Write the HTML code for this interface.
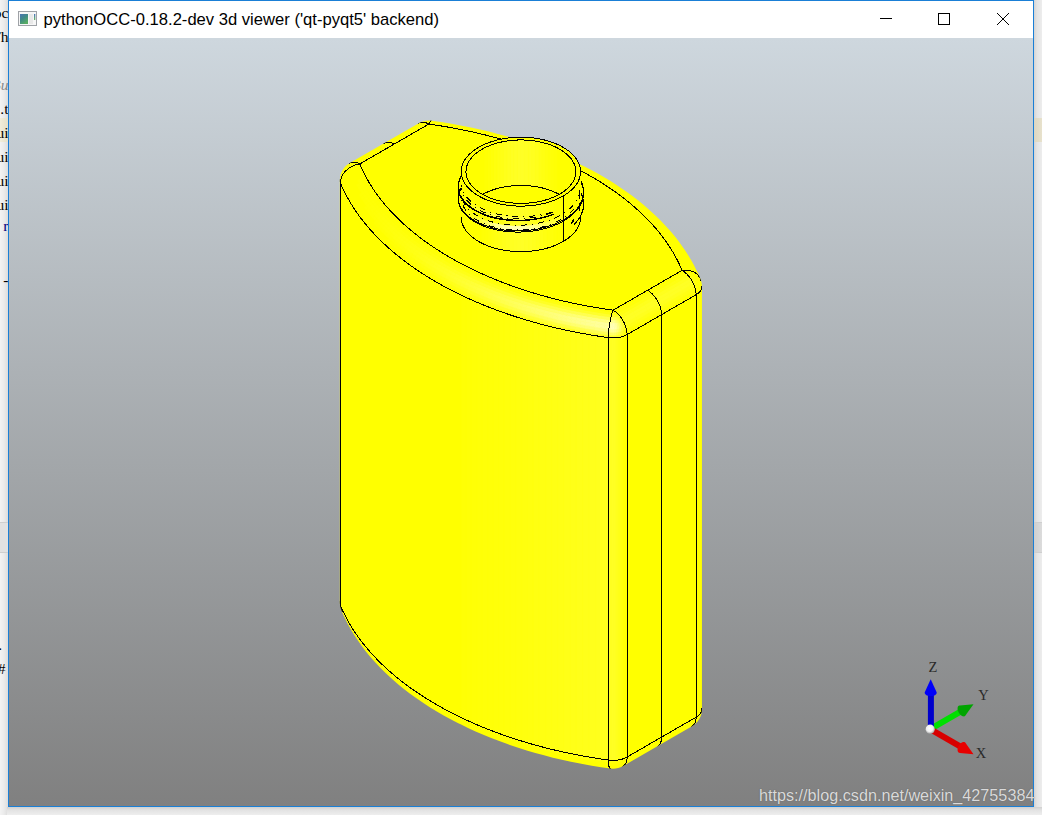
<!DOCTYPE html>
<html><head><meta charset="utf-8">
<style>
html,body{margin:0;padding:0;}
body{width:1042px;height:815px;position:relative;overflow:hidden;background:#ececec;font-family:"Liberation Sans",sans-serif;}
#lstrip{position:absolute;left:0;top:0;width:8px;height:815px;background:linear-gradient(to right,#f3f3f3 0px,#ebebeb 4px,#dcdcdc 8px);}
#rstrip{position:absolute;left:1034px;top:0;width:8px;height:815px;background:linear-gradient(to right,#d4d4d4 0px,#e4e4e4 3px,#ededed 8px);}
#bstrip{position:absolute;left:7px;top:807px;width:1035px;height:8px;background:linear-gradient(to bottom,#d0d0d0 0px,#e2e2e2 3px,#eeeeee 8px);}
.code{position:absolute;right:1033.5px;font-family:"Liberation Serif",serif;font-size:15.5px;color:#000;line-height:16px;white-space:pre;}
#win{position:absolute;left:8px;top:0;width:1024px;height:805px;border:1px solid #1a7fd6;background:#fff;}
#title{position:absolute;left:0;top:0;width:1024px;height:37px;background:#fff;}
#ttext{position:absolute;left:34.5px;top:9.2px;font-size:16.6px;color:#000;white-space:nowrap;}
#view{position:absolute;left:0;top:37px;width:1024px;height:768px;background:linear-gradient(to bottom,rgb(206,215,222),rgb(128,128,128));}
#svg{position:absolute;left:0;top:0;}
#wm{position:absolute;left:759px;top:786.3px;font-size:16.2px;color:#dadada;white-space:nowrap;text-shadow:0 0 1px rgba(60,60,60,.6);}
</style></head><body>
<div id="lstrip"></div>
<div style="position:absolute;left:0;top:118px;width:8px;height:24px;background:linear-gradient(to right,#f2eedb,#e6e0c8)"></div>
<div style="position:absolute;left:0;top:522px;width:8px;height:1px;background:#cfcfcf"></div>
<div style="position:absolute;left:0;top:523px;width:8px;height:29px;background:#e2e2e2"></div>
<div style="position:absolute;left:0;top:552px;width:8px;height:1px;background:#cfcfcf"></div>
<div class="code" style="top:5px">oc</div>
<div class="code" style="top:29px">Th</div>
<div class="code" style="top:77px;color:#888;font-style:italic">Bu</div>
<div class="code" style="top:101px">.t</div>
<div class="code" style="top:125px">ui</div>
<div class="code" style="top:149px">ui</div>
<div class="code" style="top:173px">ui</div>
<div class="code" style="top:197px">ui</div>
<div class="code" style="top:218px;color:#000080"> r</div>
<div class="code" style="top:272px"> -</div>
<div class="code" style="top:637px;right:1040px"> .</div>
<div class="code" style="top:661px;right:1036.5px"> #</div>
<div id="rstrip"></div>
<div style="position:absolute;left:1034px;top:118px;width:8px;height:24px;background:linear-gradient(to right,#dcd6c2,#e8e2cc)"></div>
<div style="position:absolute;left:1034px;top:522px;width:8px;height:1px;background:#cfcfcf"></div>
<div style="position:absolute;left:1034px;top:523px;width:8px;height:29px;background:linear-gradient(to right,#cfcfcf,#dcdcdc)"></div>
<div style="position:absolute;left:1034px;top:552px;width:8px;height:1px;background:#cfcfcf"></div>
<div id="bstrip"></div>
<div id="win">
 <div id="title"><div id="ttext">pythonOCC-0.18.2-dev 3d viewer ('qt-pyqt5' backend)</div></div>
 <div id="view"></div>
</div>
<svg id="svg" width="1042" height="815" viewBox="0 0 1042 815">
<!-- title icons -->
<defs><linearGradient id="icg" x1="0" y1="0" x2="0.6" y2="1"><stop offset="0" stop-color="#4a74b4"/><stop offset="0.5" stop-color="#3f8a86"/><stop offset="1" stop-color="#58ac62"/></linearGradient>
<linearGradient id="icb" x1="0" y1="0" x2="0" y2="1"><stop offset="0" stop-color="#4a74c0"/><stop offset="1" stop-color="#6ab860"/></linearGradient></defs>
<g>
 <rect x="18.5" y="11.5" width="18" height="14" fill="#f6f6f6" stroke="#9fa2a7" stroke-width="1"/>
 <rect x="20" y="14" width="8" height="10" fill="url(#icg)"/>
 <rect x="29" y="14" width="4" height="10" fill="#e8e8e8"/>
 <rect x="34" y="14" width="1.3" height="6" fill="url(#icb)"/>
</g>
<g stroke="#000" stroke-width="1" fill="none">
 <line x1="880" y1="18.5" x2="892" y2="18.5"/>
 <rect x="938.5" y="13.5" width="11" height="11"/>
 <line x1="997" y1="13" x2="1009" y2="25"/>
 <line x1="1009" y1="13" x2="997" y2="25"/>
</g>
<path d="M339.86 180.20 L340.03 177.60 L340.54 175.05 L341.37 172.58 L342.52 170.25 L343.97 168.08 L345.69 166.12 L347.64 164.41 L349.81 162.96 L418.81 123.13 L421.14 121.98 L423.61 121.14 L426.16 120.63 L428.75 120.46 L431.35 120.63 L440.73 122.00 L450.03 123.52 L459.25 125.19 L461.80 125.70 L470.94 127.52 L479.99 129.50 L488.93 131.61 L497.77 133.88 L506.49 136.28 L515.09 138.83 L523.56 141.52 L531.90 144.34 L534.37 145.18 L542.56 148.14 L550.61 151.23 L558.50 154.46 L566.24 157.81 L573.80 161.28 L581.19 164.88 L583.53 166.03 L590.74 169.75 L597.76 173.58 L604.60 177.53 L611.24 181.59 L617.68 185.75 L619.84 187.20 L626.08 191.46 L632.10 195.83 L637.90 200.29 L643.48 204.85 L648.84 209.50 L650.79 211.22 L655.92 215.95 L660.82 220.76 L665.47 225.65 L669.88 230.62 L671.60 232.57 L675.77 237.61 L679.69 242.71 L683.36 247.88 L684.80 250.04 L688.22 255.26 L691.37 260.54 L694.27 265.87 L695.42 268.20 L698.06 273.57 L700.43 278.98 L701.26 281.45 L701.77 284.00 L701.94 286.60 L701.94 709.05 L701.77 711.65 L701.26 714.20 L700.43 716.67 L699.27 719.00 L697.83 721.17 L696.11 723.12 L694.15 724.84 L691.99 726.29 L623.00 766.12 L620.66 767.27 L618.20 768.11 L615.64 768.62 L613.04 768.79 L610.45 768.62 L601.08 767.25 L591.77 765.73 L582.55 764.05 L580.00 763.55 L570.86 761.72 L561.82 759.75 L552.87 757.63 L544.03 755.37 L535.31 752.97 L526.71 750.42 L518.24 747.73 L509.90 744.90 L507.43 744.07 L499.24 741.11 L491.19 738.01 L483.30 734.79 L475.56 731.44 L468.00 727.97 L460.61 724.37 L458.27 723.22 L451.06 719.50 L444.04 715.67 L437.20 711.72 L430.56 707.66 L424.12 703.50 L421.96 702.05 L415.73 697.78 L409.70 693.42 L403.90 688.95 L398.32 684.40 L392.96 679.75 L391.00 678.03 L385.88 673.30 L380.99 668.49 L376.33 663.60 L371.92 658.63 L370.20 656.67 L366.03 651.64 L362.11 646.53 L358.44 641.37 L357.00 639.21 L353.58 633.98 L350.43 628.71 L347.53 623.38 L346.38 621.05 L343.74 615.68 L341.37 610.27 L340.54 607.80 L340.03 605.25 L339.86 602.65 Z" fill="#ffff00"/>
<g><path d="M461.03 717.53 L466.18 719.96 L466.18 297.50 L461.03 295.07 Z" fill="rgb(255,255,5)" stroke="rgb(255,255,5)" stroke-width="0.6"/><path d="M466.18 719.96 L471.41 722.33 L471.41 299.87 L466.18 297.50 Z" fill="rgb(255,255,6)" stroke="rgb(255,255,6)" stroke-width="0.6"/><path d="M471.41 722.33 L476.72 724.64 L476.72 302.19 L471.41 299.87 Z" fill="rgb(255,255,6)" stroke="rgb(255,255,6)" stroke-width="0.6"/><path d="M476.72 724.64 L482.10 726.90 L482.10 304.45 L476.72 302.19 Z" fill="rgb(255,255,7)" stroke="rgb(255,255,7)" stroke-width="0.6"/><path d="M482.10 726.90 L487.54 729.10 L487.54 306.65 L482.10 304.45 Z" fill="rgb(255,255,8)" stroke="rgb(255,255,8)" stroke-width="0.6"/><path d="M487.54 729.10 L493.06 731.25 L493.06 308.79 L487.54 306.65 Z" fill="rgb(255,255,8)" stroke="rgb(255,255,8)" stroke-width="0.6"/><path d="M493.06 731.25 L498.65 733.33 L498.65 310.88 L493.06 308.79 Z" fill="rgb(255,255,9)" stroke="rgb(255,255,9)" stroke-width="0.6"/><path d="M498.65 733.33 L504.30 735.36 L504.30 312.90 L498.65 310.88 Z" fill="rgb(255,255,10)" stroke="rgb(255,255,10)" stroke-width="0.6"/><path d="M504.30 735.36 L510.01 737.32 L510.01 314.86 L504.30 312.90 Z" fill="rgb(255,255,11)" stroke="rgb(255,255,11)" stroke-width="0.6"/><path d="M510.01 737.32 L515.79 739.22 L515.79 316.77 L510.01 314.86 Z" fill="rgb(255,255,12)" stroke="rgb(255,255,12)" stroke-width="0.6"/><path d="M515.79 739.22 L521.62 741.06 L521.62 318.61 L515.79 316.77 Z" fill="rgb(255,255,13)" stroke="rgb(255,255,13)" stroke-width="0.6"/><path d="M521.62 741.06 L527.51 742.84 L527.51 320.39 L521.62 318.61 Z" fill="rgb(255,255,14)" stroke="rgb(255,255,14)" stroke-width="0.6"/><path d="M527.51 742.84 L533.46 744.56 L533.46 322.11 L527.51 320.39 Z" fill="rgb(255,255,15)" stroke="rgb(255,255,15)" stroke-width="0.6"/><path d="M533.46 744.56 L539.46 746.21 L539.46 323.76 L533.46 322.11 Z" fill="rgb(255,255,17)" stroke="rgb(255,255,17)" stroke-width="0.6"/><path d="M539.46 746.21 L545.52 747.80 L545.52 325.35 L539.46 323.76 Z" fill="rgb(255,255,18)" stroke="rgb(255,255,18)" stroke-width="0.6"/><path d="M545.52 747.80 L551.62 749.33 L551.62 326.87 L545.52 325.35 Z" fill="rgb(255,255,19)" stroke="rgb(255,255,19)" stroke-width="0.6"/><path d="M551.62 749.33 L557.77 750.79 L557.77 328.33 L551.62 326.87 Z" fill="rgb(255,255,20)" stroke="rgb(255,255,20)" stroke-width="0.6"/><path d="M557.77 750.79 L563.97 752.18 L563.97 329.72 L557.77 328.33 Z" fill="rgb(255,255,21)" stroke="rgb(255,255,21)" stroke-width="0.6"/><path d="M563.97 752.18 L570.21 753.51 L570.21 331.05 L563.97 329.72 Z" fill="rgb(255,255,23)" stroke="rgb(255,255,23)" stroke-width="0.6"/><path d="M570.21 753.51 L576.49 754.77 L576.49 332.31 L570.21 331.05 Z" fill="rgb(255,255,24)" stroke="rgb(255,255,24)" stroke-width="0.6"/><path d="M576.49 754.77 L582.81 755.96 L582.81 333.51 L576.49 332.31 Z" fill="rgb(255,255,25)" stroke="rgb(255,255,25)" stroke-width="0.6"/><path d="M582.81 755.96 L589.17 757.09 L589.17 334.63 L582.81 333.51 Z" fill="rgb(255,255,26)" stroke="rgb(255,255,26)" stroke-width="0.6"/><path d="M589.17 757.09 L595.56 758.15 L595.56 335.69 L589.17 334.63 Z" fill="rgb(255,255,28)" stroke="rgb(255,255,28)" stroke-width="0.6"/><path d="M595.56 758.15 L601.98 759.14 L601.98 336.69 L595.56 335.69 Z" fill="rgb(255,255,29)" stroke="rgb(255,255,29)" stroke-width="0.6"/><path d="M601.98 759.14 L608.44 760.06 L608.44 337.61 L601.98 336.69 Z" fill="rgb(255,255,30)" stroke="rgb(255,255,30)" stroke-width="0.6"/><path d="M357.37 180.39 L358.85 183.05 L361.59 181.56 L360.13 178.92 Z" fill="rgb(255,255,5)" stroke="rgb(255,255,5)" stroke-width="0.6"/><path d="M356.32 184.86 L357.87 187.53 L360.38 185.70 L358.85 183.05 Z" fill="rgb(255,255,5)" stroke="rgb(255,255,5)" stroke-width="0.6"/><path d="M358.85 183.05 L360.38 185.70 L363.11 184.18 L361.59 181.56 Z" fill="rgb(255,255,5)" stroke="rgb(255,255,5)" stroke-width="0.6"/><path d="M357.87 187.53 L359.48 190.19 L361.98 188.34 L360.38 185.70 Z" fill="rgb(255,255,5)" stroke="rgb(255,255,5)" stroke-width="0.6"/><path d="M360.38 185.70 L361.98 188.34 L364.70 186.80 L363.11 184.18 Z" fill="rgb(255,255,5)" stroke="rgb(255,255,5)" stroke-width="0.6"/><path d="M359.48 190.19 L361.15 192.83 L363.65 190.96 L361.98 188.34 Z" fill="rgb(255,255,5)" stroke="rgb(255,255,5)" stroke-width="0.6"/><path d="M361.98 188.34 L363.65 190.96 L366.35 189.40 L364.70 186.80 Z" fill="rgb(255,255,5)" stroke="rgb(255,255,5)" stroke-width="0.6"/><path d="M364.70 186.80 L366.35 189.40 L369.19 188.19 L367.56 185.61 Z" fill="rgb(255,255,5)" stroke="rgb(255,255,5)" stroke-width="0.6"/><path d="M358.93 194.96 L360.68 197.61 L362.89 195.46 L361.15 192.83 Z" fill="rgb(255,255,5)" stroke="rgb(255,255,5)" stroke-width="0.6"/><path d="M361.15 192.83 L362.89 195.46 L365.37 193.57 L363.65 190.96 Z" fill="rgb(255,255,6)" stroke="rgb(255,255,6)" stroke-width="0.6"/><path d="M363.65 190.96 L365.37 193.57 L368.06 191.99 L366.35 189.40 Z" fill="rgb(255,255,6)" stroke="rgb(255,255,6)" stroke-width="0.6"/><path d="M366.35 189.40 L368.06 191.99 L370.89 190.76 L369.19 188.19 Z" fill="rgb(255,255,5)" stroke="rgb(255,255,5)" stroke-width="0.6"/><path d="M360.68 197.61 L362.49 200.24 L364.69 198.07 L362.89 195.46 Z" fill="rgb(255,255,5)" stroke="rgb(255,255,5)" stroke-width="0.6"/><path d="M362.89 195.46 L364.69 198.07 L367.16 196.16 L365.37 193.57 Z" fill="rgb(255,255,6)" stroke="rgb(255,255,6)" stroke-width="0.6"/><path d="M365.37 193.57 L367.16 196.16 L369.83 194.56 L368.06 191.99 Z" fill="rgb(255,255,6)" stroke="rgb(255,255,6)" stroke-width="0.6"/><path d="M368.06 191.99 L369.83 194.56 L372.65 193.31 L370.89 190.76 Z" fill="rgb(255,255,5)" stroke="rgb(255,255,5)" stroke-width="0.6"/><path d="M362.49 200.24 L364.37 202.86 L366.55 200.67 L364.69 198.07 Z" fill="rgb(255,255,5)" stroke="rgb(255,255,5)" stroke-width="0.6"/><path d="M364.69 198.07 L366.55 200.67 L369.01 198.74 L367.16 196.16 Z" fill="rgb(255,255,7)" stroke="rgb(255,255,7)" stroke-width="0.6"/><path d="M367.16 196.16 L369.01 198.74 L371.67 197.12 L369.83 194.56 Z" fill="rgb(255,255,6)" stroke="rgb(255,255,6)" stroke-width="0.6"/><path d="M369.83 194.56 L371.67 197.12 L374.46 195.84 L372.65 193.31 Z" fill="rgb(255,255,5)" stroke="rgb(255,255,5)" stroke-width="0.6"/><path d="M364.37 202.86 L366.30 205.46 L368.48 203.26 L366.55 200.67 Z" fill="rgb(255,255,6)" stroke="rgb(255,255,6)" stroke-width="0.6"/><path d="M366.55 200.67 L368.48 203.26 L370.92 201.31 L369.01 198.74 Z" fill="rgb(255,255,7)" stroke="rgb(255,255,7)" stroke-width="0.6"/><path d="M369.01 198.74 L370.92 201.31 L373.56 199.67 L371.67 197.12 Z" fill="rgb(255,255,7)" stroke="rgb(255,255,7)" stroke-width="0.6"/><path d="M371.67 197.12 L373.56 199.67 L376.34 198.37 L374.46 195.84 Z" fill="rgb(255,255,5)" stroke="rgb(255,255,5)" stroke-width="0.6"/><path d="M364.45 207.87 L366.46 210.48 L368.30 208.05 L366.30 205.46 Z" fill="rgb(255,255,5)" stroke="rgb(255,255,5)" stroke-width="0.6"/><path d="M366.30 205.46 L368.30 208.05 L370.47 205.83 L368.48 203.26 Z" fill="rgb(255,255,6)" stroke="rgb(255,255,6)" stroke-width="0.6"/><path d="M368.48 203.26 L370.47 205.83 L372.89 203.86 L370.92 201.31 Z" fill="rgb(255,255,7)" stroke="rgb(255,255,7)" stroke-width="0.6"/><path d="M370.92 201.31 L372.89 203.86 L375.52 202.20 L373.56 199.67 Z" fill="rgb(255,255,7)" stroke="rgb(255,255,7)" stroke-width="0.6"/><path d="M373.56 199.67 L375.52 202.20 L378.28 200.87 L376.34 198.37 Z" fill="rgb(255,255,5)" stroke="rgb(255,255,5)" stroke-width="0.6"/><path d="M366.46 210.48 L368.53 213.06 L370.37 210.62 L368.30 208.05 Z" fill="rgb(255,255,5)" stroke="rgb(255,255,5)" stroke-width="0.6"/><path d="M368.30 208.05 L370.37 210.62 L372.51 208.38 L370.47 205.83 Z" fill="rgb(255,255,7)" stroke="rgb(255,255,7)" stroke-width="0.6"/><path d="M370.47 205.83 L372.51 208.38 L374.92 206.40 L372.89 203.86 Z" fill="rgb(255,255,8)" stroke="rgb(255,255,8)" stroke-width="0.6"/><path d="M372.89 203.86 L374.92 206.40 L377.53 204.71 L375.52 202.20 Z" fill="rgb(255,255,7)" stroke="rgb(255,255,7)" stroke-width="0.6"/><path d="M375.52 202.20 L377.53 204.71 L380.28 203.37 L378.28 200.87 Z" fill="rgb(255,255,5)" stroke="rgb(255,255,5)" stroke-width="0.6"/><path d="M368.53 213.06 L370.67 215.63 L372.49 213.18 L370.37 210.62 Z" fill="rgb(255,255,6)" stroke="rgb(255,255,6)" stroke-width="0.6"/><path d="M370.37 210.62 L372.49 213.18 L374.62 210.92 L372.51 208.38 Z" fill="rgb(255,255,8)" stroke="rgb(255,255,8)" stroke-width="0.6"/><path d="M372.51 208.38 L374.62 210.92 L377.02 208.91 L374.92 206.40 Z" fill="rgb(255,255,8)" stroke="rgb(255,255,8)" stroke-width="0.6"/><path d="M374.92 206.40 L377.02 208.91 L379.61 207.21 L377.53 204.71 Z" fill="rgb(255,255,8)" stroke="rgb(255,255,8)" stroke-width="0.6"/><path d="M377.53 204.71 L379.61 207.21 L382.34 205.84 L380.28 203.37 Z" fill="rgb(255,255,6)" stroke="rgb(255,255,6)" stroke-width="0.6"/><path d="M370.67 215.63 L372.86 218.18 L374.67 215.71 L372.49 213.18 Z" fill="rgb(255,255,6)" stroke="rgb(255,255,6)" stroke-width="0.6"/><path d="M372.49 213.18 L374.67 215.71 L376.79 213.44 L374.62 210.92 Z" fill="rgb(255,255,8)" stroke="rgb(255,255,8)" stroke-width="0.6"/><path d="M374.62 210.92 L376.79 213.44 L379.17 211.41 L377.02 208.91 Z" fill="rgb(255,255,9)" stroke="rgb(255,255,9)" stroke-width="0.6"/><path d="M377.02 208.91 L379.17 211.41 L381.74 209.69 L379.61 207.21 Z" fill="rgb(255,255,8)" stroke="rgb(255,255,8)" stroke-width="0.6"/><path d="M379.61 207.21 L381.74 209.69 L384.45 208.30 L382.34 205.84 Z" fill="rgb(255,255,6)" stroke="rgb(255,255,6)" stroke-width="0.6"/><path d="M372.86 218.18 L375.12 220.72 L376.92 218.23 L374.67 215.71 Z" fill="rgb(255,255,7)" stroke="rgb(255,255,7)" stroke-width="0.6"/><path d="M374.67 215.71 L376.92 218.23 L379.02 215.94 L376.79 213.44 Z" fill="rgb(255,255,9)" stroke="rgb(255,255,9)" stroke-width="0.6"/><path d="M376.79 213.44 L379.02 215.94 L381.38 213.90 L379.17 211.41 Z" fill="rgb(255,255,10)" stroke="rgb(255,255,10)" stroke-width="0.6"/><path d="M379.17 211.41 L381.38 213.90 L383.94 212.15 L381.74 209.69 Z" fill="rgb(255,255,8)" stroke="rgb(255,255,8)" stroke-width="0.6"/><path d="M381.74 209.69 L383.94 212.15 L386.63 210.74 L384.45 208.30 Z" fill="rgb(255,255,6)" stroke="rgb(255,255,6)" stroke-width="0.6"/><path d="M373.67 223.33 L376.00 225.85 L377.44 223.23 L375.12 220.72 Z" fill="rgb(255,255,5)" stroke="rgb(255,255,5)" stroke-width="0.6"/><path d="M375.12 220.72 L377.44 223.23 L379.22 220.74 L376.92 218.23 Z" fill="rgb(255,255,7)" stroke="rgb(255,255,7)" stroke-width="0.6"/><path d="M376.92 218.23 L379.22 220.74 L381.31 218.43 L379.02 215.94 Z" fill="rgb(255,255,10)" stroke="rgb(255,255,10)" stroke-width="0.6"/><path d="M379.02 215.94 L381.31 218.43 L383.65 216.36 L381.38 213.90 Z" fill="rgb(255,255,10)" stroke="rgb(255,255,10)" stroke-width="0.6"/><path d="M381.38 213.90 L383.65 216.36 L386.19 214.60 L383.94 212.15 Z" fill="rgb(255,255,9)" stroke="rgb(255,255,9)" stroke-width="0.6"/><path d="M383.94 212.15 L386.19 214.60 L388.86 213.17 L386.63 210.74 Z" fill="rgb(255,255,6)" stroke="rgb(255,255,6)" stroke-width="0.6"/><path d="M376.00 225.85 L378.39 228.36 L379.81 225.73 L377.44 223.23 Z" fill="rgb(255,255,5)" stroke="rgb(255,255,5)" stroke-width="0.6"/><path d="M377.44 223.23 L379.81 225.73 L381.59 223.22 L379.22 220.74 Z" fill="rgb(255,255,8)" stroke="rgb(255,255,8)" stroke-width="0.6"/><path d="M379.22 220.74 L381.59 223.22 L383.66 220.89 L381.31 218.43 Z" fill="rgb(255,255,10)" stroke="rgb(255,255,10)" stroke-width="0.6"/><path d="M381.31 218.43 L383.66 220.89 L385.98 218.81 L383.65 216.36 Z" fill="rgb(255,255,11)" stroke="rgb(255,255,11)" stroke-width="0.6"/><path d="M383.65 216.36 L385.98 218.81 L388.50 217.02 L386.19 214.60 Z" fill="rgb(255,255,9)" stroke="rgb(255,255,9)" stroke-width="0.6"/><path d="M386.19 214.60 L388.50 217.02 L391.15 215.57 L388.86 213.17 Z" fill="rgb(255,255,6)" stroke="rgb(255,255,6)" stroke-width="0.6"/><path d="M378.39 228.36 L380.84 230.85 L382.25 228.21 L379.81 225.73 Z" fill="rgb(255,255,6)" stroke="rgb(255,255,6)" stroke-width="0.6"/><path d="M379.81 225.73 L382.25 228.21 L384.01 225.68 L381.59 223.22 Z" fill="rgb(255,255,9)" stroke="rgb(255,255,9)" stroke-width="0.6"/><path d="M381.59 223.22 L384.01 225.68 L386.06 223.34 L383.66 220.89 Z" fill="rgb(255,255,11)" stroke="rgb(255,255,11)" stroke-width="0.6"/><path d="M383.66 220.89 L386.06 223.34 L388.37 221.24 L385.98 218.81 Z" fill="rgb(255,255,11)" stroke="rgb(255,255,11)" stroke-width="0.6"/><path d="M385.98 218.81 L388.37 221.24 L390.87 219.43 L388.50 217.02 Z" fill="rgb(255,255,10)" stroke="rgb(255,255,10)" stroke-width="0.6"/><path d="M388.50 217.02 L390.87 219.43 L393.50 217.96 L391.15 215.57 Z" fill="rgb(255,255,7)" stroke="rgb(255,255,7)" stroke-width="0.6"/><path d="M380.84 230.85 L383.35 233.32 L384.75 230.66 L382.25 228.21 Z" fill="rgb(255,255,6)" stroke="rgb(255,255,6)" stroke-width="0.6"/><path d="M382.25 228.21 L384.75 230.66 L386.49 228.13 L384.01 225.68 Z" fill="rgb(255,255,10)" stroke="rgb(255,255,10)" stroke-width="0.6"/><path d="M384.01 225.68 L386.49 228.13 L388.53 225.77 L386.06 223.34 Z" fill="rgb(255,255,12)" stroke="rgb(255,255,12)" stroke-width="0.6"/><path d="M386.06 223.34 L388.53 225.77 L390.82 223.65 L388.37 221.24 Z" fill="rgb(255,255,12)" stroke="rgb(255,255,12)" stroke-width="0.6"/><path d="M388.37 221.24 L390.82 223.65 L393.30 221.82 L390.87 219.43 Z" fill="rgb(255,255,10)" stroke="rgb(255,255,10)" stroke-width="0.6"/><path d="M390.87 219.43 L393.30 221.82 L395.91 220.33 L393.50 217.96 Z" fill="rgb(255,255,7)" stroke="rgb(255,255,7)" stroke-width="0.6"/><path d="M383.35 233.32 L385.91 235.77 L387.30 233.10 L384.75 230.66 Z" fill="rgb(255,255,7)" stroke="rgb(255,255,7)" stroke-width="0.6"/><path d="M384.75 230.66 L387.30 233.10 L389.03 230.55 L386.49 228.13 Z" fill="rgb(255,255,11)" stroke="rgb(255,255,11)" stroke-width="0.6"/><path d="M386.49 228.13 L389.03 230.55 L391.05 228.18 L388.53 225.77 Z" fill="rgb(255,255,13)" stroke="rgb(255,255,13)" stroke-width="0.6"/><path d="M388.53 225.77 L391.05 228.18 L393.32 226.04 L390.82 223.65 Z" fill="rgb(255,255,13)" stroke="rgb(255,255,13)" stroke-width="0.6"/><path d="M390.82 223.65 L393.32 226.04 L395.78 224.19 L393.30 221.82 Z" fill="rgb(255,255,10)" stroke="rgb(255,255,10)" stroke-width="0.6"/><path d="M393.30 221.82 L395.78 224.19 L398.37 222.68 L395.91 220.33 Z" fill="rgb(255,255,7)" stroke="rgb(255,255,7)" stroke-width="0.6"/><path d="M385.91 235.77 L388.53 238.20 L389.91 235.52 L387.30 233.10 Z" fill="rgb(255,255,8)" stroke="rgb(255,255,8)" stroke-width="0.6"/><path d="M387.30 233.10 L389.91 235.52 L391.63 232.95 L389.03 230.55 Z" fill="rgb(255,255,11)" stroke="rgb(255,255,11)" stroke-width="0.6"/><path d="M389.03 230.55 L391.63 232.95 L393.63 230.57 L391.05 228.18 Z" fill="rgb(255,255,14)" stroke="rgb(255,255,14)" stroke-width="0.6"/><path d="M391.05 228.18 L393.63 230.57 L395.88 228.41 L393.32 226.04 Z" fill="rgb(255,255,14)" stroke="rgb(255,255,14)" stroke-width="0.6"/><path d="M393.32 226.04 L395.88 228.41 L398.32 226.54 L395.78 224.19 Z" fill="rgb(255,255,11)" stroke="rgb(255,255,11)" stroke-width="0.6"/><path d="M395.78 224.19 L398.32 226.54 L400.88 225.01 L398.37 222.68 Z" fill="rgb(255,255,7)" stroke="rgb(255,255,7)" stroke-width="0.6"/><path d="M387.53 240.92 L390.22 243.34 L391.22 240.61 L388.53 238.20 Z" fill="rgb(255,255,5)" stroke="rgb(255,255,5)" stroke-width="0.6"/><path d="M388.53 238.20 L391.22 240.61 L392.58 237.92 L389.91 235.52 Z" fill="rgb(255,255,9)" stroke="rgb(255,255,9)" stroke-width="0.6"/><path d="M389.91 235.52 L392.58 237.92 L394.28 235.34 L391.63 232.95 Z" fill="rgb(255,255,12)" stroke="rgb(255,255,12)" stroke-width="0.6"/><path d="M391.63 232.95 L394.28 235.34 L396.27 232.93 L393.63 230.57 Z" fill="rgb(255,255,15)" stroke="rgb(255,255,15)" stroke-width="0.6"/><path d="M393.63 230.57 L396.27 232.93 L398.50 230.76 L395.88 228.41 Z" fill="rgb(255,255,14)" stroke="rgb(255,255,14)" stroke-width="0.6"/><path d="M395.88 228.41 L398.50 230.76 L400.91 228.87 L398.32 226.54 Z" fill="rgb(255,255,11)" stroke="rgb(255,255,11)" stroke-width="0.6"/><path d="M398.32 226.54 L400.91 228.87 L403.46 227.32 L400.88 225.01 Z" fill="rgb(255,255,7)" stroke="rgb(255,255,7)" stroke-width="0.6"/><path d="M390.22 243.34 L392.96 245.73 L393.96 242.99 L391.22 240.61 Z" fill="rgb(255,255,5)" stroke="rgb(255,255,5)" stroke-width="0.6"/><path d="M391.22 240.61 L393.96 242.99 L395.31 240.29 L392.58 237.92 Z" fill="rgb(255,255,9)" stroke="rgb(255,255,9)" stroke-width="0.6"/><path d="M392.58 237.92 L395.31 240.29 L396.99 237.70 L394.28 235.34 Z" fill="rgb(255,255,14)" stroke="rgb(255,255,14)" stroke-width="0.6"/><path d="M394.28 235.34 L396.99 237.70 L398.96 235.28 L396.27 232.93 Z" fill="rgb(255,255,16)" stroke="rgb(255,255,16)" stroke-width="0.6"/><path d="M396.27 232.93 L398.96 235.28 L401.17 233.09 L398.50 230.76 Z" fill="rgb(255,255,15)" stroke="rgb(255,255,15)" stroke-width="0.6"/><path d="M398.50 230.76 L401.17 233.09 L403.56 231.18 L400.91 228.87 Z" fill="rgb(255,255,12)" stroke="rgb(255,255,12)" stroke-width="0.6"/><path d="M400.91 228.87 L403.56 231.18 L406.08 229.61 L403.46 227.32 Z" fill="rgb(255,255,7)" stroke="rgb(255,255,7)" stroke-width="0.6"/><path d="M392.96 245.73 L395.77 248.10 L396.75 245.35 L393.96 242.99 Z" fill="rgb(255,255,6)" stroke="rgb(255,255,6)" stroke-width="0.6"/><path d="M393.96 242.99 L396.75 245.35 L398.09 242.64 L395.31 240.29 Z" fill="rgb(255,255,10)" stroke="rgb(255,255,10)" stroke-width="0.6"/><path d="M395.31 240.29 L398.09 242.64 L399.76 240.04 L396.99 237.70 Z" fill="rgb(255,255,15)" stroke="rgb(255,255,15)" stroke-width="0.6"/><path d="M396.99 237.70 L399.76 240.04 L401.71 237.60 L398.96 235.28 Z" fill="rgb(255,255,17)" stroke="rgb(255,255,17)" stroke-width="0.6"/><path d="M398.96 235.28 L401.71 237.60 L403.90 235.39 L401.17 233.09 Z" fill="rgb(255,255,16)" stroke="rgb(255,255,16)" stroke-width="0.6"/><path d="M401.17 233.09 L403.90 235.39 L406.27 233.47 L403.56 231.18 Z" fill="rgb(255,255,12)" stroke="rgb(255,255,12)" stroke-width="0.6"/><path d="M403.56 231.18 L406.27 233.47 L408.77 231.88 L406.08 229.61 Z" fill="rgb(255,255,8)" stroke="rgb(255,255,8)" stroke-width="0.6"/><path d="M395.77 248.10 L398.63 250.45 L399.60 247.70 L396.75 245.35 Z" fill="rgb(255,255,6)" stroke="rgb(255,255,6)" stroke-width="0.6"/><path d="M396.75 245.35 L399.60 247.70 L400.93 244.98 L398.09 242.64 Z" fill="rgb(255,255,11)" stroke="rgb(255,255,11)" stroke-width="0.6"/><path d="M398.09 242.64 L400.93 244.98 L402.58 242.36 L399.76 240.04 Z" fill="rgb(255,255,16)" stroke="rgb(255,255,16)" stroke-width="0.6"/><path d="M399.76 240.04 L402.58 242.36 L404.52 239.90 L401.71 237.60 Z" fill="rgb(255,255,18)" stroke="rgb(255,255,18)" stroke-width="0.6"/><path d="M401.71 237.60 L404.52 239.90 L406.68 237.68 L403.90 235.39 Z" fill="rgb(255,255,17)" stroke="rgb(255,255,17)" stroke-width="0.6"/><path d="M403.90 235.39 L406.68 237.68 L409.03 235.74 L406.27 233.47 Z" fill="rgb(255,255,13)" stroke="rgb(255,255,13)" stroke-width="0.6"/><path d="M406.27 233.47 L409.03 235.74 L411.50 234.12 L408.77 231.88 Z" fill="rgb(255,255,8)" stroke="rgb(255,255,8)" stroke-width="0.6"/><path d="M398.63 250.45 L401.55 252.78 L402.51 250.01 L399.60 247.70 Z" fill="rgb(255,255,7)" stroke="rgb(255,255,7)" stroke-width="0.6"/><path d="M399.60 247.70 L402.51 250.01 L403.83 247.28 L400.93 244.98 Z" fill="rgb(255,255,12)" stroke="rgb(255,255,12)" stroke-width="0.6"/><path d="M400.93 244.98 L403.83 247.28 L405.46 244.65 L402.58 242.36 Z" fill="rgb(255,255,17)" stroke="rgb(255,255,17)" stroke-width="0.6"/><path d="M402.58 242.36 L405.46 244.65 L407.37 242.18 L404.52 239.90 Z" fill="rgb(255,255,19)" stroke="rgb(255,255,19)" stroke-width="0.6"/><path d="M404.52 239.90 L407.37 242.18 L409.52 239.94 L406.68 237.68 Z" fill="rgb(255,255,18)" stroke="rgb(255,255,18)" stroke-width="0.6"/><path d="M406.68 237.68 L409.52 239.94 L411.84 237.98 L409.03 235.74 Z" fill="rgb(255,255,13)" stroke="rgb(255,255,13)" stroke-width="0.6"/><path d="M409.03 235.74 L411.84 237.98 L414.29 236.35 L411.50 234.12 Z" fill="rgb(255,255,8)" stroke="rgb(255,255,8)" stroke-width="0.6"/><path d="M401.55 252.78 L404.52 255.08 L405.47 252.31 L402.51 250.01 Z" fill="rgb(255,255,8)" stroke="rgb(255,255,8)" stroke-width="0.6"/><path d="M402.51 250.01 L405.47 252.31 L406.78 249.57 L403.83 247.28 Z" fill="rgb(255,255,13)" stroke="rgb(255,255,13)" stroke-width="0.6"/><path d="M403.83 247.28 L406.78 249.57 L408.39 246.92 L405.46 244.65 Z" fill="rgb(255,255,18)" stroke="rgb(255,255,18)" stroke-width="0.6"/><path d="M405.46 244.65 L408.39 246.92 L410.29 244.44 L407.37 242.18 Z" fill="rgb(255,255,20)" stroke="rgb(255,255,20)" stroke-width="0.6"/><path d="M407.37 242.18 L410.29 244.44 L412.41 242.18 L409.52 239.94 Z" fill="rgb(255,255,19)" stroke="rgb(255,255,19)" stroke-width="0.6"/><path d="M409.52 239.94 L412.41 242.18 L414.71 240.20 L411.84 237.98 Z" fill="rgb(255,255,14)" stroke="rgb(255,255,14)" stroke-width="0.6"/><path d="M411.84 237.98 L414.71 240.20 L417.13 238.55 L414.29 236.35 Z" fill="rgb(255,255,8)" stroke="rgb(255,255,8)" stroke-width="0.6"/><path d="M404.52 255.08 L407.55 257.36 L408.49 254.58 L405.47 252.31 Z" fill="rgb(255,255,9)" stroke="rgb(255,255,9)" stroke-width="0.6"/><path d="M405.47 252.31 L408.49 254.58 L409.78 251.83 L406.78 249.57 Z" fill="rgb(255,255,15)" stroke="rgb(255,255,15)" stroke-width="0.6"/><path d="M406.78 249.57 L409.78 251.83 L411.38 249.17 L408.39 246.92 Z" fill="rgb(255,255,20)" stroke="rgb(255,255,20)" stroke-width="0.6"/><path d="M408.39 246.92 L411.38 249.17 L413.25 246.67 L410.29 244.44 Z" fill="rgb(255,255,22)" stroke="rgb(255,255,22)" stroke-width="0.6"/><path d="M410.29 244.44 L413.25 246.67 L415.36 244.40 L412.41 242.18 Z" fill="rgb(255,255,20)" stroke="rgb(255,255,20)" stroke-width="0.6"/><path d="M412.41 242.18 L415.36 244.40 L417.63 242.40 L414.71 240.20 Z" fill="rgb(255,255,14)" stroke="rgb(255,255,14)" stroke-width="0.6"/><path d="M414.71 240.20 L417.63 242.40 L420.03 240.73 L417.13 238.55 Z" fill="rgb(255,255,8)" stroke="rgb(255,255,8)" stroke-width="0.6"/><path d="M406.97 260.10 L410.06 262.36 L410.63 259.61 L407.55 257.36 Z" fill="rgb(255,255,5)" stroke="rgb(255,255,5)" stroke-width="0.6"/><path d="M407.55 257.36 L410.63 259.61 L411.56 256.83 L408.49 254.58 Z" fill="rgb(255,255,10)" stroke="rgb(255,255,10)" stroke-width="0.6"/><path d="M408.49 254.58 L411.56 256.83 L412.84 254.06 L409.78 251.83 Z" fill="rgb(255,255,16)" stroke="rgb(255,255,16)" stroke-width="0.6"/><path d="M409.78 251.83 L412.84 254.06 L414.42 251.39 L411.38 249.17 Z" fill="rgb(255,255,21)" stroke="rgb(255,255,21)" stroke-width="0.6"/><path d="M411.38 249.17 L414.42 251.39 L416.27 248.88 L413.25 246.67 Z" fill="rgb(255,255,23)" stroke="rgb(255,255,23)" stroke-width="0.6"/><path d="M413.25 246.67 L416.27 248.88 L418.35 246.59 L415.36 244.40 Z" fill="rgb(255,255,21)" stroke="rgb(255,255,21)" stroke-width="0.6"/><path d="M415.36 244.40 L418.35 246.59 L420.60 244.57 L417.63 242.40 Z" fill="rgb(255,255,15)" stroke="rgb(255,255,15)" stroke-width="0.6"/><path d="M417.63 242.40 L420.60 244.57 L422.98 242.88 L420.03 240.73 Z" fill="rgb(255,255,9)" stroke="rgb(255,255,9)" stroke-width="0.6"/><path d="M410.06 262.36 L413.20 264.59 L413.77 261.84 L410.63 259.61 Z" fill="rgb(255,255,5)" stroke="rgb(255,255,5)" stroke-width="0.6"/><path d="M410.63 259.61 L413.77 261.84 L414.69 259.05 L411.56 256.83 Z" fill="rgb(255,255,11)" stroke="rgb(255,255,11)" stroke-width="0.6"/><path d="M411.56 256.83 L414.69 259.05 L415.95 256.28 L412.84 254.06 Z" fill="rgb(255,255,17)" stroke="rgb(255,255,17)" stroke-width="0.6"/><path d="M412.84 254.06 L415.95 256.28 L417.51 253.59 L414.42 251.39 Z" fill="rgb(255,255,23)" stroke="rgb(255,255,23)" stroke-width="0.6"/><path d="M414.42 251.39 L417.51 253.59 L419.35 251.07 L416.27 248.88 Z" fill="rgb(255,255,24)" stroke="rgb(255,255,24)" stroke-width="0.6"/><path d="M416.27 248.88 L419.35 251.07 L421.40 248.76 L418.35 246.59 Z" fill="rgb(255,255,22)" stroke="rgb(255,255,22)" stroke-width="0.6"/><path d="M418.35 246.59 L421.40 248.76 L423.63 246.72 L420.60 244.57 Z" fill="rgb(255,255,15)" stroke="rgb(255,255,15)" stroke-width="0.6"/><path d="M420.60 244.57 L423.63 246.72 L425.97 245.01 L422.98 242.88 Z" fill="rgb(255,255,9)" stroke="rgb(255,255,9)" stroke-width="0.6"/><path d="M413.20 264.59 L416.40 266.80 L416.95 264.05 L413.77 261.84 Z" fill="rgb(255,255,6)" stroke="rgb(255,255,6)" stroke-width="0.6"/><path d="M413.77 261.84 L416.95 264.05 L417.87 261.25 L414.69 259.05 Z" fill="rgb(255,255,12)" stroke="rgb(255,255,12)" stroke-width="0.6"/><path d="M414.69 259.05 L417.87 261.25 L419.11 258.46 L415.95 256.28 Z" fill="rgb(255,255,19)" stroke="rgb(255,255,19)" stroke-width="0.6"/><path d="M415.95 256.28 L419.11 258.46 L420.66 255.77 L417.51 253.59 Z" fill="rgb(255,255,24)" stroke="rgb(255,255,24)" stroke-width="0.6"/><path d="M417.51 253.59 L420.66 255.77 L422.47 253.23 L419.35 251.07 Z" fill="rgb(255,255,26)" stroke="rgb(255,255,26)" stroke-width="0.6"/><path d="M419.35 251.07 L422.47 253.23 L424.50 250.90 L421.40 248.76 Z" fill="rgb(255,255,23)" stroke="rgb(255,255,23)" stroke-width="0.6"/><path d="M421.40 248.76 L424.50 250.90 L426.70 248.85 L423.63 246.72 Z" fill="rgb(255,255,16)" stroke="rgb(255,255,16)" stroke-width="0.6"/><path d="M423.63 246.72 L426.70 248.85 L429.02 247.12 L425.97 245.01 Z" fill="rgb(255,255,9)" stroke="rgb(255,255,9)" stroke-width="0.6"/><path d="M416.40 266.80 L419.64 268.98 L420.19 266.23 L416.95 264.05 Z" fill="rgb(255,255,6)" stroke="rgb(255,255,6)" stroke-width="0.6"/><path d="M416.95 264.05 L420.19 266.23 L421.10 263.42 L417.87 261.25 Z" fill="rgb(255,255,13)" stroke="rgb(255,255,13)" stroke-width="0.6"/><path d="M417.87 261.25 L421.10 263.42 L422.33 260.63 L419.11 258.46 Z" fill="rgb(255,255,20)" stroke="rgb(255,255,20)" stroke-width="0.6"/><path d="M419.11 258.46 L422.33 260.63 L423.86 257.92 L420.66 255.77 Z" fill="rgb(255,255,26)" stroke="rgb(255,255,26)" stroke-width="0.6"/><path d="M420.66 255.77 L423.86 257.92 L425.65 255.36 L422.47 253.23 Z" fill="rgb(255,255,27)" stroke="rgb(255,255,27)" stroke-width="0.6"/><path d="M422.47 253.23 L425.65 255.36 L427.65 253.02 L424.50 250.90 Z" fill="rgb(255,255,24)" stroke="rgb(255,255,24)" stroke-width="0.6"/><path d="M424.50 250.90 L427.65 253.02 L429.83 250.95 L426.70 248.85 Z" fill="rgb(255,255,17)" stroke="rgb(255,255,17)" stroke-width="0.6"/><path d="M426.70 248.85 L429.83 250.95 L432.12 249.20 L429.02 247.12 Z" fill="rgb(255,255,9)" stroke="rgb(255,255,9)" stroke-width="0.6"/><path d="M419.64 268.98 L422.94 271.14 L423.49 268.38 L420.19 266.23 Z" fill="rgb(255,255,7)" stroke="rgb(255,255,7)" stroke-width="0.6"/><path d="M420.19 266.23 L423.49 268.38 L424.38 265.56 L421.10 263.42 Z" fill="rgb(255,255,14)" stroke="rgb(255,255,14)" stroke-width="0.6"/><path d="M421.10 263.42 L424.38 265.56 L425.59 262.76 L422.33 260.63 Z" fill="rgb(255,255,22)" stroke="rgb(255,255,22)" stroke-width="0.6"/><path d="M422.33 260.63 L425.59 262.76 L427.10 260.04 L423.86 257.92 Z" fill="rgb(255,255,28)" stroke="rgb(255,255,28)" stroke-width="0.6"/><path d="M423.86 257.92 L427.10 260.04 L428.87 257.47 L425.65 255.36 Z" fill="rgb(255,255,29)" stroke="rgb(255,255,29)" stroke-width="0.6"/><path d="M425.65 255.36 L428.87 257.47 L430.86 255.11 L427.65 253.02 Z" fill="rgb(255,255,25)" stroke="rgb(255,255,25)" stroke-width="0.6"/><path d="M427.65 253.02 L430.86 255.11 L433.01 253.03 L429.83 250.95 Z" fill="rgb(255,255,17)" stroke="rgb(255,255,17)" stroke-width="0.6"/><path d="M429.83 250.95 L433.01 253.03 L435.27 251.26 L432.12 249.20 Z" fill="rgb(255,255,10)" stroke="rgb(255,255,10)" stroke-width="0.6"/><path d="M422.94 271.14 L426.29 273.27 L426.83 270.51 L423.49 268.38 Z" fill="rgb(255,255,8)" stroke="rgb(255,255,8)" stroke-width="0.6"/><path d="M423.49 268.38 L426.83 270.51 L427.71 267.68 L424.38 265.56 Z" fill="rgb(255,255,15)" stroke="rgb(255,255,15)" stroke-width="0.6"/><path d="M424.38 265.56 L427.71 267.68 L428.91 264.87 L425.59 262.76 Z" fill="rgb(255,255,24)" stroke="rgb(255,255,24)" stroke-width="0.6"/><path d="M425.59 262.76 L428.91 264.87 L430.40 262.14 L427.10 260.04 Z" fill="rgb(255,255,30)" stroke="rgb(255,255,30)" stroke-width="0.6"/><path d="M427.10 260.04 L430.40 262.14 L432.15 259.56 L428.87 257.47 Z" fill="rgb(255,255,31)" stroke="rgb(255,255,31)" stroke-width="0.6"/><path d="M428.87 257.47 L432.15 259.56 L434.11 257.18 L430.86 255.11 Z" fill="rgb(255,255,26)" stroke="rgb(255,255,26)" stroke-width="0.6"/><path d="M430.86 255.11 L434.11 257.18 L436.23 255.08 L433.01 253.03 Z" fill="rgb(255,255,18)" stroke="rgb(255,255,18)" stroke-width="0.6"/><path d="M433.01 253.03 L436.23 255.08 L438.46 253.30 L435.27 251.26 Z" fill="rgb(255,255,10)" stroke="rgb(255,255,10)" stroke-width="0.6"/><path d="M426.29 273.27 L429.69 275.37 L430.22 272.61 L426.83 270.51 Z" fill="rgb(255,255,8)" stroke="rgb(255,255,8)" stroke-width="0.6"/><path d="M426.83 270.51 L430.22 272.61 L431.09 269.78 L427.71 267.68 Z" fill="rgb(255,255,16)" stroke="rgb(255,255,16)" stroke-width="0.6"/><path d="M427.71 267.68 L431.09 269.78 L432.28 266.95 L428.91 264.87 Z" fill="rgb(255,255,25)" stroke="rgb(255,255,25)" stroke-width="0.6"/><path d="M428.91 264.87 L432.28 266.95 L433.75 264.21 L430.40 262.14 Z" fill="rgb(255,255,32)" stroke="rgb(255,255,32)" stroke-width="0.6"/><path d="M430.40 262.14 L433.75 264.21 L435.47 261.61 L432.15 259.56 Z" fill="rgb(255,255,32)" stroke="rgb(255,255,32)" stroke-width="0.6"/><path d="M432.15 259.56 L435.47 261.61 L437.41 259.22 L434.11 257.18 Z" fill="rgb(255,255,27)" stroke="rgb(255,255,27)" stroke-width="0.6"/><path d="M434.11 257.18 L437.41 259.22 L439.50 257.10 L436.23 255.08 Z" fill="rgb(255,255,18)" stroke="rgb(255,255,18)" stroke-width="0.6"/><path d="M436.23 255.08 L439.50 257.10 L441.71 255.30 L438.46 253.30 Z" fill="rgb(255,255,10)" stroke="rgb(255,255,10)" stroke-width="0.6"/><path d="M429.69 275.37 L433.14 277.45 L433.67 274.68 L430.22 272.61 Z" fill="rgb(255,255,9)" stroke="rgb(255,255,9)" stroke-width="0.6"/><path d="M430.22 272.61 L433.67 274.68 L434.52 271.84 L431.09 269.78 Z" fill="rgb(255,255,18)" stroke="rgb(255,255,18)" stroke-width="0.6"/><path d="M431.09 269.78 L434.52 271.84 L435.69 269.01 L432.28 266.95 Z" fill="rgb(255,255,27)" stroke="rgb(255,255,27)" stroke-width="0.6"/><path d="M432.28 266.95 L435.69 269.01 L437.15 266.26 L433.75 264.21 Z" fill="rgb(255,255,34)" stroke="rgb(255,255,34)" stroke-width="0.6"/><path d="M433.75 264.21 L437.15 266.26 L438.85 263.64 L435.47 261.61 Z" fill="rgb(255,255,34)" stroke="rgb(255,255,34)" stroke-width="0.6"/><path d="M435.47 261.61 L438.85 263.64 L440.76 261.24 L437.41 259.22 Z" fill="rgb(255,255,28)" stroke="rgb(255,255,28)" stroke-width="0.6"/><path d="M437.41 259.22 L440.76 261.24 L442.83 259.10 L439.50 257.10 Z" fill="rgb(255,255,19)" stroke="rgb(255,255,19)" stroke-width="0.6"/><path d="M439.50 257.10 L442.83 259.10 L445.00 257.28 L441.71 255.30 Z" fill="rgb(255,255,10)" stroke="rgb(255,255,10)" stroke-width="0.6"/><path d="M433.14 277.45 L436.64 279.50 L437.16 276.72 L433.67 274.68 Z" fill="rgb(255,255,10)" stroke="rgb(255,255,10)" stroke-width="0.6"/><path d="M433.67 274.68 L437.16 276.72 L438.01 273.88 L434.52 271.84 Z" fill="rgb(255,255,19)" stroke="rgb(255,255,19)" stroke-width="0.6"/><path d="M434.52 271.84 L438.01 273.88 L439.16 271.04 L435.69 269.01 Z" fill="rgb(255,255,29)" stroke="rgb(255,255,29)" stroke-width="0.6"/><path d="M435.69 269.01 L439.16 271.04 L440.59 268.27 L437.15 266.26 Z" fill="rgb(255,255,36)" stroke="rgb(255,255,36)" stroke-width="0.6"/><path d="M437.15 266.26 L440.59 268.27 L442.27 265.65 L438.85 263.64 Z" fill="rgb(255,255,36)" stroke="rgb(255,255,36)" stroke-width="0.6"/><path d="M438.85 263.64 L442.27 265.65 L444.15 263.23 L440.76 261.24 Z" fill="rgb(255,255,30)" stroke="rgb(255,255,30)" stroke-width="0.6"/><path d="M440.76 261.24 L444.15 263.23 L446.19 261.07 L442.83 259.10 Z" fill="rgb(255,255,20)" stroke="rgb(255,255,20)" stroke-width="0.6"/><path d="M442.83 259.10 L446.19 261.07 L448.34 259.24 L445.00 257.28 Z" fill="rgb(255,255,10)" stroke="rgb(255,255,10)" stroke-width="0.6"/><path d="M436.64 279.50 L440.19 281.52 L440.70 278.74 L437.16 276.72 Z" fill="rgb(255,255,11)" stroke="rgb(255,255,11)" stroke-width="0.6"/><path d="M437.16 276.72 L440.70 278.74 L441.53 275.89 L438.01 273.88 Z" fill="rgb(255,255,21)" stroke="rgb(255,255,21)" stroke-width="0.6"/><path d="M438.01 273.88 L441.53 275.89 L442.67 273.04 L439.16 271.04 Z" fill="rgb(255,255,31)" stroke="rgb(255,255,31)" stroke-width="0.6"/><path d="M439.16 271.04 L442.67 273.04 L444.09 270.26 L440.59 268.27 Z" fill="rgb(255,255,38)" stroke="rgb(255,255,38)" stroke-width="0.6"/><path d="M440.59 268.27 L444.09 270.26 L445.74 267.62 L442.27 265.65 Z" fill="rgb(255,255,38)" stroke="rgb(255,255,38)" stroke-width="0.6"/><path d="M442.27 265.65 L445.74 267.62 L447.60 265.19 L444.15 263.23 Z" fill="rgb(255,255,31)" stroke="rgb(255,255,31)" stroke-width="0.6"/><path d="M444.15 263.23 L447.60 265.19 L449.61 263.02 L446.19 261.07 Z" fill="rgb(255,255,20)" stroke="rgb(255,255,20)" stroke-width="0.6"/><path d="M446.19 261.07 L449.61 263.02 L451.73 261.17 L448.34 259.24 Z" fill="rgb(255,255,11)" stroke="rgb(255,255,11)" stroke-width="0.6"/><path d="M440.02 284.16 L443.62 286.16 L443.79 283.51 L440.19 281.52 Z" fill="rgb(255,255,5)" stroke="rgb(255,255,5)" stroke-width="0.6"/><path d="M440.19 281.52 L443.79 283.51 L444.29 280.73 L440.70 278.74 Z" fill="rgb(255,255,12)" stroke="rgb(255,255,12)" stroke-width="0.6"/><path d="M440.70 278.74 L444.29 280.73 L445.11 277.87 L441.53 275.89 Z" fill="rgb(255,255,22)" stroke="rgb(255,255,22)" stroke-width="0.6"/><path d="M441.53 275.89 L445.11 277.87 L446.23 275.01 L442.67 273.04 Z" fill="rgb(255,255,33)" stroke="rgb(255,255,33)" stroke-width="0.6"/><path d="M442.67 273.04 L446.23 275.01 L447.63 272.22 L444.09 270.26 Z" fill="rgb(255,255,40)" stroke="rgb(255,255,40)" stroke-width="0.6"/><path d="M444.09 270.26 L447.63 272.22 L449.26 269.57 L445.74 267.62 Z" fill="rgb(255,255,40)" stroke="rgb(255,255,40)" stroke-width="0.6"/><path d="M445.74 267.62 L449.26 269.57 L451.09 267.12 L447.60 265.19 Z" fill="rgb(255,255,32)" stroke="rgb(255,255,32)" stroke-width="0.6"/><path d="M447.60 265.19 L451.09 267.12 L453.07 264.94 L449.61 263.02 Z" fill="rgb(255,255,21)" stroke="rgb(255,255,21)" stroke-width="0.6"/><path d="M449.61 263.02 L453.07 264.94 L455.16 263.07 L451.73 261.17 Z" fill="rgb(255,255,11)" stroke="rgb(255,255,11)" stroke-width="0.6"/><path d="M443.62 286.16 L447.27 288.12 L447.43 285.48 L443.79 283.51 Z" fill="rgb(255,255,5)" stroke="rgb(255,255,5)" stroke-width="0.6"/><path d="M443.79 283.51 L447.43 285.48 L447.93 282.69 L444.29 280.73 Z" fill="rgb(255,255,13)" stroke="rgb(255,255,13)" stroke-width="0.6"/><path d="M444.29 280.73 L447.93 282.69 L448.74 279.82 L445.11 277.87 Z" fill="rgb(255,255,24)" stroke="rgb(255,255,24)" stroke-width="0.6"/><path d="M445.11 277.87 L448.74 279.82 L449.84 276.96 L446.23 275.01 Z" fill="rgb(255,255,36)" stroke="rgb(255,255,36)" stroke-width="0.6"/><path d="M446.23 275.01 L449.84 276.96 L451.22 274.16 L447.63 272.22 Z" fill="rgb(255,255,43)" stroke="rgb(255,255,43)" stroke-width="0.6"/><path d="M447.63 272.22 L451.22 274.16 L452.82 271.49 L449.26 269.57 Z" fill="rgb(255,255,42)" stroke="rgb(255,255,42)" stroke-width="0.6"/><path d="M449.26 269.57 L452.82 271.49 L454.63 269.03 L451.09 267.12 Z" fill="rgb(255,255,33)" stroke="rgb(255,255,33)" stroke-width="0.6"/><path d="M451.09 267.12 L454.63 269.03 L456.58 266.83 L453.07 264.94 Z" fill="rgb(255,255,22)" stroke="rgb(255,255,22)" stroke-width="0.6"/><path d="M453.07 264.94 L456.58 266.83 L458.64 264.94 L455.16 263.07 Z" fill="rgb(255,255,11)" stroke="rgb(255,255,11)" stroke-width="0.6"/><path d="M447.27 288.12 L450.96 290.06 L451.12 287.41 L447.43 285.48 Z" fill="rgb(255,255,6)" stroke="rgb(255,255,6)" stroke-width="0.6"/><path d="M447.43 285.48 L451.12 287.41 L451.61 284.62 L447.93 282.69 Z" fill="rgb(255,255,14)" stroke="rgb(255,255,14)" stroke-width="0.6"/><path d="M447.93 282.69 L451.61 284.62 L452.41 281.75 L448.74 279.82 Z" fill="rgb(255,255,26)" stroke="rgb(255,255,26)" stroke-width="0.6"/><path d="M448.74 279.82 L452.41 281.75 L453.50 278.87 L449.84 276.96 Z" fill="rgb(255,255,38)" stroke="rgb(255,255,38)" stroke-width="0.6"/><path d="M449.84 276.96 L453.50 278.87 L454.85 276.06 L451.22 274.16 Z" fill="rgb(255,255,45)" stroke="rgb(255,255,45)" stroke-width="0.6"/><path d="M451.22 274.16 L454.85 276.06 L456.43 273.38 L452.82 271.49 Z" fill="rgb(255,255,44)" stroke="rgb(255,255,44)" stroke-width="0.6"/><path d="M452.82 271.49 L456.43 273.38 L458.21 270.91 L454.63 269.03 Z" fill="rgb(255,255,35)" stroke="rgb(255,255,35)" stroke-width="0.6"/><path d="M454.63 269.03 L458.21 270.91 L460.13 268.69 L456.58 266.83 Z" fill="rgb(255,255,22)" stroke="rgb(255,255,22)" stroke-width="0.6"/><path d="M456.58 266.83 L460.13 268.69 L462.16 266.79 L458.64 264.94 Z" fill="rgb(255,255,11)" stroke="rgb(255,255,11)" stroke-width="0.6"/><path d="M450.96 290.06 L454.70 291.96 L454.86 289.31 L451.12 287.41 Z" fill="rgb(255,255,7)" stroke="rgb(255,255,7)" stroke-width="0.6"/><path d="M451.12 287.41 L454.86 289.31 L455.34 286.52 L451.61 284.62 Z" fill="rgb(255,255,15)" stroke="rgb(255,255,15)" stroke-width="0.6"/><path d="M451.61 284.62 L455.34 286.52 L456.12 283.64 L452.41 281.75 Z" fill="rgb(255,255,28)" stroke="rgb(255,255,28)" stroke-width="0.6"/><path d="M452.41 281.75 L456.12 283.64 L457.20 280.76 L453.50 278.87 Z" fill="rgb(255,255,40)" stroke="rgb(255,255,40)" stroke-width="0.6"/><path d="M453.50 278.87 L457.20 280.76 L458.53 277.94 L454.85 276.06 Z" fill="rgb(255,255,48)" stroke="rgb(255,255,48)" stroke-width="0.6"/><path d="M454.85 276.06 L458.53 277.94 L460.09 275.25 L456.43 273.38 Z" fill="rgb(255,255,46)" stroke="rgb(255,255,46)" stroke-width="0.6"/><path d="M456.43 273.38 L460.09 275.25 L461.83 272.75 L458.21 270.91 Z" fill="rgb(255,255,36)" stroke="rgb(255,255,36)" stroke-width="0.6"/><path d="M458.21 270.91 L461.83 272.75 L463.73 270.52 L460.13 268.69 Z" fill="rgb(255,255,23)" stroke="rgb(255,255,23)" stroke-width="0.6"/><path d="M460.13 268.69 L463.73 270.52 L465.72 268.61 L462.16 266.79 Z" fill="rgb(255,255,12)" stroke="rgb(255,255,12)" stroke-width="0.6"/><path d="M454.70 291.96 L458.48 293.84 L458.64 291.19 L454.86 289.31 Z" fill="rgb(255,255,7)" stroke="rgb(255,255,7)" stroke-width="0.6"/><path d="M454.86 289.31 L458.64 291.19 L459.11 288.39 L455.34 286.52 Z" fill="rgb(255,255,17)" stroke="rgb(255,255,17)" stroke-width="0.6"/><path d="M455.34 286.52 L459.11 288.39 L459.89 285.51 L456.12 283.64 Z" fill="rgb(255,255,30)" stroke="rgb(255,255,30)" stroke-width="0.6"/><path d="M456.12 283.64 L459.89 285.51 L460.94 282.61 L457.20 280.76 Z" fill="rgb(255,255,43)" stroke="rgb(255,255,43)" stroke-width="0.6"/><path d="M457.20 280.76 L460.94 282.61 L462.25 279.78 L458.53 277.94 Z" fill="rgb(255,255,50)" stroke="rgb(255,255,50)" stroke-width="0.6"/><path d="M458.53 277.94 L462.25 279.78 L463.78 277.08 L460.09 275.25 Z" fill="rgb(255,255,48)" stroke="rgb(255,255,48)" stroke-width="0.6"/><path d="M460.09 275.25 L463.78 277.08 L465.51 274.57 L461.83 272.75 Z" fill="rgb(255,255,38)" stroke="rgb(255,255,38)" stroke-width="0.6"/><path d="M461.83 272.75 L465.51 274.57 L467.37 272.33 L463.73 270.52 Z" fill="rgb(255,255,24)" stroke="rgb(255,255,24)" stroke-width="0.6"/><path d="M463.73 270.52 L467.37 272.33 L469.33 270.39 L465.72 268.61 Z" fill="rgb(255,255,12)" stroke="rgb(255,255,12)" stroke-width="0.6"/><path d="M458.48 293.84 L462.31 295.68 L462.47 293.03 L458.64 291.19 Z" fill="rgb(255,255,8)" stroke="rgb(255,255,8)" stroke-width="0.6"/><path d="M458.64 291.19 L462.47 293.03 L462.93 290.23 L459.11 288.39 Z" fill="rgb(255,255,18)" stroke="rgb(255,255,18)" stroke-width="0.6"/><path d="M459.11 288.39 L462.93 290.23 L463.69 287.34 L459.89 285.51 Z" fill="rgb(255,255,32)" stroke="rgb(255,255,32)" stroke-width="0.6"/><path d="M459.89 285.51 L463.69 287.34 L464.73 284.44 L460.94 282.61 Z" fill="rgb(255,255,46)" stroke="rgb(255,255,46)" stroke-width="0.6"/><path d="M460.94 282.61 L464.73 284.44 L466.02 281.60 L462.25 279.78 Z" fill="rgb(255,255,53)" stroke="rgb(255,255,53)" stroke-width="0.6"/><path d="M462.25 279.78 L466.02 281.60 L467.53 278.88 L463.78 277.08 Z" fill="rgb(255,255,50)" stroke="rgb(255,255,50)" stroke-width="0.6"/><path d="M463.78 277.08 L467.53 278.88 L469.22 276.36 L465.51 274.57 Z" fill="rgb(255,255,39)" stroke="rgb(255,255,39)" stroke-width="0.6"/><path d="M465.51 274.57 L469.22 276.36 L471.05 274.10 L467.37 272.33 Z" fill="rgb(255,255,24)" stroke="rgb(255,255,24)" stroke-width="0.6"/><path d="M467.37 272.33 L471.05 274.10 L472.98 272.15 L469.33 270.39 Z" fill="rgb(255,255,12)" stroke="rgb(255,255,12)" stroke-width="0.6"/><path d="M462.31 295.68 L466.18 297.50 L466.34 294.85 L462.47 293.03 Z" fill="rgb(255,255,8)" stroke="rgb(255,255,8)" stroke-width="0.6"/><path d="M462.47 293.03 L466.34 294.85 L466.79 292.04 L462.93 290.23 Z" fill="rgb(255,255,19)" stroke="rgb(255,255,19)" stroke-width="0.6"/><path d="M462.93 290.23 L466.79 292.04 L467.54 289.15 L463.69 287.34 Z" fill="rgb(255,255,34)" stroke="rgb(255,255,34)" stroke-width="0.6"/><path d="M463.69 287.34 L467.54 289.15 L468.56 286.24 L464.73 284.44 Z" fill="rgb(255,255,48)" stroke="rgb(255,255,48)" stroke-width="0.6"/><path d="M464.73 284.44 L468.56 286.24 L469.83 283.38 L466.02 281.60 Z" fill="rgb(255,255,56)" stroke="rgb(255,255,56)" stroke-width="0.6"/><path d="M466.02 281.60 L469.83 283.38 L471.31 280.66 L467.53 278.88 Z" fill="rgb(255,255,52)" stroke="rgb(255,255,52)" stroke-width="0.6"/><path d="M467.53 278.88 L471.31 280.66 L472.97 278.12 L469.22 276.36 Z" fill="rgb(255,255,40)" stroke="rgb(255,255,40)" stroke-width="0.6"/><path d="M469.22 276.36 L472.97 278.12 L474.78 275.85 L471.05 274.10 Z" fill="rgb(255,255,25)" stroke="rgb(255,255,25)" stroke-width="0.6"/><path d="M471.05 274.10 L474.78 275.85 L476.67 273.89 L472.98 272.15 Z" fill="rgb(255,255,12)" stroke="rgb(255,255,12)" stroke-width="0.6"/><path d="M466.18 297.50 L470.10 299.28 L470.25 296.63 L466.34 294.85 Z" fill="rgb(255,255,9)" stroke="rgb(255,255,9)" stroke-width="0.6"/><path d="M466.34 294.85 L470.25 296.63 L470.70 293.82 L466.79 292.04 Z" fill="rgb(255,255,21)" stroke="rgb(255,255,21)" stroke-width="0.6"/><path d="M466.79 292.04 L470.70 293.82 L471.43 290.92 L467.54 289.15 Z" fill="rgb(255,255,37)" stroke="rgb(255,255,37)" stroke-width="0.6"/><path d="M467.54 289.15 L471.43 290.92 L472.43 288.00 L468.56 286.24 Z" fill="rgb(255,255,51)" stroke="rgb(255,255,51)" stroke-width="0.6"/><path d="M468.56 286.24 L472.43 288.00 L473.68 285.14 L469.83 283.38 Z" fill="rgb(255,255,58)" stroke="rgb(255,255,58)" stroke-width="0.6"/><path d="M469.83 283.38 L473.68 285.14 L475.14 282.40 L471.31 280.66 Z" fill="rgb(255,255,55)" stroke="rgb(255,255,55)" stroke-width="0.6"/><path d="M471.31 280.66 L475.14 282.40 L476.77 279.86 L472.97 278.12 Z" fill="rgb(255,255,42)" stroke="rgb(255,255,42)" stroke-width="0.6"/><path d="M472.97 278.12 L476.77 279.86 L478.54 277.57 L474.78 275.85 Z" fill="rgb(255,255,26)" stroke="rgb(255,255,26)" stroke-width="0.6"/><path d="M474.78 275.85 L478.54 277.57 L480.41 275.59 L476.67 273.89 Z" fill="rgb(255,255,12)" stroke="rgb(255,255,12)" stroke-width="0.6"/><path d="M476.67 273.89 L480.41 275.59 L482.32 273.97 L478.62 272.28 Z" fill="rgb(255,255,5)" stroke="rgb(255,255,5)" stroke-width="0.6"/><path d="M470.10 299.28 L474.06 301.04 L474.20 298.38 L470.25 296.63 Z" fill="rgb(255,255,10)" stroke="rgb(255,255,10)" stroke-width="0.6"/><path d="M470.25 296.63 L474.20 298.38 L474.64 295.57 L470.70 293.82 Z" fill="rgb(255,255,22)" stroke="rgb(255,255,22)" stroke-width="0.6"/><path d="M470.70 293.82 L474.64 295.57 L475.36 292.66 L471.43 290.92 Z" fill="rgb(255,255,39)" stroke="rgb(255,255,39)" stroke-width="0.6"/><path d="M471.43 290.92 L475.36 292.66 L476.35 289.74 L472.43 288.00 Z" fill="rgb(255,255,54)" stroke="rgb(255,255,54)" stroke-width="0.6"/><path d="M472.43 288.00 L476.35 289.74 L477.57 286.86 L473.68 285.14 Z" fill="rgb(255,255,61)" stroke="rgb(255,255,61)" stroke-width="0.6"/><path d="M473.68 285.14 L477.57 286.86 L479.00 284.11 L475.14 282.40 Z" fill="rgb(255,255,57)" stroke="rgb(255,255,57)" stroke-width="0.6"/><path d="M475.14 282.40 L479.00 284.11 L480.61 281.56 L476.77 279.86 Z" fill="rgb(255,255,43)" stroke="rgb(255,255,43)" stroke-width="0.6"/><path d="M476.77 279.86 L480.61 281.56 L482.35 279.25 L478.54 277.57 Z" fill="rgb(255,255,27)" stroke="rgb(255,255,27)" stroke-width="0.6"/><path d="M478.54 277.57 L482.35 279.25 L484.18 277.26 L480.41 275.59 Z" fill="rgb(255,255,13)" stroke="rgb(255,255,13)" stroke-width="0.6"/><path d="M480.41 275.59 L484.18 277.26 L486.06 275.62 L482.32 273.97 Z" fill="rgb(255,255,5)" stroke="rgb(255,255,5)" stroke-width="0.6"/><path d="M474.06 301.04 L478.06 302.76 L478.20 300.10 L474.20 298.38 Z" fill="rgb(255,255,11)" stroke="rgb(255,255,11)" stroke-width="0.6"/><path d="M474.20 298.38 L478.20 300.10 L478.63 297.28 L474.64 295.57 Z" fill="rgb(255,255,24)" stroke="rgb(255,255,24)" stroke-width="0.6"/><path d="M474.64 295.57 L478.63 297.28 L479.34 294.37 L475.36 292.66 Z" fill="rgb(255,255,41)" stroke="rgb(255,255,41)" stroke-width="0.6"/><path d="M475.36 292.66 L479.34 294.37 L480.31 291.44 L476.35 289.74 Z" fill="rgb(255,255,57)" stroke="rgb(255,255,57)" stroke-width="0.6"/><path d="M476.35 289.74 L480.31 291.44 L481.51 288.56 L477.57 286.86 Z" fill="rgb(255,255,64)" stroke="rgb(255,255,64)" stroke-width="0.6"/><path d="M477.57 286.86 L481.51 288.56 L482.91 285.80 L479.00 284.11 Z" fill="rgb(255,255,59)" stroke="rgb(255,255,59)" stroke-width="0.6"/><path d="M479.00 284.11 L482.91 285.80 L484.49 283.22 L480.61 281.56 Z" fill="rgb(255,255,45)" stroke="rgb(255,255,45)" stroke-width="0.6"/><path d="M480.61 281.56 L484.49 283.22 L486.20 280.91 L482.35 279.25 Z" fill="rgb(255,255,27)" stroke="rgb(255,255,27)" stroke-width="0.6"/><path d="M482.35 279.25 L486.20 280.91 L487.99 278.90 L484.18 277.26 Z" fill="rgb(255,255,13)" stroke="rgb(255,255,13)" stroke-width="0.6"/><path d="M484.18 277.26 L487.99 278.90 L489.84 277.25 L486.06 275.62 Z" fill="rgb(255,255,5)" stroke="rgb(255,255,5)" stroke-width="0.6"/><path d="M478.06 302.76 L482.10 304.45 L482.24 301.79 L478.20 300.10 Z" fill="rgb(255,255,12)" stroke="rgb(255,255,12)" stroke-width="0.6"/><path d="M478.20 300.10 L482.24 301.79 L482.66 298.97 L478.63 297.28 Z" fill="rgb(255,255,26)" stroke="rgb(255,255,26)" stroke-width="0.6"/><path d="M478.63 297.28 L482.66 298.97 L483.36 296.05 L479.34 294.37 Z" fill="rgb(255,255,44)" stroke="rgb(255,255,44)" stroke-width="0.6"/><path d="M479.34 294.37 L483.36 296.05 L484.30 293.11 L480.31 291.44 Z" fill="rgb(255,255,60)" stroke="rgb(255,255,60)" stroke-width="0.6"/><path d="M480.31 291.44 L484.30 293.11 L485.48 290.22 L481.51 288.56 Z" fill="rgb(255,255,67)" stroke="rgb(255,255,67)" stroke-width="0.6"/><path d="M481.51 288.56 L485.48 290.22 L486.86 287.45 L482.91 285.80 Z" fill="rgb(255,255,62)" stroke="rgb(255,255,62)" stroke-width="0.6"/><path d="M482.91 285.80 L486.86 287.45 L488.41 284.86 L484.49 283.22 Z" fill="rgb(255,255,46)" stroke="rgb(255,255,46)" stroke-width="0.6"/><path d="M484.49 283.22 L488.41 284.86 L490.08 282.53 L486.20 280.91 Z" fill="rgb(255,255,28)" stroke="rgb(255,255,28)" stroke-width="0.6"/><path d="M486.20 280.91 L490.08 282.53 L491.85 280.51 L487.99 278.90 Z" fill="rgb(255,255,13)" stroke="rgb(255,255,13)" stroke-width="0.6"/><path d="M487.99 278.90 L491.85 280.51 L493.66 278.85 L489.84 277.25 Z" fill="rgb(255,255,5)" stroke="rgb(255,255,5)" stroke-width="0.6"/><path d="M482.10 304.45 L486.18 306.10 L486.31 303.44 L482.24 301.79 Z" fill="rgb(255,255,13)" stroke="rgb(255,255,13)" stroke-width="0.6"/><path d="M482.24 301.79 L486.31 303.44 L486.73 300.62 L482.66 298.97 Z" fill="rgb(255,255,27)" stroke="rgb(255,255,27)" stroke-width="0.6"/><path d="M482.66 298.97 L486.73 300.62 L487.41 297.70 L483.36 296.05 Z" fill="rgb(255,255,46)" stroke="rgb(255,255,46)" stroke-width="0.6"/><path d="M483.36 296.05 L487.41 297.70 L488.34 294.75 L484.30 293.11 Z" fill="rgb(255,255,63)" stroke="rgb(255,255,63)" stroke-width="0.6"/><path d="M484.30 293.11 L488.34 294.75 L489.50 291.85 L485.48 290.22 Z" fill="rgb(255,255,71)" stroke="rgb(255,255,71)" stroke-width="0.6"/><path d="M485.48 290.22 L489.50 291.85 L490.85 289.07 L486.86 287.45 Z" fill="rgb(255,255,64)" stroke="rgb(255,255,64)" stroke-width="0.6"/><path d="M486.86 287.45 L490.85 289.07 L492.36 286.47 L488.41 284.86 Z" fill="rgb(255,255,48)" stroke="rgb(255,255,48)" stroke-width="0.6"/><path d="M488.41 284.86 L492.36 286.47 L494.01 284.12 L490.08 282.53 Z" fill="rgb(255,255,29)" stroke="rgb(255,255,29)" stroke-width="0.6"/><path d="M490.08 282.53 L494.01 284.12 L495.74 282.09 L491.85 280.51 Z" fill="rgb(255,255,13)" stroke="rgb(255,255,13)" stroke-width="0.6"/><path d="M491.85 280.51 L495.74 282.09 L497.51 280.41 L493.66 278.85 Z" fill="rgb(255,255,5)" stroke="rgb(255,255,5)" stroke-width="0.6"/><path d="M486.18 306.10 L490.29 307.73 L490.43 305.07 L486.31 303.44 Z" fill="rgb(255,255,13)" stroke="rgb(255,255,13)" stroke-width="0.6"/><path d="M486.31 303.44 L490.43 305.07 L490.84 302.24 L486.73 300.62 Z" fill="rgb(255,255,29)" stroke="rgb(255,255,29)" stroke-width="0.6"/><path d="M486.73 300.62 L490.84 302.24 L491.50 299.31 L487.41 297.70 Z" fill="rgb(255,255,49)" stroke="rgb(255,255,49)" stroke-width="0.6"/><path d="M487.41 297.70 L491.50 299.31 L492.42 296.36 L488.34 294.75 Z" fill="rgb(255,255,67)" stroke="rgb(255,255,67)" stroke-width="0.6"/><path d="M488.34 294.75 L492.42 296.36 L493.55 293.45 L489.50 291.85 Z" fill="rgb(255,255,74)" stroke="rgb(255,255,74)" stroke-width="0.6"/><path d="M489.50 291.85 L493.55 293.45 L494.87 290.65 L490.85 289.07 Z" fill="rgb(255,255,67)" stroke="rgb(255,255,67)" stroke-width="0.6"/><path d="M490.85 289.07 L494.87 290.65 L496.36 288.04 L492.36 286.47 Z" fill="rgb(255,255,50)" stroke="rgb(255,255,50)" stroke-width="0.6"/><path d="M492.36 286.47 L496.36 288.04 L497.97 285.69 L494.01 284.12 Z" fill="rgb(255,255,29)" stroke="rgb(255,255,29)" stroke-width="0.6"/><path d="M494.01 284.12 L497.97 285.69 L499.66 283.64 L495.74 282.09 Z" fill="rgb(255,255,14)" stroke="rgb(255,255,14)" stroke-width="0.6"/><path d="M495.74 282.09 L499.66 283.64 L501.40 281.95 L497.51 280.41 Z" fill="rgb(255,255,5)" stroke="rgb(255,255,5)" stroke-width="0.6"/><path d="M490.29 307.73 L494.45 309.32 L494.59 306.66 L490.43 305.07 Z" fill="rgb(255,255,14)" stroke="rgb(255,255,14)" stroke-width="0.6"/><path d="M490.43 305.07 L494.59 306.66 L494.98 303.83 L490.84 302.24 Z" fill="rgb(255,255,31)" stroke="rgb(255,255,31)" stroke-width="0.6"/><path d="M490.84 302.24 L494.98 303.83 L495.64 300.89 L491.50 299.31 Z" fill="rgb(255,255,52)" stroke="rgb(255,255,52)" stroke-width="0.6"/><path d="M491.50 299.31 L495.64 300.89 L496.53 297.93 L492.42 296.36 Z" fill="rgb(255,255,70)" stroke="rgb(255,255,70)" stroke-width="0.6"/><path d="M492.42 296.36 L496.53 297.93 L497.64 295.01 L493.55 293.45 Z" fill="rgb(255,255,77)" stroke="rgb(255,255,77)" stroke-width="0.6"/><path d="M493.55 293.45 L497.64 295.01 L498.94 292.21 L494.87 290.65 Z" fill="rgb(255,255,69)" stroke="rgb(255,255,69)" stroke-width="0.6"/><path d="M494.87 290.65 L498.94 292.21 L500.39 289.59 L496.36 288.04 Z" fill="rgb(255,255,51)" stroke="rgb(255,255,51)" stroke-width="0.6"/><path d="M496.36 288.04 L500.39 289.59 L501.97 287.22 L497.97 285.69 Z" fill="rgb(255,255,30)" stroke="rgb(255,255,30)" stroke-width="0.6"/><path d="M497.97 285.69 L501.97 287.22 L503.63 285.15 L499.66 283.64 Z" fill="rgb(255,255,14)" stroke="rgb(255,255,14)" stroke-width="0.6"/><path d="M499.66 283.64 L503.63 285.15 L505.33 283.45 L501.40 281.95 Z" fill="rgb(255,255,5)" stroke="rgb(255,255,5)" stroke-width="0.6"/><path d="M494.45 309.32 L498.65 310.88 L498.78 308.21 L494.59 306.66 Z" fill="rgb(255,255,15)" stroke="rgb(255,255,15)" stroke-width="0.6"/><path d="M494.59 306.66 L498.78 308.21 L499.17 305.38 L494.98 303.83 Z" fill="rgb(255,255,33)" stroke="rgb(255,255,33)" stroke-width="0.6"/><path d="M494.98 303.83 L499.17 305.38 L499.81 302.44 L495.64 300.89 Z" fill="rgb(255,255,55)" stroke="rgb(255,255,55)" stroke-width="0.6"/><path d="M495.64 300.89 L499.81 302.44 L500.68 299.47 L496.53 297.93 Z" fill="rgb(255,255,73)" stroke="rgb(255,255,73)" stroke-width="0.6"/><path d="M496.53 297.93 L500.68 299.47 L501.77 296.54 L497.64 295.01 Z" fill="rgb(255,255,80)" stroke="rgb(255,255,80)" stroke-width="0.6"/><path d="M497.64 295.01 L501.77 296.54 L503.04 293.73 L498.94 292.21 Z" fill="rgb(255,255,72)" stroke="rgb(255,255,72)" stroke-width="0.6"/><path d="M498.94 292.21 L503.04 293.73 L504.46 291.10 L500.39 289.59 Z" fill="rgb(255,255,53)" stroke="rgb(255,255,53)" stroke-width="0.6"/><path d="M500.39 289.59 L504.46 291.10 L506.00 288.72 L501.97 287.22 Z" fill="rgb(255,255,31)" stroke="rgb(255,255,31)" stroke-width="0.6"/><path d="M501.97 287.22 L506.00 288.72 L507.63 286.64 L503.63 285.15 Z" fill="rgb(255,255,14)" stroke="rgb(255,255,14)" stroke-width="0.6"/><path d="M503.63 285.15 L507.63 286.64 L509.30 284.92 L505.33 283.45 Z" fill="rgb(255,255,5)" stroke="rgb(255,255,5)" stroke-width="0.6"/><path d="M498.65 310.88 L502.88 312.40 L503.01 309.74 L498.78 308.21 Z" fill="rgb(255,255,16)" stroke="rgb(255,255,16)" stroke-width="0.6"/><path d="M498.78 308.21 L503.01 309.74 L503.39 306.90 L499.17 305.38 Z" fill="rgb(255,255,35)" stroke="rgb(255,255,35)" stroke-width="0.6"/><path d="M499.17 305.38 L503.39 306.90 L504.01 303.96 L499.81 302.44 Z" fill="rgb(255,255,58)" stroke="rgb(255,255,58)" stroke-width="0.6"/><path d="M499.81 302.44 L504.01 303.96 L504.87 300.98 L500.68 299.47 Z" fill="rgb(255,255,77)" stroke="rgb(255,255,77)" stroke-width="0.6"/><path d="M500.68 299.47 L504.87 300.98 L505.93 298.04 L501.77 296.54 Z" fill="rgb(255,255,84)" stroke="rgb(255,255,84)" stroke-width="0.6"/><path d="M501.77 296.54 L505.93 298.04 L507.17 295.22 L503.04 293.73 Z" fill="rgb(255,255,75)" stroke="rgb(255,255,75)" stroke-width="0.6"/><path d="M503.04 293.73 L507.17 295.22 L508.57 292.58 L504.46 291.10 Z" fill="rgb(255,255,54)" stroke="rgb(255,255,54)" stroke-width="0.6"/><path d="M504.46 291.10 L508.57 292.58 L510.08 290.18 L506.00 288.72 Z" fill="rgb(255,255,32)" stroke="rgb(255,255,32)" stroke-width="0.6"/><path d="M506.00 288.72 L510.08 290.18 L511.66 288.09 L507.63 286.64 Z" fill="rgb(255,255,14)" stroke="rgb(255,255,14)" stroke-width="0.6"/><path d="M507.63 286.64 L511.66 288.09 L513.29 286.36 L509.30 284.92 Z" fill="rgb(255,255,5)" stroke="rgb(255,255,5)" stroke-width="0.6"/><path d="M502.88 312.40 L507.15 313.89 L507.27 311.23 L503.01 309.74 Z" fill="rgb(255,255,18)" stroke="rgb(255,255,18)" stroke-width="0.6"/><path d="M503.01 309.74 L507.27 311.23 L507.64 308.39 L503.39 306.90 Z" fill="rgb(255,255,37)" stroke="rgb(255,255,37)" stroke-width="0.6"/><path d="M503.39 306.90 L507.64 308.39 L508.26 305.44 L504.01 303.96 Z" fill="rgb(255,255,61)" stroke="rgb(255,255,61)" stroke-width="0.6"/><path d="M504.01 303.96 L508.26 305.44 L509.09 302.45 L504.87 300.98 Z" fill="rgb(255,255,80)" stroke="rgb(255,255,80)" stroke-width="0.6"/><path d="M504.87 300.98 L509.09 302.45 L510.13 299.51 L505.93 298.04 Z" fill="rgb(255,255,87)" stroke="rgb(255,255,87)" stroke-width="0.6"/><path d="M505.93 298.04 L510.13 299.51 L511.34 296.68 L507.17 295.22 Z" fill="rgb(255,255,77)" stroke="rgb(255,255,77)" stroke-width="0.6"/><path d="M507.17 295.22 L511.34 296.68 L512.70 294.02 L508.57 292.58 Z" fill="rgb(255,255,56)" stroke="rgb(255,255,56)" stroke-width="0.6"/><path d="M508.57 292.58 L512.70 294.02 L514.18 291.62 L510.08 290.18 Z" fill="rgb(255,255,32)" stroke="rgb(255,255,32)" stroke-width="0.6"/><path d="M510.08 290.18 L514.18 291.62 L515.73 289.51 L511.66 288.09 Z" fill="rgb(255,255,15)" stroke="rgb(255,255,15)" stroke-width="0.6"/><path d="M511.66 288.09 L515.73 289.51 L517.33 287.77 L513.29 286.36 Z" fill="rgb(255,255,5)" stroke="rgb(255,255,5)" stroke-width="0.6"/><path d="M507.15 313.89 L511.45 315.35 L511.57 312.68 L507.27 311.23 Z" fill="rgb(255,255,19)" stroke="rgb(255,255,19)" stroke-width="0.6"/><path d="M507.27 311.23 L511.57 312.68 L511.94 309.84 L507.64 308.39 Z" fill="rgb(255,255,39)" stroke="rgb(255,255,39)" stroke-width="0.6"/><path d="M507.64 308.39 L511.94 309.84 L512.53 306.88 L508.26 305.44 Z" fill="rgb(255,255,64)" stroke="rgb(255,255,64)" stroke-width="0.6"/><path d="M508.26 305.44 L512.53 306.88 L513.35 303.89 L509.09 302.45 Z" fill="rgb(255,255,84)" stroke="rgb(255,255,84)" stroke-width="0.6"/><path d="M509.09 302.45 L513.35 303.89 L514.36 300.94 L510.13 299.51 Z" fill="rgb(255,255,90)" stroke="rgb(255,255,90)" stroke-width="0.6"/><path d="M510.13 299.51 L514.36 300.94 L515.55 298.10 L511.34 296.68 Z" fill="rgb(255,255,80)" stroke="rgb(255,255,80)" stroke-width="0.6"/><path d="M511.34 296.68 L515.55 298.10 L516.88 295.43 L512.70 294.02 Z" fill="rgb(255,255,57)" stroke="rgb(255,255,57)" stroke-width="0.6"/><path d="M512.70 294.02 L516.88 295.43 L518.32 293.02 L514.18 291.62 Z" fill="rgb(255,255,33)" stroke="rgb(255,255,33)" stroke-width="0.6"/><path d="M514.18 291.62 L518.32 293.02 L519.84 290.90 L515.73 289.51 Z" fill="rgb(255,255,15)" stroke="rgb(255,255,15)" stroke-width="0.6"/><path d="M515.73 289.51 L519.84 290.90 L521.39 289.15 L517.33 287.77 Z" fill="rgb(255,255,5)" stroke="rgb(255,255,5)" stroke-width="0.6"/><path d="M511.45 315.35 L515.79 316.77 L515.91 314.10 L511.57 312.68 Z" fill="rgb(255,255,20)" stroke="rgb(255,255,20)" stroke-width="0.6"/><path d="M511.57 312.68 L515.91 314.10 L516.26 311.26 L511.94 309.84 Z" fill="rgb(255,255,41)" stroke="rgb(255,255,41)" stroke-width="0.6"/><path d="M511.94 309.84 L516.26 311.26 L516.84 308.30 L512.53 306.88 Z" fill="rgb(255,255,67)" stroke="rgb(255,255,67)" stroke-width="0.6"/><path d="M512.53 306.88 L516.84 308.30 L517.64 305.30 L513.35 303.89 Z" fill="rgb(255,255,88)" stroke="rgb(255,255,88)" stroke-width="0.6"/><path d="M513.35 303.89 L517.64 305.30 L518.63 302.34 L514.36 300.94 Z" fill="rgb(255,255,94)" stroke="rgb(255,255,94)" stroke-width="0.6"/><path d="M514.36 300.94 L518.63 302.34 L519.79 299.49 L515.55 298.10 Z" fill="rgb(255,255,82)" stroke="rgb(255,255,82)" stroke-width="0.6"/><path d="M515.55 298.10 L519.79 299.49 L521.09 296.81 L516.88 295.43 Z" fill="rgb(255,255,59)" stroke="rgb(255,255,59)" stroke-width="0.6"/><path d="M516.88 295.43 L521.09 296.81 L522.49 294.38 L518.32 293.02 Z" fill="rgb(255,255,34)" stroke="rgb(255,255,34)" stroke-width="0.6"/><path d="M518.32 293.02 L522.49 294.38 L523.97 292.26 L519.84 290.90 Z" fill="rgb(255,255,15)" stroke="rgb(255,255,15)" stroke-width="0.6"/><path d="M519.84 290.90 L523.97 292.26 L525.49 290.49 L521.39 289.15 Z" fill="rgb(255,255,5)" stroke="rgb(255,255,5)" stroke-width="0.6"/><path d="M515.79 316.77 L520.16 318.15 L520.27 315.49 L515.91 314.10 Z" fill="rgb(255,255,21)" stroke="rgb(255,255,21)" stroke-width="0.6"/><path d="M515.91 314.10 L520.27 315.49 L520.62 312.64 L516.26 311.26 Z" fill="rgb(255,255,43)" stroke="rgb(255,255,43)" stroke-width="0.6"/><path d="M516.26 311.26 L520.62 312.64 L521.19 309.68 L516.84 308.30 Z" fill="rgb(255,255,70)" stroke="rgb(255,255,70)" stroke-width="0.6"/><path d="M516.84 308.30 L521.19 309.68 L521.96 306.67 L517.64 305.30 Z" fill="rgb(255,255,91)" stroke="rgb(255,255,91)" stroke-width="0.6"/><path d="M517.64 305.30 L521.96 306.67 L522.93 303.71 L518.63 302.34 Z" fill="rgb(255,255,97)" stroke="rgb(255,255,97)" stroke-width="0.6"/><path d="M518.63 302.34 L522.93 303.71 L524.06 300.84 L519.79 299.49 Z" fill="rgb(255,255,85)" stroke="rgb(255,255,85)" stroke-width="0.6"/><path d="M519.79 299.49 L524.06 300.84 L525.32 298.16 L521.09 296.81 Z" fill="rgb(255,255,61)" stroke="rgb(255,255,61)" stroke-width="0.6"/><path d="M521.09 296.81 L525.32 298.16 L526.70 295.72 L522.49 294.38 Z" fill="rgb(255,255,34)" stroke="rgb(255,255,34)" stroke-width="0.6"/><path d="M522.49 294.38 L526.70 295.72 L528.14 293.58 L523.97 292.26 Z" fill="rgb(255,255,15)" stroke="rgb(255,255,15)" stroke-width="0.6"/><path d="M523.97 292.26 L528.14 293.58 L529.62 291.80 L525.49 290.49 Z" fill="rgb(255,255,5)" stroke="rgb(255,255,5)" stroke-width="0.6"/><path d="M520.16 318.15 L524.56 319.51 L524.67 316.84 L520.27 315.49 Z" fill="rgb(255,255,22)" stroke="rgb(255,255,22)" stroke-width="0.6"/><path d="M520.27 315.49 L524.67 316.84 L525.01 313.99 L520.62 312.64 Z" fill="rgb(255,255,46)" stroke="rgb(255,255,46)" stroke-width="0.6"/><path d="M520.62 312.64 L525.01 313.99 L525.57 311.02 L521.19 309.68 Z" fill="rgb(255,255,73)" stroke="rgb(255,255,73)" stroke-width="0.6"/><path d="M521.19 309.68 L525.57 311.02 L526.32 308.01 L521.96 306.67 Z" fill="rgb(255,255,95)" stroke="rgb(255,255,95)" stroke-width="0.6"/><path d="M521.96 306.67 L526.32 308.01 L527.26 305.04 L522.93 303.71 Z" fill="rgb(255,255,101)" stroke="rgb(255,255,101)" stroke-width="0.6"/><path d="M522.93 303.71 L527.26 305.04 L528.36 302.16 L524.06 300.84 Z" fill="rgb(255,255,88)" stroke="rgb(255,255,88)" stroke-width="0.6"/><path d="M524.06 300.84 L528.36 302.16 L529.60 299.47 L525.32 298.16 Z" fill="rgb(255,255,62)" stroke="rgb(255,255,62)" stroke-width="0.6"/><path d="M525.32 298.16 L529.60 299.47 L530.93 297.02 L526.70 295.72 Z" fill="rgb(255,255,35)" stroke="rgb(255,255,35)" stroke-width="0.6"/><path d="M526.70 295.72 L530.93 297.02 L532.34 294.87 L528.14 293.58 Z" fill="rgb(255,255,15)" stroke="rgb(255,255,15)" stroke-width="0.6"/><path d="M528.14 293.58 L532.34 294.87 L533.78 293.08 L529.62 291.80 Z" fill="rgb(255,255,5)" stroke="rgb(255,255,5)" stroke-width="0.6"/><path d="M524.56 319.51 L529.00 320.82 L529.11 318.16 L524.67 316.84 Z" fill="rgb(255,255,23)" stroke="rgb(255,255,23)" stroke-width="0.6"/><path d="M524.67 316.84 L529.11 318.16 L529.44 315.30 L525.01 313.99 Z" fill="rgb(255,255,48)" stroke="rgb(255,255,48)" stroke-width="0.6"/><path d="M525.01 313.99 L529.44 315.30 L529.97 312.33 L525.57 311.02 Z" fill="rgb(255,255,77)" stroke="rgb(255,255,77)" stroke-width="0.6"/><path d="M525.57 311.02 L529.97 312.33 L530.71 309.31 L526.32 308.01 Z" fill="rgb(255,255,99)" stroke="rgb(255,255,99)" stroke-width="0.6"/><path d="M526.32 308.01 L530.71 309.31 L531.63 306.33 L527.26 305.04 Z" fill="rgb(255,255,104)" stroke="rgb(255,255,104)" stroke-width="0.6"/><path d="M527.26 305.04 L531.63 306.33 L532.70 303.45 L528.36 302.16 Z" fill="rgb(255,255,90)" stroke="rgb(255,255,90)" stroke-width="0.6"/><path d="M528.36 302.16 L532.70 303.45 L533.90 300.75 L529.60 299.47 Z" fill="rgb(255,255,64)" stroke="rgb(255,255,64)" stroke-width="0.6"/><path d="M529.60 299.47 L533.90 300.75 L535.20 298.29 L530.93 297.02 Z" fill="rgb(255,255,36)" stroke="rgb(255,255,36)" stroke-width="0.6"/><path d="M530.93 297.02 L535.20 298.29 L536.57 296.13 L532.34 294.87 Z" fill="rgb(255,255,16)" stroke="rgb(255,255,16)" stroke-width="0.6"/><path d="M532.34 294.87 L536.57 296.13 L537.97 294.32 L533.78 293.08 Z" fill="rgb(255,255,5)" stroke="rgb(255,255,5)" stroke-width="0.6"/><path d="M529.00 320.82 L533.46 322.11 L533.57 319.44 L529.11 318.16 Z" fill="rgb(255,255,25)" stroke="rgb(255,255,25)" stroke-width="0.6"/><path d="M529.11 318.16 L533.57 319.44 L533.89 316.58 L529.44 315.30 Z" fill="rgb(255,255,50)" stroke="rgb(255,255,50)" stroke-width="0.6"/><path d="M529.44 315.30 L533.89 316.58 L534.41 313.60 L529.97 312.33 Z" fill="rgb(255,255,80)" stroke="rgb(255,255,80)" stroke-width="0.6"/><path d="M529.97 312.33 L534.41 313.60 L535.13 310.58 L530.71 309.31 Z" fill="rgb(255,255,103)" stroke="rgb(255,255,103)" stroke-width="0.6"/><path d="M530.71 309.31 L535.13 310.58 L536.02 307.59 L531.63 306.33 Z" fill="rgb(255,255,108)" stroke="rgb(255,255,108)" stroke-width="0.6"/><path d="M531.63 306.33 L536.02 307.59 L537.06 304.70 L532.70 303.45 Z" fill="rgb(255,255,93)" stroke="rgb(255,255,93)" stroke-width="0.6"/><path d="M532.70 303.45 L537.06 304.70 L538.23 301.99 L533.90 300.75 Z" fill="rgb(255,255,65)" stroke="rgb(255,255,65)" stroke-width="0.6"/><path d="M533.90 300.75 L538.23 301.99 L539.50 299.52 L535.20 298.29 Z" fill="rgb(255,255,37)" stroke="rgb(255,255,37)" stroke-width="0.6"/><path d="M535.20 298.29 L539.50 299.52 L540.83 297.35 L536.57 296.13 Z" fill="rgb(255,255,16)" stroke="rgb(255,255,16)" stroke-width="0.6"/><path d="M536.57 296.13 L540.83 297.35 L542.19 295.53 L537.97 294.32 Z" fill="rgb(255,255,5)" stroke="rgb(255,255,5)" stroke-width="0.6"/><path d="M533.46 322.11 L537.96 323.35 L538.06 320.68 L533.57 319.44 Z" fill="rgb(255,255,26)" stroke="rgb(255,255,26)" stroke-width="0.6"/><path d="M533.57 319.44 L538.06 320.68 L538.37 317.82 L533.89 316.58 Z" fill="rgb(255,255,52)" stroke="rgb(255,255,52)" stroke-width="0.6"/><path d="M533.89 316.58 L538.37 317.82 L538.88 314.84 L534.41 313.60 Z" fill="rgb(255,255,83)" stroke="rgb(255,255,83)" stroke-width="0.6"/><path d="M534.41 313.60 L538.88 314.84 L539.58 311.82 L535.13 310.58 Z" fill="rgb(255,255,106)" stroke="rgb(255,255,106)" stroke-width="0.6"/><path d="M535.13 310.58 L539.58 311.82 L540.44 308.82 L536.02 307.59 Z" fill="rgb(255,255,111)" stroke="rgb(255,255,111)" stroke-width="0.6"/><path d="M536.02 307.59 L540.44 308.82 L541.46 305.92 L537.06 304.70 Z" fill="rgb(255,255,96)" stroke="rgb(255,255,96)" stroke-width="0.6"/><path d="M537.06 304.70 L541.46 305.92 L542.59 303.20 L538.23 301.99 Z" fill="rgb(255,255,67)" stroke="rgb(255,255,67)" stroke-width="0.6"/><path d="M538.23 301.99 L542.59 303.20 L543.82 300.72 L539.50 299.52 Z" fill="rgb(255,255,37)" stroke="rgb(255,255,37)" stroke-width="0.6"/><path d="M539.50 299.52 L543.82 300.72 L545.12 298.54 L540.83 297.35 Z" fill="rgb(255,255,16)" stroke="rgb(255,255,16)" stroke-width="0.6"/><path d="M540.83 297.35 L545.12 298.54 L546.44 296.71 L542.19 295.53 Z" fill="rgb(255,255,5)" stroke="rgb(255,255,5)" stroke-width="0.6"/><path d="M537.96 323.35 L542.49 324.56 L542.59 321.89 L538.06 320.68 Z" fill="rgb(255,255,27)" stroke="rgb(255,255,27)" stroke-width="0.6"/><path d="M538.06 320.68 L542.59 321.89 L542.89 319.03 L538.37 317.82 Z" fill="rgb(255,255,55)" stroke="rgb(255,255,55)" stroke-width="0.6"/><path d="M538.37 317.82 L542.89 319.03 L543.38 316.04 L538.88 314.84 Z" fill="rgb(255,255,86)" stroke="rgb(255,255,86)" stroke-width="0.6"/><path d="M538.88 314.84 L543.38 316.04 L544.06 313.01 L539.58 311.82 Z" fill="rgb(255,255,110)" stroke="rgb(255,255,110)" stroke-width="0.6"/><path d="M539.58 311.82 L544.06 313.01 L544.90 310.01 L540.44 308.82 Z" fill="rgb(255,255,115)" stroke="rgb(255,255,115)" stroke-width="0.6"/><path d="M540.44 308.82 L544.90 310.01 L545.88 307.10 L541.46 305.92 Z" fill="rgb(255,255,98)" stroke="rgb(255,255,98)" stroke-width="0.6"/><path d="M541.46 305.92 L545.88 307.10 L546.98 304.37 L542.59 303.20 Z" fill="rgb(255,255,68)" stroke="rgb(255,255,68)" stroke-width="0.6"/><path d="M542.59 303.20 L546.98 304.37 L548.18 301.88 L543.82 300.72 Z" fill="rgb(255,255,38)" stroke="rgb(255,255,38)" stroke-width="0.6"/><path d="M543.82 300.72 L548.18 301.88 L549.43 299.69 L545.12 298.54 Z" fill="rgb(255,255,16)" stroke="rgb(255,255,16)" stroke-width="0.6"/><path d="M545.12 298.54 L549.43 299.69 L550.72 297.85 L546.44 296.71 Z" fill="rgb(255,255,5)" stroke="rgb(255,255,5)" stroke-width="0.6"/><path d="M542.49 324.56 L547.04 325.73 L547.14 323.06 L542.59 321.89 Z" fill="rgb(255,255,29)" stroke="rgb(255,255,29)" stroke-width="0.6"/><path d="M542.59 321.89 L547.14 323.06 L547.43 320.20 L542.89 319.03 Z" fill="rgb(255,255,57)" stroke="rgb(255,255,57)" stroke-width="0.6"/><path d="M542.89 319.03 L547.43 320.20 L547.91 317.21 L543.38 316.04 Z" fill="rgb(255,255,90)" stroke="rgb(255,255,90)" stroke-width="0.6"/><path d="M543.38 316.04 L547.91 317.21 L548.56 314.17 L544.06 313.01 Z" fill="rgb(255,255,114)" stroke="rgb(255,255,114)" stroke-width="0.6"/><path d="M544.06 313.01 L548.56 314.17 L549.38 311.16 L544.90 310.01 Z" fill="rgb(255,255,118)" stroke="rgb(255,255,118)" stroke-width="0.6"/><path d="M544.90 310.01 L549.38 311.16 L550.33 308.25 L545.88 307.10 Z" fill="rgb(255,255,101)" stroke="rgb(255,255,101)" stroke-width="0.6"/><path d="M545.88 307.10 L550.33 308.25 L551.40 305.51 L546.98 304.37 Z" fill="rgb(255,255,70)" stroke="rgb(255,255,70)" stroke-width="0.6"/><path d="M546.98 304.37 L551.40 305.51 L552.56 303.01 L548.18 301.88 Z" fill="rgb(255,255,39)" stroke="rgb(255,255,39)" stroke-width="0.6"/><path d="M548.18 301.88 L552.56 303.01 L553.78 300.81 L549.43 299.69 Z" fill="rgb(255,255,16)" stroke="rgb(255,255,16)" stroke-width="0.6"/><path d="M549.43 299.69 L553.78 300.81 L555.02 298.96 L550.72 297.85 Z" fill="rgb(255,255,5)" stroke="rgb(255,255,5)" stroke-width="0.6"/><path d="M547.04 325.73 L551.62 326.87 L551.72 324.20 L547.14 323.06 Z" fill="rgb(255,255,30)" stroke="rgb(255,255,30)" stroke-width="0.6"/><path d="M547.14 323.06 L551.72 324.20 L552.00 321.33 L547.43 320.20 Z" fill="rgb(255,255,59)" stroke="rgb(255,255,59)" stroke-width="0.6"/><path d="M547.43 320.20 L552.00 321.33 L552.46 318.34 L547.91 317.21 Z" fill="rgb(255,255,93)" stroke="rgb(255,255,93)" stroke-width="0.6"/><path d="M547.91 317.21 L552.46 318.34 L553.10 315.30 L548.56 314.17 Z" fill="rgb(255,255,118)" stroke="rgb(255,255,118)" stroke-width="0.6"/><path d="M548.56 314.17 L553.10 315.30 L553.89 312.28 L549.38 311.16 Z" fill="rgb(255,255,122)" stroke="rgb(255,255,122)" stroke-width="0.6"/><path d="M549.38 311.16 L553.89 312.28 L554.81 309.36 L550.33 308.25 Z" fill="rgb(255,255,104)" stroke="rgb(255,255,104)" stroke-width="0.6"/><path d="M550.33 308.25 L554.81 309.36 L555.84 306.61 L551.40 305.51 Z" fill="rgb(255,255,71)" stroke="rgb(255,255,71)" stroke-width="0.6"/><path d="M551.40 305.51 L555.84 306.61 L556.97 304.10 L552.56 303.01 Z" fill="rgb(255,255,39)" stroke="rgb(255,255,39)" stroke-width="0.6"/><path d="M552.56 303.01 L556.97 304.10 L558.15 301.89 L553.78 300.81 Z" fill="rgb(255,255,17)" stroke="rgb(255,255,17)" stroke-width="0.6"/><path d="M553.78 300.81 L558.15 301.89 L559.35 300.04 L555.02 298.96 Z" fill="rgb(255,255,5)" stroke="rgb(255,255,5)" stroke-width="0.6"/><path d="M551.62 326.87 L556.23 327.97 L556.32 325.30 L551.72 324.20 Z" fill="rgb(255,255,31)" stroke="rgb(255,255,31)" stroke-width="0.6"/><path d="M551.72 324.20 L556.32 325.30 L556.60 322.43 L552.00 321.33 Z" fill="rgb(255,255,62)" stroke="rgb(255,255,62)" stroke-width="0.6"/><path d="M552.00 321.33 L556.60 322.43 L557.05 319.44 L552.46 318.34 Z" fill="rgb(255,255,96)" stroke="rgb(255,255,96)" stroke-width="0.6"/><path d="M552.46 318.34 L557.05 319.44 L557.66 316.39 L553.10 315.30 Z" fill="rgb(255,255,122)" stroke="rgb(255,255,122)" stroke-width="0.6"/><path d="M553.10 315.30 L557.66 316.39 L558.42 313.36 L553.89 312.28 Z" fill="rgb(255,255,125)" stroke="rgb(255,255,125)" stroke-width="0.6"/><path d="M553.89 312.28 L558.42 313.36 L559.31 310.44 L554.81 309.36 Z" fill="rgb(255,255,106)" stroke="rgb(255,255,106)" stroke-width="0.6"/><path d="M554.81 309.36 L559.31 310.44 L560.31 307.68 L555.84 306.61 Z" fill="rgb(255,255,73)" stroke="rgb(255,255,73)" stroke-width="0.6"/><path d="M555.84 306.61 L560.31 307.68 L561.40 305.16 L556.97 304.10 Z" fill="rgb(255,255,40)" stroke="rgb(255,255,40)" stroke-width="0.6"/><path d="M556.97 304.10 L561.40 305.16 L562.54 302.94 L558.15 301.89 Z" fill="rgb(255,255,17)" stroke="rgb(255,255,17)" stroke-width="0.6"/><path d="M558.15 301.89 L562.54 302.94 L563.71 301.08 L559.35 300.04 Z" fill="rgb(255,255,5)" stroke="rgb(255,255,5)" stroke-width="0.6"/><path d="M556.23 327.97 L560.87 329.04 L560.95 326.36 L556.32 325.30 Z" fill="rgb(255,255,33)" stroke="rgb(255,255,33)" stroke-width="0.6"/><path d="M556.32 325.30 L560.95 326.36 L561.22 323.49 L556.60 322.43 Z" fill="rgb(255,255,64)" stroke="rgb(255,255,64)" stroke-width="0.6"/><path d="M556.60 322.43 L561.22 323.49 L561.65 320.49 L557.05 319.44 Z" fill="rgb(255,255,100)" stroke="rgb(255,255,100)" stroke-width="0.6"/><path d="M557.05 319.44 L561.65 320.49 L562.25 317.44 L557.66 316.39 Z" fill="rgb(255,255,125)" stroke="rgb(255,255,125)" stroke-width="0.6"/><path d="M557.66 316.39 L562.25 317.44 L562.98 314.41 L558.42 313.36 Z" fill="rgb(255,255,129)" stroke="rgb(255,255,129)" stroke-width="0.6"/><path d="M558.42 313.36 L562.98 314.41 L563.84 311.48 L559.31 310.44 Z" fill="rgb(255,255,109)" stroke="rgb(255,255,109)" stroke-width="0.6"/><path d="M559.31 310.44 L563.84 311.48 L564.81 308.71 L560.31 307.68 Z" fill="rgb(255,255,74)" stroke="rgb(255,255,74)" stroke-width="0.6"/><path d="M560.31 307.68 L564.81 308.71 L565.86 306.19 L561.40 305.16 Z" fill="rgb(255,255,41)" stroke="rgb(255,255,41)" stroke-width="0.6"/><path d="M561.40 305.16 L565.86 306.19 L566.96 303.96 L562.54 302.94 Z" fill="rgb(255,255,17)" stroke="rgb(255,255,17)" stroke-width="0.6"/><path d="M562.54 302.94 L566.96 303.96 L568.09 302.08 L563.71 301.08 Z" fill="rgb(255,255,5)" stroke="rgb(255,255,5)" stroke-width="0.6"/><path d="M560.87 329.04 L565.53 330.06 L565.61 327.39 L560.95 326.36 Z" fill="rgb(255,255,34)" stroke="rgb(255,255,34)" stroke-width="0.6"/><path d="M560.95 326.36 L565.61 327.39 L565.87 324.52 L561.22 323.49 Z" fill="rgb(255,255,67)" stroke="rgb(255,255,67)" stroke-width="0.6"/><path d="M561.22 323.49 L565.87 324.52 L566.28 321.51 L561.65 320.49 Z" fill="rgb(255,255,103)" stroke="rgb(255,255,103)" stroke-width="0.6"/><path d="M561.65 320.49 L566.28 321.51 L566.86 318.46 L562.25 317.44 Z" fill="rgb(255,255,129)" stroke="rgb(255,255,129)" stroke-width="0.6"/><path d="M562.25 317.44 L566.86 318.46 L567.57 315.42 L562.98 314.41 Z" fill="rgb(255,255,132)" stroke="rgb(255,255,132)" stroke-width="0.6"/><path d="M562.98 314.41 L567.57 315.42 L568.40 312.48 L563.84 311.48 Z" fill="rgb(255,255,111)" stroke="rgb(255,255,111)" stroke-width="0.6"/><path d="M563.84 311.48 L568.40 312.48 L569.33 309.71 L564.81 308.71 Z" fill="rgb(255,255,76)" stroke="rgb(255,255,76)" stroke-width="0.6"/><path d="M564.81 308.71 L569.33 309.71 L570.34 307.17 L565.86 306.19 Z" fill="rgb(255,255,41)" stroke="rgb(255,255,41)" stroke-width="0.6"/><path d="M565.86 306.19 L570.34 307.17 L571.40 304.94 L566.96 303.96 Z" fill="rgb(255,255,17)" stroke="rgb(255,255,17)" stroke-width="0.6"/><path d="M566.96 303.96 L571.40 304.94 L572.49 303.05 L568.09 302.08 Z" fill="rgb(255,255,5)" stroke="rgb(255,255,5)" stroke-width="0.6"/><path d="M565.53 330.06 L570.21 331.05 L570.29 328.38 L565.61 327.39 Z" fill="rgb(255,255,35)" stroke="rgb(255,255,35)" stroke-width="0.6"/><path d="M565.61 327.39 L570.29 328.38 L570.54 325.50 L565.87 324.52 Z" fill="rgb(255,255,69)" stroke="rgb(255,255,69)" stroke-width="0.6"/><path d="M565.87 324.52 L570.54 325.50 L570.94 322.50 L566.28 321.51 Z" fill="rgb(255,255,106)" stroke="rgb(255,255,106)" stroke-width="0.6"/><path d="M566.28 321.51 L570.94 322.50 L571.49 319.44 L566.86 318.46 Z" fill="rgb(255,255,133)" stroke="rgb(255,255,133)" stroke-width="0.6"/><path d="M566.86 318.46 L571.49 319.44 L572.17 316.40 L567.57 315.42 Z" fill="rgb(255,255,136)" stroke="rgb(255,255,136)" stroke-width="0.6"/><path d="M567.57 315.42 L572.17 316.40 L572.98 313.45 L568.40 312.48 Z" fill="rgb(255,255,114)" stroke="rgb(255,255,114)" stroke-width="0.6"/><path d="M568.40 312.48 L572.98 313.45 L573.87 310.67 L569.33 309.71 Z" fill="rgb(255,255,77)" stroke="rgb(255,255,77)" stroke-width="0.6"/><path d="M569.33 309.71 L573.87 310.67 L574.85 308.13 L570.34 307.17 Z" fill="rgb(255,255,42)" stroke="rgb(255,255,42)" stroke-width="0.6"/><path d="M570.34 307.17 L574.85 308.13 L575.87 305.88 L571.40 304.94 Z" fill="rgb(255,255,17)" stroke="rgb(255,255,17)" stroke-width="0.6"/><path d="M571.40 304.94 L575.87 305.88 L576.92 303.99 L572.49 303.05 Z" fill="rgb(255,255,5)" stroke="rgb(255,255,5)" stroke-width="0.6"/><path d="M570.21 331.05 L574.92 332.00 L575.00 329.33 L570.29 328.38 Z" fill="rgb(255,255,37)" stroke="rgb(255,255,37)" stroke-width="0.6"/><path d="M570.29 328.38 L575.00 329.33 L575.23 326.45 L570.54 325.50 Z" fill="rgb(255,255,71)" stroke="rgb(255,255,71)" stroke-width="0.6"/><path d="M570.54 325.50 L575.23 326.45 L575.62 323.44 L570.94 322.50 Z" fill="rgb(255,255,110)" stroke="rgb(255,255,110)" stroke-width="0.6"/><path d="M570.94 322.50 L575.62 323.44 L576.15 320.38 L571.49 319.44 Z" fill="rgb(255,255,136)" stroke="rgb(255,255,136)" stroke-width="0.6"/><path d="M571.49 319.44 L576.15 320.38 L576.81 317.33 L572.17 316.40 Z" fill="rgb(255,255,139)" stroke="rgb(255,255,139)" stroke-width="0.6"/><path d="M572.17 316.40 L576.81 317.33 L577.58 314.38 L572.98 313.45 Z" fill="rgb(255,255,116)" stroke="rgb(255,255,116)" stroke-width="0.6"/><path d="M572.98 313.45 L577.58 314.38 L578.44 311.59 L573.87 310.67 Z" fill="rgb(255,255,79)" stroke="rgb(255,255,79)" stroke-width="0.6"/><path d="M573.87 310.67 L578.44 311.59 L579.37 309.04 L574.85 308.13 Z" fill="rgb(255,255,42)" stroke="rgb(255,255,42)" stroke-width="0.6"/><path d="M574.85 308.13 L579.37 309.04 L580.36 306.79 L575.87 305.88 Z" fill="rgb(255,255,17)" stroke="rgb(255,255,17)" stroke-width="0.6"/><path d="M575.87 305.88 L580.36 306.79 L581.37 304.89 L576.92 303.99 Z" fill="rgb(255,255,5)" stroke="rgb(255,255,5)" stroke-width="0.6"/><path d="M574.92 332.00 L579.65 332.92 L579.72 330.24 L575.00 329.33 Z" fill="rgb(255,255,38)" stroke="rgb(255,255,38)" stroke-width="0.6"/><path d="M575.00 329.33 L579.72 330.24 L579.95 327.36 L575.23 326.45 Z" fill="rgb(255,255,74)" stroke="rgb(255,255,74)" stroke-width="0.6"/><path d="M575.23 326.45 L579.95 327.36 L580.32 324.35 L575.62 323.44 Z" fill="rgb(255,255,113)" stroke="rgb(255,255,113)" stroke-width="0.6"/><path d="M575.62 323.44 L580.32 324.35 L580.83 321.28 L576.15 320.38 Z" fill="rgb(255,255,140)" stroke="rgb(255,255,140)" stroke-width="0.6"/><path d="M576.15 320.38 L580.83 321.28 L581.46 318.23 L576.81 317.33 Z" fill="rgb(255,255,142)" stroke="rgb(255,255,142)" stroke-width="0.6"/><path d="M576.81 317.33 L581.46 318.23 L582.20 315.27 L577.58 314.38 Z" fill="rgb(255,255,118)" stroke="rgb(255,255,118)" stroke-width="0.6"/><path d="M577.58 314.38 L582.20 315.27 L583.03 312.48 L578.44 311.59 Z" fill="rgb(255,255,80)" stroke="rgb(255,255,80)" stroke-width="0.6"/><path d="M578.44 311.59 L583.03 312.48 L583.92 309.92 L579.37 309.04 Z" fill="rgb(255,255,43)" stroke="rgb(255,255,43)" stroke-width="0.6"/><path d="M579.37 309.04 L583.92 309.92 L584.87 307.66 L580.36 306.79 Z" fill="rgb(255,255,18)" stroke="rgb(255,255,18)" stroke-width="0.6"/><path d="M580.36 306.79 L584.87 307.66 L585.84 305.75 L581.37 304.89 Z" fill="rgb(255,255,5)" stroke="rgb(255,255,5)" stroke-width="0.6"/><path d="M579.65 332.92 L584.40 333.80 L584.47 331.12 L579.72 330.24 Z" fill="rgb(255,255,39)" stroke="rgb(255,255,39)" stroke-width="0.6"/><path d="M579.72 330.24 L584.47 331.12 L584.69 328.24 L579.95 327.36 Z" fill="rgb(255,255,76)" stroke="rgb(255,255,76)" stroke-width="0.6"/><path d="M579.95 327.36 L584.69 328.24 L585.04 325.22 L580.32 324.35 Z" fill="rgb(255,255,116)" stroke="rgb(255,255,116)" stroke-width="0.6"/><path d="M580.32 324.35 L585.04 325.22 L585.53 322.15 L580.83 321.28 Z" fill="rgb(255,255,144)" stroke="rgb(255,255,144)" stroke-width="0.6"/><path d="M580.83 321.28 L585.53 322.15 L586.13 319.09 L581.46 318.23 Z" fill="rgb(255,255,145)" stroke="rgb(255,255,145)" stroke-width="0.6"/><path d="M581.46 318.23 L586.13 319.09 L586.84 316.13 L582.20 315.27 Z" fill="rgb(255,255,121)" stroke="rgb(255,255,121)" stroke-width="0.6"/><path d="M582.20 315.27 L586.84 316.13 L587.63 313.33 L583.03 312.48 Z" fill="rgb(255,255,81)" stroke="rgb(255,255,81)" stroke-width="0.6"/><path d="M583.03 312.48 L587.63 313.33 L588.49 310.76 L583.92 309.92 Z" fill="rgb(255,255,44)" stroke="rgb(255,255,44)" stroke-width="0.6"/><path d="M583.92 309.92 L588.49 310.76 L589.40 308.50 L584.87 307.66 Z" fill="rgb(255,255,18)" stroke="rgb(255,255,18)" stroke-width="0.6"/><path d="M584.87 307.66 L589.40 308.50 L590.33 306.58 L585.84 305.75 Z" fill="rgb(255,255,5)" stroke="rgb(255,255,5)" stroke-width="0.6"/><path d="M584.40 333.80 L589.17 334.63 L589.24 331.96 L584.47 331.12 Z" fill="rgb(255,255,41)" stroke="rgb(255,255,41)" stroke-width="0.6"/><path d="M584.47 331.12 L589.24 331.96 L589.45 329.07 L584.69 328.24 Z" fill="rgb(255,255,78)" stroke="rgb(255,255,78)" stroke-width="0.6"/><path d="M584.69 328.24 L589.45 329.07 L589.79 326.06 L585.04 325.22 Z" fill="rgb(255,255,119)" stroke="rgb(255,255,119)" stroke-width="0.6"/><path d="M585.04 325.22 L589.79 326.06 L590.25 322.98 L585.53 322.15 Z" fill="rgb(255,255,147)" stroke="rgb(255,255,147)" stroke-width="0.6"/><path d="M585.53 322.15 L590.25 322.98 L590.83 319.92 L586.13 319.09 Z" fill="rgb(255,255,149)" stroke="rgb(255,255,149)" stroke-width="0.6"/><path d="M586.13 319.09 L590.83 319.92 L591.50 316.95 L586.84 316.13 Z" fill="rgb(255,255,123)" stroke="rgb(255,255,123)" stroke-width="0.6"/><path d="M586.84 316.13 L591.50 316.95 L592.26 314.14 L587.63 313.33 Z" fill="rgb(255,255,83)" stroke="rgb(255,255,83)" stroke-width="0.6"/><path d="M587.63 313.33 L592.26 314.14 L593.08 311.57 L588.49 310.76 Z" fill="rgb(255,255,44)" stroke="rgb(255,255,44)" stroke-width="0.6"/><path d="M588.49 310.76 L593.08 311.57 L593.95 309.30 L589.40 308.50 Z" fill="rgb(255,255,18)" stroke="rgb(255,255,18)" stroke-width="0.6"/><path d="M589.40 308.50 L593.95 309.30 L594.83 307.37 L590.33 306.58 Z" fill="rgb(255,255,5)" stroke="rgb(255,255,5)" stroke-width="0.6"/><path d="M589.17 334.63 L593.96 335.44 L594.03 332.76 L589.24 331.96 Z" fill="rgb(255,255,42)" stroke="rgb(255,255,42)" stroke-width="0.6"/><path d="M589.24 331.96 L594.03 332.76 L594.22 329.87 L589.45 329.07 Z" fill="rgb(255,255,80)" stroke="rgb(255,255,80)" stroke-width="0.6"/><path d="M589.45 329.07 L594.22 329.87 L594.55 326.85 L589.79 326.06 Z" fill="rgb(255,255,122)" stroke="rgb(255,255,122)" stroke-width="0.6"/><path d="M589.79 326.06 L594.55 326.85 L594.99 323.77 L590.25 322.98 Z" fill="rgb(255,255,150)" stroke="rgb(255,255,150)" stroke-width="0.6"/><path d="M590.25 322.98 L594.99 323.77 L595.54 320.71 L590.83 319.92 Z" fill="rgb(255,255,152)" stroke="rgb(255,255,152)" stroke-width="0.6"/><path d="M590.83 319.92 L595.54 320.71 L596.19 317.73 L591.50 316.95 Z" fill="rgb(255,255,125)" stroke="rgb(255,255,125)" stroke-width="0.6"/><path d="M591.50 316.95 L596.19 317.73 L596.91 314.92 L592.26 314.14 Z" fill="rgb(255,255,84)" stroke="rgb(255,255,84)" stroke-width="0.6"/><path d="M592.26 314.14 L596.91 314.92 L597.69 312.34 L593.08 311.57 Z" fill="rgb(255,255,45)" stroke="rgb(255,255,45)" stroke-width="0.6"/><path d="M593.08 311.57 L597.69 312.34 L598.52 310.06 L593.95 309.30 Z" fill="rgb(255,255,18)" stroke="rgb(255,255,18)" stroke-width="0.6"/><path d="M593.95 309.30 L598.52 310.06 L599.36 308.13 L594.83 307.37 Z" fill="rgb(255,255,5)" stroke="rgb(255,255,5)" stroke-width="0.6"/><path d="M593.96 335.44 L598.77 336.20 L598.83 333.52 L594.03 332.76 Z" fill="rgb(255,255,43)" stroke="rgb(255,255,43)" stroke-width="0.6"/><path d="M594.03 332.76 L598.83 333.52 L599.02 330.63 L594.22 329.87 Z" fill="rgb(255,255,83)" stroke="rgb(255,255,83)" stroke-width="0.6"/><path d="M594.22 329.87 L599.02 330.63 L599.33 327.61 L594.55 326.85 Z" fill="rgb(255,255,125)" stroke="rgb(255,255,125)" stroke-width="0.6"/><path d="M594.55 326.85 L599.33 327.61 L599.75 324.53 L594.99 323.77 Z" fill="rgb(255,255,154)" stroke="rgb(255,255,154)" stroke-width="0.6"/><path d="M594.99 323.77 L599.75 324.53 L600.27 321.46 L595.54 320.71 Z" fill="rgb(255,255,154)" stroke="rgb(255,255,154)" stroke-width="0.6"/><path d="M595.54 320.71 L600.27 321.46 L600.89 318.48 L596.19 317.73 Z" fill="rgb(255,255,127)" stroke="rgb(255,255,127)" stroke-width="0.6"/><path d="M596.19 317.73 L600.89 318.48 L601.57 315.66 L596.91 314.92 Z" fill="rgb(255,255,85)" stroke="rgb(255,255,85)" stroke-width="0.6"/><path d="M596.91 314.92 L601.57 315.66 L602.32 313.08 L597.69 312.34 Z" fill="rgb(255,255,45)" stroke="rgb(255,255,45)" stroke-width="0.6"/><path d="M597.69 312.34 L602.32 313.08 L603.10 310.79 L598.52 310.06 Z" fill="rgb(255,255,18)" stroke="rgb(255,255,18)" stroke-width="0.6"/><path d="M598.52 310.06 L603.10 310.79 L603.91 308.85 L599.36 308.13 Z" fill="rgb(255,255,5)" stroke="rgb(255,255,5)" stroke-width="0.6"/><path d="M598.77 336.20 L603.60 336.92 L603.66 334.24 L598.83 333.52 Z" fill="rgb(255,255,44)" stroke="rgb(255,255,44)" stroke-width="0.6"/><path d="M598.83 333.52 L603.66 334.24 L603.83 331.36 L599.02 330.63 Z" fill="rgb(255,255,85)" stroke="rgb(255,255,85)" stroke-width="0.6"/><path d="M599.02 330.63 L603.83 331.36 L604.13 328.33 L599.33 327.61 Z" fill="rgb(255,255,128)" stroke="rgb(255,255,128)" stroke-width="0.6"/><path d="M599.33 327.61 L604.13 328.33 L604.53 325.24 L599.75 324.53 Z" fill="rgb(255,255,157)" stroke="rgb(255,255,157)" stroke-width="0.6"/><path d="M599.75 324.53 L604.53 325.24 L605.02 322.17 L600.27 321.46 Z" fill="rgb(255,255,157)" stroke="rgb(255,255,157)" stroke-width="0.6"/><path d="M600.27 321.46 L605.02 322.17 L605.60 319.19 L600.89 318.48 Z" fill="rgb(255,255,129)" stroke="rgb(255,255,129)" stroke-width="0.6"/><path d="M600.89 318.48 L605.60 319.19 L606.26 316.36 L601.57 315.66 Z" fill="rgb(255,255,86)" stroke="rgb(255,255,86)" stroke-width="0.6"/><path d="M601.57 315.66 L606.26 316.36 L606.96 313.77 L602.32 313.08 Z" fill="rgb(255,255,46)" stroke="rgb(255,255,46)" stroke-width="0.6"/><path d="M602.32 313.08 L606.96 313.77 L607.71 311.48 L603.10 310.79 Z" fill="rgb(255,255,18)" stroke="rgb(255,255,18)" stroke-width="0.6"/><path d="M603.10 310.79 L607.71 311.48 L608.47 309.53 L603.91 308.85 Z" fill="rgb(255,255,5)" stroke="rgb(255,255,5)" stroke-width="0.6"/><path d="M603.60 336.92 L608.44 337.61 L608.50 334.93 L603.66 334.24 Z" fill="rgb(255,255,46)" stroke="rgb(255,255,46)" stroke-width="0.6"/><path d="M603.66 334.24 L608.50 334.93 L608.67 332.04 L603.83 331.36 Z" fill="rgb(255,255,87)" stroke="rgb(255,255,87)" stroke-width="0.6"/><path d="M603.83 331.36 L608.67 332.04 L608.94 329.01 L604.13 328.33 Z" fill="rgb(255,255,131)" stroke="rgb(255,255,131)" stroke-width="0.6"/><path d="M604.13 328.33 L608.94 329.01 L609.32 325.92 L604.53 325.24 Z" fill="rgb(255,255,160)" stroke="rgb(255,255,160)" stroke-width="0.6"/><path d="M604.53 325.24 L609.32 325.92 L609.79 322.85 L605.02 322.17 Z" fill="rgb(255,255,160)" stroke="rgb(255,255,160)" stroke-width="0.6"/><path d="M605.02 322.17 L609.79 322.85 L610.34 319.86 L605.60 319.19 Z" fill="rgb(255,255,131)" stroke="rgb(255,255,131)" stroke-width="0.6"/><path d="M605.60 319.19 L610.34 319.86 L610.95 317.03 L606.26 316.36 Z" fill="rgb(255,255,87)" stroke="rgb(255,255,87)" stroke-width="0.6"/><path d="M606.26 316.36 L610.95 317.03 L611.62 314.43 L606.96 313.77 Z" fill="rgb(255,255,46)" stroke="rgb(255,255,46)" stroke-width="0.6"/><path d="M606.96 313.77 L611.62 314.43 L612.32 312.13 L607.71 311.48 Z" fill="rgb(255,255,18)" stroke="rgb(255,255,18)" stroke-width="0.6"/><path d="M607.71 311.48 L612.32 312.13 L613.04 310.18 L608.47 309.53 Z" fill="rgb(255,255,5)" stroke="rgb(255,255,5)" stroke-width="0.6"/><path d="M626.94 331.91 L638.44 325.27 L637.93 322.50 L626.43 329.14 Z" fill="rgb(255,255,11)" stroke="rgb(255,255,11)" stroke-width="0.6"/><path d="M626.43 329.14 L637.93 322.50 L637.08 319.65 L625.58 326.29 Z" fill="rgb(255,255,20)" stroke="rgb(255,255,20)" stroke-width="0.6"/><path d="M625.58 326.29 L637.08 319.65 L635.93 316.81 L624.43 323.45 Z" fill="rgb(255,255,30)" stroke="rgb(255,255,30)" stroke-width="0.6"/><path d="M624.43 323.45 L635.93 316.81 L634.49 314.05 L622.99 320.69 Z" fill="rgb(255,255,37)" stroke="rgb(255,255,37)" stroke-width="0.6"/><path d="M622.99 320.69 L634.49 314.05 L632.82 311.42 L621.32 318.06 Z" fill="rgb(255,255,37)" stroke="rgb(255,255,37)" stroke-width="0.6"/><path d="M621.32 318.06 L632.82 311.42 L630.93 309.00 L619.43 315.64 Z" fill="rgb(255,255,30)" stroke="rgb(255,255,30)" stroke-width="0.6"/><path d="M619.43 315.64 L630.93 309.00 L628.89 306.85 L617.39 313.49 Z" fill="rgb(255,255,20)" stroke="rgb(255,255,20)" stroke-width="0.6"/><path d="M617.39 313.49 L628.89 306.85 L626.75 305.01 L615.25 311.65 Z" fill="rgb(255,255,11)" stroke="rgb(255,255,11)" stroke-width="0.6"/><path d="M638.44 325.27 L649.94 318.64 L649.43 315.86 L637.93 322.50 Z" fill="rgb(255,255,11)" stroke="rgb(255,255,11)" stroke-width="0.6"/><path d="M637.93 322.50 L649.43 315.86 L648.58 313.01 L637.08 319.65 Z" fill="rgb(255,255,20)" stroke="rgb(255,255,20)" stroke-width="0.6"/><path d="M637.08 319.65 L648.58 313.01 L647.43 310.17 L635.93 316.81 Z" fill="rgb(255,255,30)" stroke="rgb(255,255,30)" stroke-width="0.6"/><path d="M635.93 316.81 L647.43 310.17 L645.99 307.41 L634.49 314.05 Z" fill="rgb(255,255,37)" stroke="rgb(255,255,37)" stroke-width="0.6"/><path d="M634.49 314.05 L645.99 307.41 L644.31 304.78 L632.82 311.42 Z" fill="rgb(255,255,37)" stroke="rgb(255,255,37)" stroke-width="0.6"/><path d="M632.82 311.42 L644.31 304.78 L642.43 302.36 L630.93 309.00 Z" fill="rgb(255,255,30)" stroke="rgb(255,255,30)" stroke-width="0.6"/><path d="M630.93 309.00 L642.43 302.36 L640.39 300.21 L628.89 306.85 Z" fill="rgb(255,255,20)" stroke="rgb(255,255,20)" stroke-width="0.6"/><path d="M628.89 306.85 L640.39 300.21 L638.24 298.38 L626.75 305.01 Z" fill="rgb(255,255,11)" stroke="rgb(255,255,11)" stroke-width="0.6"/><path d="M649.94 318.64 L661.44 312.00 L660.93 309.22 L649.43 315.86 Z" fill="rgb(255,255,11)" stroke="rgb(255,255,11)" stroke-width="0.6"/><path d="M649.43 315.86 L660.93 309.22 L660.08 306.38 L648.58 313.01 Z" fill="rgb(255,255,20)" stroke="rgb(255,255,20)" stroke-width="0.6"/><path d="M648.58 313.01 L660.08 306.38 L658.93 303.54 L647.43 310.17 Z" fill="rgb(255,255,30)" stroke="rgb(255,255,30)" stroke-width="0.6"/><path d="M647.43 310.17 L658.93 303.54 L657.49 300.77 L645.99 307.41 Z" fill="rgb(255,255,37)" stroke="rgb(255,255,37)" stroke-width="0.6"/><path d="M645.99 307.41 L657.49 300.77 L655.81 298.14 L644.31 304.78 Z" fill="rgb(255,255,37)" stroke="rgb(255,255,37)" stroke-width="0.6"/><path d="M644.31 304.78 L655.81 298.14 L653.93 295.72 L642.43 302.36 Z" fill="rgb(255,255,30)" stroke="rgb(255,255,30)" stroke-width="0.6"/><path d="M642.43 302.36 L653.93 295.72 L651.89 293.57 L640.39 300.21 Z" fill="rgb(255,255,20)" stroke="rgb(255,255,20)" stroke-width="0.6"/><path d="M640.39 300.21 L651.89 293.57 L649.74 291.74 L638.24 298.38 Z" fill="rgb(255,255,11)" stroke="rgb(255,255,11)" stroke-width="0.6"/><path d="M661.44 312.00 L672.94 305.36 L672.42 302.58 L660.93 309.22 Z" fill="rgb(255,255,11)" stroke="rgb(255,255,11)" stroke-width="0.6"/><path d="M660.93 309.22 L672.42 302.58 L671.58 299.74 L660.08 306.38 Z" fill="rgb(255,255,20)" stroke="rgb(255,255,20)" stroke-width="0.6"/><path d="M660.08 306.38 L671.58 299.74 L670.43 296.90 L658.93 303.54 Z" fill="rgb(255,255,30)" stroke="rgb(255,255,30)" stroke-width="0.6"/><path d="M658.93 303.54 L670.43 296.90 L668.99 294.13 L657.49 300.77 Z" fill="rgb(255,255,37)" stroke="rgb(255,255,37)" stroke-width="0.6"/><path d="M657.49 300.77 L668.99 294.13 L667.31 291.50 L655.81 298.14 Z" fill="rgb(255,255,37)" stroke="rgb(255,255,37)" stroke-width="0.6"/><path d="M655.81 298.14 L667.31 291.50 L665.43 289.09 L653.93 295.72 Z" fill="rgb(255,255,30)" stroke="rgb(255,255,30)" stroke-width="0.6"/><path d="M653.93 295.72 L665.43 289.09 L663.39 286.93 L651.89 293.57 Z" fill="rgb(255,255,20)" stroke="rgb(255,255,20)" stroke-width="0.6"/><path d="M651.89 293.57 L663.39 286.93 L661.24 285.10 L649.74 291.74 Z" fill="rgb(255,255,11)" stroke="rgb(255,255,11)" stroke-width="0.6"/><path d="M672.94 305.36 L684.44 298.72 L683.92 295.94 L672.42 302.58 Z" fill="rgb(255,255,11)" stroke="rgb(255,255,11)" stroke-width="0.6"/><path d="M672.42 302.58 L683.92 295.94 L683.08 293.10 L671.58 299.74 Z" fill="rgb(255,255,20)" stroke="rgb(255,255,20)" stroke-width="0.6"/><path d="M671.58 299.74 L683.08 293.10 L681.93 290.26 L670.43 296.90 Z" fill="rgb(255,255,30)" stroke="rgb(255,255,30)" stroke-width="0.6"/><path d="M670.43 296.90 L681.93 290.26 L680.49 287.49 L668.99 294.13 Z" fill="rgb(255,255,37)" stroke="rgb(255,255,37)" stroke-width="0.6"/><path d="M668.99 294.13 L680.49 287.49 L678.81 284.87 L667.31 291.50 Z" fill="rgb(255,255,37)" stroke="rgb(255,255,37)" stroke-width="0.6"/><path d="M667.31 291.50 L678.81 284.87 L676.93 282.45 L665.43 289.09 Z" fill="rgb(255,255,30)" stroke="rgb(255,255,30)" stroke-width="0.6"/><path d="M665.43 289.09 L676.93 282.45 L674.89 280.29 L663.39 286.93 Z" fill="rgb(255,255,20)" stroke="rgb(255,255,20)" stroke-width="0.6"/><path d="M663.39 286.93 L674.89 280.29 L672.74 278.46 L661.24 285.10 Z" fill="rgb(255,255,11)" stroke="rgb(255,255,11)" stroke-width="0.6"/><path d="M684.44 298.72 L695.94 292.08 L695.42 289.30 L683.92 295.94 Z" fill="rgb(255,255,11)" stroke="rgb(255,255,11)" stroke-width="0.6"/><path d="M683.92 295.94 L695.42 289.30 L694.58 286.46 L683.08 293.10 Z" fill="rgb(255,255,20)" stroke="rgb(255,255,20)" stroke-width="0.6"/><path d="M683.08 293.10 L694.58 286.46 L693.42 283.62 L681.93 290.26 Z" fill="rgb(255,255,30)" stroke="rgb(255,255,30)" stroke-width="0.6"/><path d="M681.93 290.26 L693.42 283.62 L691.99 280.85 L680.49 287.49 Z" fill="rgb(255,255,37)" stroke="rgb(255,255,37)" stroke-width="0.6"/><path d="M680.49 287.49 L691.99 280.85 L690.31 278.23 L678.81 284.87 Z" fill="rgb(255,255,37)" stroke="rgb(255,255,37)" stroke-width="0.6"/><path d="M678.81 284.87 L690.31 278.23 L688.43 275.81 L676.93 282.45 Z" fill="rgb(255,255,30)" stroke="rgb(255,255,30)" stroke-width="0.6"/><path d="M676.93 282.45 L688.43 275.81 L686.39 273.65 L674.89 280.29 Z" fill="rgb(255,255,20)" stroke="rgb(255,255,20)" stroke-width="0.6"/><path d="M674.89 280.29 L686.39 273.65 L684.24 271.82 L672.74 278.46 Z" fill="rgb(255,255,11)" stroke="rgb(255,255,11)" stroke-width="0.6"/><path d="M608.44 337.61 L610.43 337.82 L610.46 335.14 L608.50 334.93 Z" fill="rgb(255,255,50)" stroke="rgb(255,255,50)" stroke-width="0.6"/><path d="M608.50 334.93 L610.46 335.14 L610.56 332.24 L608.67 332.04 Z" fill="rgb(255,255,94)" stroke="rgb(255,255,94)" stroke-width="0.6"/><path d="M608.67 332.04 L610.56 332.24 L610.72 329.20 L608.94 329.01 Z" fill="rgb(255,255,141)" stroke="rgb(255,255,141)" stroke-width="0.6"/><path d="M608.94 329.01 L610.72 329.20 L610.93 326.10 L609.32 325.92 Z" fill="rgb(255,255,171)" stroke="rgb(255,255,171)" stroke-width="0.6"/><path d="M609.32 325.92 L610.93 326.10 L611.20 323.00 L609.79 322.85 Z" fill="rgb(255,255,170)" stroke="rgb(255,255,170)" stroke-width="0.6"/><path d="M609.79 322.85 L611.20 323.00 L611.51 319.98 L610.34 319.86 Z" fill="rgb(255,255,139)" stroke="rgb(255,255,139)" stroke-width="0.6"/><path d="M610.34 319.86 L611.51 319.98 L611.86 317.12 L610.95 317.03 Z" fill="rgb(255,255,91)" stroke="rgb(255,255,91)" stroke-width="0.6"/><path d="M610.95 317.03 L611.86 317.12 L612.24 314.50 L611.62 314.43 Z" fill="rgb(255,255,48)" stroke="rgb(255,255,48)" stroke-width="0.6"/><path d="M611.62 314.43 L612.24 314.50 L612.64 312.16 L612.32 312.13 Z" fill="rgb(255,255,19)" stroke="rgb(255,255,19)" stroke-width="0.6"/><path d="M612.32 312.13 L612.64 312.16 L613.04 310.18 L613.04 310.18 Z" fill="rgb(255,255,5)" stroke="rgb(255,255,5)" stroke-width="0.6"/><path d="M610.43 337.82 L612.45 337.92 L612.46 335.23 L610.46 335.14 Z" fill="rgb(255,255,55)" stroke="rgb(255,255,55)" stroke-width="0.6"/><path d="M610.46 335.14 L612.46 335.23 L612.48 332.33 L610.56 332.24 Z" fill="rgb(255,255,104)" stroke="rgb(255,255,104)" stroke-width="0.6"/><path d="M610.56 332.24 L612.48 332.33 L612.52 329.29 L610.72 329.20 Z" fill="rgb(255,255,153)" stroke="rgb(255,255,153)" stroke-width="0.6"/><path d="M610.72 329.20 L612.52 329.29 L612.57 326.17 L610.93 326.10 Z" fill="rgb(255,255,185)" stroke="rgb(255,255,185)" stroke-width="0.6"/><path d="M610.93 326.10 L612.57 326.17 L612.63 323.06 L611.20 323.00 Z" fill="rgb(255,255,182)" stroke="rgb(255,255,182)" stroke-width="0.6"/><path d="M611.20 323.00 L612.63 323.06 L612.70 320.04 L611.51 319.98 Z" fill="rgb(255,255,147)" stroke="rgb(255,255,147)" stroke-width="0.6"/><path d="M611.51 319.98 L612.70 320.04 L612.78 317.17 L611.86 317.12 Z" fill="rgb(255,255,96)" stroke="rgb(255,255,96)" stroke-width="0.6"/><path d="M611.86 317.12 L612.78 317.17 L612.86 314.53 L612.24 314.50 Z" fill="rgb(255,255,50)" stroke="rgb(255,255,50)" stroke-width="0.6"/><path d="M612.24 314.50 L612.86 314.53 L612.95 312.18 L612.64 312.16 Z" fill="rgb(255,255,19)" stroke="rgb(255,255,19)" stroke-width="0.6"/><path d="M612.64 312.16 L612.95 312.18 L613.04 310.18 L613.04 310.18 Z" fill="rgb(255,255,5)" stroke="rgb(255,255,5)" stroke-width="0.6"/><path d="M612.45 337.92 L614.48 337.89 L614.46 335.21 L612.46 335.23 Z" fill="rgb(255,255,57)" stroke="rgb(255,255,57)" stroke-width="0.6"/><path d="M612.46 335.23 L614.46 335.21 L614.41 332.31 L612.48 332.33 Z" fill="rgb(255,255,106)" stroke="rgb(255,255,106)" stroke-width="0.6"/><path d="M612.48 332.33 L614.41 332.31 L614.32 329.26 L612.52 329.29 Z" fill="rgb(255,255,156)" stroke="rgb(255,255,156)" stroke-width="0.6"/><path d="M612.52 329.29 L614.32 329.26 L614.21 326.15 L612.57 326.17 Z" fill="rgb(255,255,188)" stroke="rgb(255,255,188)" stroke-width="0.6"/><path d="M612.57 326.17 L614.21 326.15 L614.06 323.04 L612.63 323.06 Z" fill="rgb(255,255,185)" stroke="rgb(255,255,185)" stroke-width="0.6"/><path d="M612.63 323.06 L614.06 323.04 L613.89 320.02 L612.70 320.04 Z" fill="rgb(255,255,149)" stroke="rgb(255,255,149)" stroke-width="0.6"/><path d="M612.70 320.04 L613.89 320.02 L613.70 317.16 L612.78 317.17 Z" fill="rgb(255,255,97)" stroke="rgb(255,255,97)" stroke-width="0.6"/><path d="M612.78 317.17 L613.70 317.16 L613.49 314.52 L612.86 314.53 Z" fill="rgb(255,255,50)" stroke="rgb(255,255,50)" stroke-width="0.6"/><path d="M612.86 314.53 L613.49 314.52 L613.27 312.18 L612.95 312.18 Z" fill="rgb(255,255,20)" stroke="rgb(255,255,20)" stroke-width="0.6"/><path d="M612.95 312.18 L613.27 312.18 L613.04 310.18 L613.04 310.18 Z" fill="rgb(255,255,5)" stroke="rgb(255,255,5)" stroke-width="0.6"/><path d="M614.48 337.89 L616.49 337.75 L616.45 335.07 L614.46 335.21 Z" fill="rgb(255,255,54)" stroke="rgb(255,255,54)" stroke-width="0.6"/><path d="M614.46 335.21 L616.45 335.07 L616.32 332.17 L614.41 332.31 Z" fill="rgb(255,255,100)" stroke="rgb(255,255,100)" stroke-width="0.6"/><path d="M614.41 332.31 L616.32 332.17 L616.12 329.14 L614.32 329.26 Z" fill="rgb(255,255,149)" stroke="rgb(255,255,149)" stroke-width="0.6"/><path d="M614.32 329.26 L616.12 329.14 L615.83 326.04 L614.21 326.15 Z" fill="rgb(255,255,180)" stroke="rgb(255,255,180)" stroke-width="0.6"/><path d="M614.21 326.15 L615.83 326.04 L615.48 322.94 L614.06 323.04 Z" fill="rgb(255,255,178)" stroke="rgb(255,255,178)" stroke-width="0.6"/><path d="M614.06 323.04 L615.48 322.94 L615.07 319.94 L613.89 320.02 Z" fill="rgb(255,255,144)" stroke="rgb(255,255,144)" stroke-width="0.6"/><path d="M613.89 320.02 L615.07 319.94 L614.61 317.09 L613.70 317.16 Z" fill="rgb(255,255,95)" stroke="rgb(255,255,95)" stroke-width="0.6"/><path d="M613.70 317.16 L614.61 317.09 L614.11 314.47 L613.49 314.52 Z" fill="rgb(255,255,49)" stroke="rgb(255,255,49)" stroke-width="0.6"/><path d="M613.49 314.52 L614.11 314.47 L613.58 312.15 L613.27 312.18 Z" fill="rgb(255,255,19)" stroke="rgb(255,255,19)" stroke-width="0.6"/><path d="M613.27 312.18 L613.58 312.15 L613.04 310.18 L613.04 310.18 Z" fill="rgb(255,255,5)" stroke="rgb(255,255,5)" stroke-width="0.6"/><path d="M616.49 337.75 L618.47 337.49 L618.40 334.81 L616.45 335.07 Z" fill="rgb(255,255,47)" stroke="rgb(255,255,47)" stroke-width="0.6"/><path d="M616.45 335.07 L618.40 334.81 L618.20 331.92 L616.32 332.17 Z" fill="rgb(255,255,89)" stroke="rgb(255,255,89)" stroke-width="0.6"/><path d="M616.32 332.17 L618.20 331.92 L617.88 328.90 L616.12 329.14 Z" fill="rgb(255,255,134)" stroke="rgb(255,255,134)" stroke-width="0.6"/><path d="M616.12 329.14 L617.88 328.90 L617.43 325.82 L615.83 326.04 Z" fill="rgb(255,255,163)" stroke="rgb(255,255,163)" stroke-width="0.6"/><path d="M615.83 326.04 L617.43 325.82 L616.88 322.76 L615.48 322.94 Z" fill="rgb(255,255,163)" stroke="rgb(255,255,163)" stroke-width="0.6"/><path d="M615.48 322.94 L616.88 322.76 L616.23 319.78 L615.07 319.94 Z" fill="rgb(255,255,133)" stroke="rgb(255,255,133)" stroke-width="0.6"/><path d="M615.07 319.94 L616.23 319.78 L615.51 316.97 L614.61 317.09 Z" fill="rgb(255,255,88)" stroke="rgb(255,255,88)" stroke-width="0.6"/><path d="M614.61 317.09 L615.51 316.97 L614.72 314.39 L614.11 314.47 Z" fill="rgb(255,255,47)" stroke="rgb(255,255,47)" stroke-width="0.6"/><path d="M614.11 314.47 L614.72 314.39 L613.89 312.11 L613.58 312.15 Z" fill="rgb(255,255,19)" stroke="rgb(255,255,19)" stroke-width="0.6"/><path d="M613.58 312.15 L613.89 312.11 L613.04 310.18 L613.04 310.18 Z" fill="rgb(255,255,5)" stroke="rgb(255,255,5)" stroke-width="0.6"/><path d="M618.47 337.49 L620.39 337.11 L620.30 334.44 L618.40 334.81 Z" fill="rgb(255,255,38)" stroke="rgb(255,255,38)" stroke-width="0.6"/><path d="M618.40 334.81 L620.30 334.44 L620.03 331.57 L618.20 331.92 Z" fill="rgb(255,255,73)" stroke="rgb(255,255,73)" stroke-width="0.6"/><path d="M618.20 331.92 L620.03 331.57 L619.59 328.57 L617.88 328.90 Z" fill="rgb(255,255,112)" stroke="rgb(255,255,112)" stroke-width="0.6"/><path d="M617.88 328.90 L619.59 328.57 L618.98 325.52 L617.43 325.82 Z" fill="rgb(255,255,139)" stroke="rgb(255,255,139)" stroke-width="0.6"/><path d="M617.43 325.82 L618.98 325.52 L618.24 322.49 L616.88 322.76 Z" fill="rgb(255,255,141)" stroke="rgb(255,255,141)" stroke-width="0.6"/><path d="M616.88 322.76 L618.24 322.49 L617.36 319.56 L616.23 319.78 Z" fill="rgb(255,255,118)" stroke="rgb(255,255,118)" stroke-width="0.6"/><path d="M616.23 319.78 L617.36 319.56 L616.38 316.80 L615.51 316.97 Z" fill="rgb(255,255,80)" stroke="rgb(255,255,80)" stroke-width="0.6"/><path d="M615.51 316.97 L616.38 316.80 L615.31 314.28 L614.72 314.39 Z" fill="rgb(255,255,43)" stroke="rgb(255,255,43)" stroke-width="0.6"/><path d="M614.72 314.39 L615.31 314.28 L614.19 312.05 L613.89 312.11 Z" fill="rgb(255,255,18)" stroke="rgb(255,255,18)" stroke-width="0.6"/><path d="M613.89 312.11 L614.19 312.05 L613.04 310.18 L613.04 310.18 Z" fill="rgb(255,255,5)" stroke="rgb(255,255,5)" stroke-width="0.6"/><path d="M620.39 337.11 L622.23 336.62 L622.12 333.96 L620.30 334.44 Z" fill="rgb(255,255,28)" stroke="rgb(255,255,28)" stroke-width="0.6"/><path d="M620.30 334.44 L622.12 333.96 L621.78 331.10 L620.03 331.57 Z" fill="rgb(255,255,56)" stroke="rgb(255,255,56)" stroke-width="0.6"/><path d="M620.03 331.57 L621.78 331.10 L621.23 328.14 L619.59 328.57 Z" fill="rgb(255,255,88)" stroke="rgb(255,255,88)" stroke-width="0.6"/><path d="M619.59 328.57 L621.23 328.14 L620.48 325.13 L618.98 325.52 Z" fill="rgb(255,255,112)" stroke="rgb(255,255,112)" stroke-width="0.6"/><path d="M618.98 325.52 L620.48 325.13 L619.54 322.15 L618.24 322.49 Z" fill="rgb(255,255,116)" stroke="rgb(255,255,116)" stroke-width="0.6"/><path d="M618.24 322.49 L619.54 322.15 L618.44 319.28 L617.36 319.56 Z" fill="rgb(255,255,99)" stroke="rgb(255,255,99)" stroke-width="0.6"/><path d="M617.36 319.56 L618.44 319.28 L617.21 316.58 L616.38 316.80 Z" fill="rgb(255,255,69)" stroke="rgb(255,255,69)" stroke-width="0.6"/><path d="M616.38 316.80 L617.21 316.58 L615.88 314.13 L615.31 314.28 Z" fill="rgb(255,255,38)" stroke="rgb(255,255,38)" stroke-width="0.6"/><path d="M615.31 314.28 L615.88 314.13 L614.48 311.98 L614.19 312.05 Z" fill="rgb(255,255,16)" stroke="rgb(255,255,16)" stroke-width="0.6"/><path d="M614.19 312.05 L614.48 311.98 L613.04 310.18 L613.04 310.18 Z" fill="rgb(255,255,5)" stroke="rgb(255,255,5)" stroke-width="0.6"/><path d="M622.23 336.62 L623.98 336.03 L623.84 333.37 L622.12 333.96 Z" fill="rgb(255,255,19)" stroke="rgb(255,255,19)" stroke-width="0.6"/><path d="M622.12 333.96 L623.84 333.37 L623.44 330.54 L621.78 331.10 Z" fill="rgb(255,255,39)" stroke="rgb(255,255,39)" stroke-width="0.6"/><path d="M621.78 331.10 L623.44 330.54 L622.79 327.61 L621.23 328.14 Z" fill="rgb(255,255,64)" stroke="rgb(255,255,64)" stroke-width="0.6"/><path d="M621.23 328.14 L622.79 327.61 L621.89 324.65 L620.48 325.13 Z" fill="rgb(255,255,84)" stroke="rgb(255,255,84)" stroke-width="0.6"/><path d="M620.48 325.13 L621.89 324.65 L620.78 321.73 L619.54 322.15 Z" fill="rgb(255,255,90)" stroke="rgb(255,255,90)" stroke-width="0.6"/><path d="M619.54 322.15 L620.78 321.73 L619.47 318.93 L618.44 319.28 Z" fill="rgb(255,255,80)" stroke="rgb(255,255,80)" stroke-width="0.6"/><path d="M618.44 319.28 L619.47 318.93 L618.01 316.31 L617.21 316.58 Z" fill="rgb(255,255,57)" stroke="rgb(255,255,57)" stroke-width="0.6"/><path d="M617.21 316.58 L618.01 316.31 L616.42 313.94 L615.88 314.13 Z" fill="rgb(255,255,33)" stroke="rgb(255,255,33)" stroke-width="0.6"/><path d="M615.88 314.13 L616.42 313.94 L614.76 311.88 L614.48 311.98 Z" fill="rgb(255,255,15)" stroke="rgb(255,255,15)" stroke-width="0.6"/><path d="M614.48 311.98 L614.76 311.88 L613.04 310.18 L613.04 310.18 Z" fill="rgb(255,255,5)" stroke="rgb(255,255,5)" stroke-width="0.6"/><path d="M623.98 336.03 L625.61 335.34 L625.46 332.69 L623.84 333.37 Z" fill="rgb(255,255,11)" stroke="rgb(255,255,11)" stroke-width="0.6"/><path d="M623.84 333.37 L625.46 332.69 L625.00 329.88 L623.44 330.54 Z" fill="rgb(255,255,25)" stroke="rgb(255,255,25)" stroke-width="0.6"/><path d="M623.44 330.54 L625.00 329.88 L624.24 326.99 L622.79 327.61 Z" fill="rgb(255,255,43)" stroke="rgb(255,255,43)" stroke-width="0.6"/><path d="M622.79 327.61 L624.24 326.99 L623.21 324.09 L621.89 324.65 Z" fill="rgb(255,255,59)" stroke="rgb(255,255,59)" stroke-width="0.6"/><path d="M621.89 324.65 L623.21 324.09 L621.93 321.24 L620.78 321.73 Z" fill="rgb(255,255,66)" stroke="rgb(255,255,66)" stroke-width="0.6"/><path d="M620.78 321.73 L621.93 321.24 L620.43 318.52 L619.47 318.93 Z" fill="rgb(255,255,61)" stroke="rgb(255,255,61)" stroke-width="0.6"/><path d="M619.47 318.93 L620.43 318.52 L618.75 316.00 L618.01 316.31 Z" fill="rgb(255,255,46)" stroke="rgb(255,255,46)" stroke-width="0.6"/><path d="M618.01 316.31 L618.75 316.00 L616.93 313.73 L616.42 313.94 Z" fill="rgb(255,255,28)" stroke="rgb(255,255,28)" stroke-width="0.6"/><path d="M616.42 313.94 L616.93 313.73 L615.01 311.78 L614.76 311.88 Z" fill="rgb(255,255,13)" stroke="rgb(255,255,13)" stroke-width="0.6"/><path d="M614.76 311.88 L615.01 311.78 L613.04 310.18 L613.04 310.18 Z" fill="rgb(255,255,5)" stroke="rgb(255,255,5)" stroke-width="0.6"/><path d="M625.61 335.34 L627.12 334.56 L626.94 331.91 L625.46 332.69 Z" fill="rgb(255,255,6)" stroke="rgb(255,255,6)" stroke-width="0.6"/><path d="M625.46 332.69 L626.94 331.91 L626.43 329.14 L625.00 329.88 Z" fill="rgb(255,255,14)" stroke="rgb(255,255,14)" stroke-width="0.6"/><path d="M625.00 329.88 L626.43 329.14 L625.58 326.29 L624.24 326.99 Z" fill="rgb(255,255,26)" stroke="rgb(255,255,26)" stroke-width="0.6"/><path d="M624.24 326.99 L625.58 326.29 L624.43 323.45 L623.21 324.09 Z" fill="rgb(255,255,38)" stroke="rgb(255,255,38)" stroke-width="0.6"/><path d="M623.21 324.09 L624.43 323.45 L622.99 320.69 L621.93 321.24 Z" fill="rgb(255,255,46)" stroke="rgb(255,255,46)" stroke-width="0.6"/><path d="M621.93 321.24 L622.99 320.69 L621.32 318.06 L620.43 318.52 Z" fill="rgb(255,255,44)" stroke="rgb(255,255,44)" stroke-width="0.6"/><path d="M620.43 318.52 L621.32 318.06 L619.43 315.64 L618.75 316.00 Z" fill="rgb(255,255,35)" stroke="rgb(255,255,35)" stroke-width="0.6"/><path d="M618.75 316.00 L619.43 315.64 L617.39 313.49 L616.93 313.73 Z" fill="rgb(255,255,23)" stroke="rgb(255,255,23)" stroke-width="0.6"/><path d="M616.93 313.73 L617.39 313.49 L615.25 311.65 L615.01 311.78 Z" fill="rgb(255,255,11)" stroke="rgb(255,255,11)" stroke-width="0.6"/><path d="M695.94 292.08 L697.28 291.22 L696.72 288.48 L695.42 289.30 Z" fill="rgb(255,255,7)" stroke="rgb(255,255,7)" stroke-width="0.6"/><path d="M695.42 289.30 L696.72 288.48 L695.79 285.68 L694.58 286.46 Z" fill="rgb(255,255,15)" stroke="rgb(255,255,15)" stroke-width="0.6"/><path d="M694.58 286.46 L695.79 285.68 L694.52 282.92 L693.42 283.62 Z" fill="rgb(255,255,23)" stroke="rgb(255,255,23)" stroke-width="0.6"/><path d="M693.42 283.62 L694.52 282.92 L692.95 280.24 L691.99 280.85 Z" fill="rgb(255,255,29)" stroke="rgb(255,255,29)" stroke-width="0.6"/><path d="M691.99 280.85 L692.95 280.24 L691.11 277.72 L690.31 278.23 Z" fill="rgb(255,255,30)" stroke="rgb(255,255,30)" stroke-width="0.6"/><path d="M690.31 278.23 L691.11 277.72 L689.05 275.41 L688.43 275.81 Z" fill="rgb(255,255,26)" stroke="rgb(255,255,26)" stroke-width="0.6"/><path d="M688.43 275.81 L689.05 275.41 L686.81 273.39 L686.39 273.65 Z" fill="rgb(255,255,18)" stroke="rgb(255,255,18)" stroke-width="0.6"/><path d="M686.39 273.65 L686.81 273.39 L684.45 271.68 L684.24 271.82 Z" fill="rgb(255,255,10)" stroke="rgb(255,255,10)" stroke-width="0.6"/><path d="M696.72 288.48 L697.85 287.58 L696.86 284.84 L695.79 285.68 Z" fill="rgb(255,255,7)" stroke="rgb(255,255,7)" stroke-width="0.6"/><path d="M695.79 285.68 L696.86 284.84 L695.49 282.15 L694.52 282.92 Z" fill="rgb(255,255,13)" stroke="rgb(255,255,13)" stroke-width="0.6"/><path d="M694.52 282.92 L695.49 282.15 L693.80 279.57 L692.95 280.24 Z" fill="rgb(255,255,18)" stroke="rgb(255,255,18)" stroke-width="0.6"/><path d="M692.95 280.24 L693.80 279.57 L691.81 277.16 L691.11 277.72 Z" fill="rgb(255,255,20)" stroke="rgb(255,255,20)" stroke-width="0.6"/><path d="M691.11 277.72 L691.81 277.16 L689.59 274.98 L689.05 275.41 Z" fill="rgb(255,255,18)" stroke="rgb(255,255,18)" stroke-width="0.6"/><path d="M689.05 275.41 L689.59 274.98 L687.18 273.09 L686.81 273.39 Z" fill="rgb(255,255,14)" stroke="rgb(255,255,14)" stroke-width="0.6"/><path d="M686.81 273.39 L687.18 273.09 L684.64 271.54 L684.45 271.68 Z" fill="rgb(255,255,8)" stroke="rgb(255,255,8)" stroke-width="0.6"/><path d="M696.86 284.84 L697.77 283.94 L696.32 281.34 L695.49 282.15 Z" fill="rgb(255,255,6)" stroke="rgb(255,255,6)" stroke-width="0.6"/><path d="M695.49 282.15 L696.32 281.34 L694.52 278.86 L693.80 279.57 Z" fill="rgb(255,255,10)" stroke="rgb(255,255,10)" stroke-width="0.6"/><path d="M693.80 279.57 L694.52 278.86 L692.42 276.57 L691.81 277.16 Z" fill="rgb(255,255,12)" stroke="rgb(255,255,12)" stroke-width="0.6"/><path d="M691.81 277.16 L692.42 276.57 L690.06 274.53 L689.59 274.98 Z" fill="rgb(255,255,12)" stroke="rgb(255,255,12)" stroke-width="0.6"/><path d="M689.59 274.98 L690.06 274.53 L687.50 272.78 L687.18 273.09 Z" fill="rgb(255,255,10)" stroke="rgb(255,255,10)" stroke-width="0.6"/><path d="M687.18 273.09 L687.50 272.78 L684.80 271.38 L684.64 271.54 Z" fill="rgb(255,255,7)" stroke="rgb(255,255,7)" stroke-width="0.6"/><path d="M696.32 281.34 L697.00 280.47 L695.12 278.10 L694.52 278.86 Z" fill="rgb(255,255,5)" stroke="rgb(255,255,5)" stroke-width="0.6"/><path d="M694.52 278.86 L695.12 278.10 L692.91 275.94 L692.42 276.57 Z" fill="rgb(255,255,7)" stroke="rgb(255,255,7)" stroke-width="0.6"/><path d="M692.42 276.57 L692.91 275.94 L690.44 274.04 L690.06 274.53 Z" fill="rgb(255,255,8)" stroke="rgb(255,255,8)" stroke-width="0.6"/><path d="M690.06 274.53 L690.44 274.04 L687.76 272.45 L687.50 272.78 Z" fill="rgb(255,255,7)" stroke="rgb(255,255,7)" stroke-width="0.6"/><path d="M687.50 272.78 L687.76 272.45 L684.93 271.21 L684.80 271.38 Z" fill="rgb(255,255,5)" stroke="rgb(255,255,5)" stroke-width="0.6"/><path d="M692.91 275.94 L693.30 275.29 L690.73 273.54 L690.44 274.04 Z" fill="rgb(255,255,5)" stroke="rgb(255,255,5)" stroke-width="0.6"/><path d="M690.44 274.04 L690.73 273.54 L687.96 272.11 L687.76 272.45 Z" fill="rgb(255,255,5)" stroke="rgb(255,255,5)" stroke-width="0.6"/><path d="M486.18 728.56 L490.29 730.18 L490.43 732.61 L486.31 730.98 Z" fill="rgb(255,255,5)" stroke="rgb(255,255,5)" stroke-width="0.6"/><path d="M490.29 730.18 L494.45 731.77 L494.59 734.20 L490.43 732.61 Z" fill="rgb(255,255,5)" stroke="rgb(255,255,5)" stroke-width="0.6"/><path d="M494.45 731.77 L498.65 733.33 L498.78 735.75 L494.59 734.20 Z" fill="rgb(255,255,5)" stroke="rgb(255,255,5)" stroke-width="0.6"/><path d="M498.65 733.33 L502.88 734.85 L503.01 737.28 L498.78 735.75 Z" fill="rgb(255,255,6)" stroke="rgb(255,255,6)" stroke-width="0.6"/><path d="M502.88 734.85 L507.15 736.35 L507.27 738.77 L503.01 737.28 Z" fill="rgb(255,255,6)" stroke="rgb(255,255,6)" stroke-width="0.6"/><path d="M507.15 736.35 L511.45 737.80 L511.57 740.22 L507.27 738.77 Z" fill="rgb(255,255,7)" stroke="rgb(255,255,7)" stroke-width="0.6"/><path d="M511.45 737.80 L515.79 739.22 L515.91 741.64 L511.57 740.22 Z" fill="rgb(255,255,7)" stroke="rgb(255,255,7)" stroke-width="0.6"/><path d="M515.79 739.22 L520.16 740.61 L520.27 743.03 L515.91 741.64 Z" fill="rgb(255,255,8)" stroke="rgb(255,255,8)" stroke-width="0.6"/><path d="M520.16 740.61 L524.56 741.96 L524.67 744.38 L520.27 743.03 Z" fill="rgb(255,255,8)" stroke="rgb(255,255,8)" stroke-width="0.6"/><path d="M524.56 741.96 L529.00 743.28 L529.11 745.69 L524.67 744.38 Z" fill="rgb(255,255,9)" stroke="rgb(255,255,9)" stroke-width="0.6"/><path d="M529.00 743.28 L533.46 744.56 L533.57 746.98 L529.11 745.69 Z" fill="rgb(255,255,9)" stroke="rgb(255,255,9)" stroke-width="0.6"/><path d="M533.46 744.56 L537.96 745.81 L538.06 748.22 L533.57 746.98 Z" fill="rgb(255,255,10)" stroke="rgb(255,255,10)" stroke-width="0.6"/><path d="M537.96 745.81 L542.49 747.02 L542.59 749.43 L538.06 748.22 Z" fill="rgb(255,255,10)" stroke="rgb(255,255,10)" stroke-width="0.6"/><path d="M542.49 747.02 L547.04 748.19 L547.14 750.60 L542.59 749.43 Z" fill="rgb(255,255,11)" stroke="rgb(255,255,11)" stroke-width="0.6"/><path d="M547.04 748.19 L551.62 749.33 L551.72 751.74 L547.14 750.60 Z" fill="rgb(255,255,11)" stroke="rgb(255,255,11)" stroke-width="0.6"/><path d="M551.62 749.33 L556.23 750.43 L556.32 752.84 L551.72 751.74 Z" fill="rgb(255,255,12)" stroke="rgb(255,255,12)" stroke-width="0.6"/><path d="M556.23 750.43 L560.87 751.49 L560.95 753.90 L556.32 752.84 Z" fill="rgb(255,255,13)" stroke="rgb(255,255,13)" stroke-width="0.6"/><path d="M560.87 751.49 L565.53 752.52 L565.61 754.93 L560.95 753.90 Z" fill="rgb(255,255,13)" stroke="rgb(255,255,13)" stroke-width="0.6"/><path d="M565.53 752.52 L570.21 753.51 L570.29 755.92 L565.61 754.93 Z" fill="rgb(255,255,14)" stroke="rgb(255,255,14)" stroke-width="0.6"/><path d="M570.21 753.51 L574.92 754.46 L575.00 756.87 L570.29 755.92 Z" fill="rgb(255,255,14)" stroke="rgb(255,255,14)" stroke-width="0.6"/><path d="M574.92 754.46 L579.65 755.37 L579.72 757.78 L575.00 756.87 Z" fill="rgb(255,255,15)" stroke="rgb(255,255,15)" stroke-width="0.6"/><path d="M579.65 755.37 L584.40 756.25 L584.47 758.66 L579.72 757.78 Z" fill="rgb(255,255,15)" stroke="rgb(255,255,15)" stroke-width="0.6"/><path d="M584.40 756.25 L589.17 757.09 L589.24 759.50 L584.47 758.66 Z" fill="rgb(255,255,16)" stroke="rgb(255,255,16)" stroke-width="0.6"/><path d="M589.17 757.09 L593.96 757.89 L594.03 760.30 L589.24 759.50 Z" fill="rgb(255,255,17)" stroke="rgb(255,255,17)" stroke-width="0.6"/><path d="M589.24 759.50 L594.03 760.30 L594.22 762.37 L589.45 761.57 Z" fill="rgb(255,255,5)" stroke="rgb(255,255,5)" stroke-width="0.6"/><path d="M593.96 757.89 L598.77 758.65 L598.83 761.06 L594.03 760.30 Z" fill="rgb(255,255,17)" stroke="rgb(255,255,17)" stroke-width="0.6"/><path d="M594.03 760.30 L598.83 761.06 L599.02 763.13 L594.22 762.37 Z" fill="rgb(255,255,5)" stroke="rgb(255,255,5)" stroke-width="0.6"/><path d="M598.77 758.65 L603.60 759.38 L603.66 761.78 L598.83 761.06 Z" fill="rgb(255,255,18)" stroke="rgb(255,255,18)" stroke-width="0.6"/><path d="M598.83 761.06 L603.66 761.78 L603.83 763.85 L599.02 763.13 Z" fill="rgb(255,255,5)" stroke="rgb(255,255,5)" stroke-width="0.6"/><path d="M603.60 759.38 L608.44 760.06 L608.50 762.47 L603.66 761.78 Z" fill="rgb(255,255,18)" stroke="rgb(255,255,18)" stroke-width="0.6"/><path d="M603.66 761.78 L608.50 762.47 L608.67 764.54 L603.83 763.85 Z" fill="rgb(255,255,5)" stroke="rgb(255,255,5)" stroke-width="0.6"/><path d="M608.44 760.06 L610.43 760.28 L610.46 762.68 L608.50 762.47 Z" fill="rgb(255,255,20)" stroke="rgb(255,255,20)" stroke-width="0.6"/><path d="M608.50 762.47 L610.46 762.68 L610.56 764.74 L608.67 764.54 Z" fill="rgb(255,255,6)" stroke="rgb(255,255,6)" stroke-width="0.6"/><path d="M610.43 760.28 L612.45 760.37 L612.46 762.77 L610.46 762.68 Z" fill="rgb(255,255,23)" stroke="rgb(255,255,23)" stroke-width="0.6"/><path d="M610.46 762.68 L612.46 762.77 L612.48 764.83 L610.56 764.74 Z" fill="rgb(255,255,7)" stroke="rgb(255,255,7)" stroke-width="0.6"/><path d="M612.45 760.37 L614.48 760.35 L614.46 762.75 L612.46 762.77 Z" fill="rgb(255,255,23)" stroke="rgb(255,255,23)" stroke-width="0.6"/><path d="M612.46 762.77 L614.46 762.75 L614.41 764.81 L612.48 764.83 Z" fill="rgb(255,255,7)" stroke="rgb(255,255,7)" stroke-width="0.6"/><path d="M614.48 760.35 L616.49 760.20 L616.45 762.60 L614.46 762.75 Z" fill="rgb(255,255,22)" stroke="rgb(255,255,22)" stroke-width="0.6"/><path d="M614.46 762.75 L616.45 762.60 L616.32 764.67 L614.41 764.81 Z" fill="rgb(255,255,6)" stroke="rgb(255,255,6)" stroke-width="0.6"/><path d="M616.49 760.20 L618.47 759.94 L618.40 762.35 L616.45 762.60 Z" fill="rgb(255,255,19)" stroke="rgb(255,255,19)" stroke-width="0.6"/><path d="M616.45 762.60 L618.40 762.35 L618.20 764.42 L616.32 764.67 Z" fill="rgb(255,255,5)" stroke="rgb(255,255,5)" stroke-width="0.6"/><path d="M618.47 759.94 L620.39 759.57 L620.30 761.98 L618.40 762.35 Z" fill="rgb(255,255,15)" stroke="rgb(255,255,15)" stroke-width="0.6"/><path d="M620.39 759.57 L622.23 759.08 L622.12 761.50 L620.30 761.98 Z" fill="rgb(255,255,10)" stroke="rgb(255,255,10)" stroke-width="0.6"/><path d="M622.23 759.08 L623.98 758.49 L623.84 760.91 L622.12 761.50 Z" fill="rgb(255,255,7)" stroke="rgb(255,255,7)" stroke-width="0.6"/><path d="M608.44 760.06 L610.10 760.25 L610.10 337.79 L608.44 337.61 Z" fill="rgb(255,255,33)" stroke="rgb(255,255,33)" stroke-width="0.6"/><path d="M610.10 760.25 L611.78 760.35 L611.78 337.90 L610.10 337.79 Z" fill="rgb(255,255,36)" stroke="rgb(255,255,36)" stroke-width="0.6"/><path d="M611.78 760.35 L613.47 760.37 L613.47 337.92 L611.78 337.90 Z" fill="rgb(255,255,38)" stroke="rgb(255,255,38)" stroke-width="0.6"/><path d="M613.47 760.37 L615.15 760.31 L615.15 337.86 L613.47 337.92 Z" fill="rgb(255,255,37)" stroke="rgb(255,255,37)" stroke-width="0.6"/><path d="M615.15 760.31 L616.82 760.17 L616.82 337.71 L615.15 337.86 Z" fill="rgb(255,255,35)" stroke="rgb(255,255,35)" stroke-width="0.6"/><path d="M616.82 760.17 L618.47 759.94 L618.47 337.49 L616.82 337.71 Z" fill="rgb(255,255,30)" stroke="rgb(255,255,30)" stroke-width="0.6"/><path d="M618.47 759.94 L620.07 759.64 L620.07 337.18 L618.47 337.49 Z" fill="rgb(255,255,25)" stroke="rgb(255,255,25)" stroke-width="0.6"/><path d="M620.07 759.64 L621.62 759.25 L621.62 336.80 L620.07 337.18 Z" fill="rgb(255,255,19)" stroke="rgb(255,255,19)" stroke-width="0.6"/><path d="M621.62 759.25 L623.12 758.80 L623.12 336.34 L621.62 336.80 Z" fill="rgb(255,255,14)" stroke="rgb(255,255,14)" stroke-width="0.6"/><path d="M623.12 758.80 L624.54 758.27 L624.54 335.81 L623.12 336.34 Z" fill="rgb(255,255,9)" stroke="rgb(255,255,9)" stroke-width="0.6"/><path d="M624.54 758.27 L625.87 757.67 L625.87 335.21 L624.54 335.81 Z" fill="rgb(255,255,6)" stroke="rgb(255,255,6)" stroke-width="0.6"/></g>
<clipPath id="bsil"><path d="M339.86 180.20 L340.03 177.60 L340.54 175.05 L341.37 172.58 L342.52 170.25 L343.97 168.08 L345.69 166.12 L347.64 164.41 L349.81 162.96 L418.81 123.13 L421.14 121.98 L423.61 121.14 L426.16 120.63 L428.75 120.46 L431.35 120.63 L440.73 122.00 L450.03 123.52 L459.25 125.19 L461.80 125.70 L470.94 127.52 L479.99 129.50 L488.93 131.61 L497.77 133.88 L506.49 136.28 L515.09 138.83 L523.56 141.52 L531.90 144.34 L534.37 145.18 L542.56 148.14 L550.61 151.23 L558.50 154.46 L566.24 157.81 L573.80 161.28 L581.19 164.88 L583.53 166.03 L590.74 169.75 L597.76 173.58 L604.60 177.53 L611.24 181.59 L617.68 185.75 L619.84 187.20 L626.08 191.46 L632.10 195.83 L637.90 200.29 L643.48 204.85 L648.84 209.50 L650.79 211.22 L655.92 215.95 L660.82 220.76 L665.47 225.65 L669.88 230.62 L671.60 232.57 L675.77 237.61 L679.69 242.71 L683.36 247.88 L684.80 250.04 L688.22 255.26 L691.37 260.54 L694.27 265.87 L695.42 268.20 L698.06 273.57 L700.43 278.98 L701.26 281.45 L701.77 284.00 L701.94 286.60 L701.94 709.05 L701.77 711.65 L701.26 714.20 L700.43 716.67 L699.27 719.00 L697.83 721.17 L696.11 723.12 L694.15 724.84 L691.99 726.29 L623.00 766.12 L620.66 767.27 L618.20 768.11 L615.64 768.62 L613.04 768.79 L610.45 768.62 L601.08 767.25 L591.77 765.73 L582.55 764.05 L580.00 763.55 L570.86 761.72 L561.82 759.75 L552.87 757.63 L544.03 755.37 L535.31 752.97 L526.71 750.42 L518.24 747.73 L509.90 744.90 L507.43 744.07 L499.24 741.11 L491.19 738.01 L483.30 734.79 L475.56 731.44 L468.00 727.97 L460.61 724.37 L458.27 723.22 L451.06 719.50 L444.04 715.67 L437.20 711.72 L430.56 707.66 L424.12 703.50 L421.96 702.05 L415.73 697.78 L409.70 693.42 L403.90 688.95 L398.32 684.40 L392.96 679.75 L391.00 678.03 L385.88 673.30 L380.99 668.49 L376.33 663.60 L371.92 658.63 L370.20 656.67 L366.03 651.64 L362.11 646.53 L358.44 641.37 L357.00 639.21 L353.58 633.98 L350.43 628.71 L347.53 623.38 L346.38 621.05 L343.74 615.68 L341.37 610.27 L340.54 607.80 L340.03 605.25 L339.86 602.65 Z"/></clipPath>
<g fill="none" stroke="#000" stroke-width="1" shape-rendering="crispEdges" clip-path="url(#bsil)"><path d="M340.40 182.86 L341.60 185.69 L342.87 188.51 L344.21 191.32 L345.62 194.12 L347.10 196.91 L348.64 199.69 L350.25 202.45 L351.93 205.20 L353.67 207.94 L355.48 210.66 L357.35 213.37 L359.29 216.06 L361.30 218.74 L363.37 221.40 L365.50 224.04 L367.70 226.67 L369.96 229.27 L372.28 231.86 L374.67 234.43 L377.11 236.98 L379.62 239.52 L382.19 242.03 L384.83 244.51 L387.52 246.98 L390.27 249.43 L393.08 251.85 L395.94 254.25 L398.87 256.63 L401.85 258.98 L404.89 261.31 L407.99 263.62 L411.14 265.90 L414.34 268.15 L417.60 270.38 L420.92 272.58 L424.28 274.75 L427.70 276.90 L431.17 279.02 L434.69 281.11 L438.26 283.17 L441.88 285.20 L445.55 287.21 L449.27 289.18 L453.04 291.12 L456.85 293.04 L460.71 294.92 L464.61 296.77 L468.56 298.59 L472.55 300.37 L476.58 302.13 L480.66 303.85 L484.78 305.54 L488.93 307.20 L493.13 308.82 L497.37 310.41 L501.64 311.96 L505.95 313.48 L510.30 314.96 L514.68 316.41 L519.10 317.82 L523.55 319.20 L528.04 320.54 L532.56 321.85 L537.10 323.12 L541.68 324.35 L546.29 325.54 L550.92 326.70 L555.59 327.82 L560.28 328.90 L564.99 329.95 L569.73 330.95 L574.50 331.92 L579.29 332.85 L584.10 333.74 L588.93 334.59 L593.78 335.41 L598.65 336.18 L603.53 336.91 L608.44 337.61"/><path d="M627.12 334.56 L627.55 334.30 L627.99 334.05 L628.43 333.80 L628.86 333.55 L629.30 333.29 L629.74 333.04 L630.17 332.79 L630.61 332.54 L631.05 332.29 L631.48 332.03 L631.92 331.78 L632.36 331.53 L632.79 331.28 L633.23 331.03 L633.67 330.77 L634.10 330.52 L634.54 330.27 L634.98 330.02 L635.41 329.76 L635.85 329.51 L636.29 329.26 L636.72 329.01 L637.16 328.76 L637.60 328.50 L638.03 328.25 L638.47 328.00 L638.91 327.75 L639.34 327.50 L639.78 327.24 L640.22 326.99 L640.65 326.74 L641.09 326.49 L641.53 326.24 L641.96 325.98 L642.40 325.73 L642.84 325.48 L643.27 325.23 L643.71 324.97 L644.15 324.72 L644.58 324.47 L645.02 324.22 L645.46 323.97 L645.89 323.71 L646.33 323.46 L646.77 323.21 L647.20 322.96 L647.64 322.71 L648.08 322.45 L648.51 322.20 L648.95 321.95 L649.39 321.70 L649.82 321.44 L650.26 321.19 L650.70 320.94 L651.13 320.69 L651.57 320.44 L652.01 320.18 L652.44 319.93 L652.88 319.68 L653.32 319.43 L653.75 319.18 L654.19 318.92 L654.63 318.67 L655.06 318.42 L655.50 318.17 L655.94 317.92 L656.37 317.66 L656.81 317.41 L657.25 317.16 L657.68 316.91 L658.12 316.65 L658.56 316.40 L658.99 316.15 L659.43 315.90 L659.87 315.65 L660.30 315.39 L660.74 315.14 L661.18 314.89 L661.61 314.64"/><path d="M661.61 314.64 L662.05 314.39 L662.49 314.13 L662.92 313.88 L663.36 313.63 L663.80 313.38 L664.23 313.13 L664.67 312.87 L665.11 312.62 L665.54 312.37 L665.98 312.12 L666.42 311.86 L666.85 311.61 L667.29 311.36 L667.73 311.11 L668.16 310.86 L668.60 310.60 L669.04 310.35 L669.47 310.10 L669.91 309.85 L670.35 309.60 L670.78 309.34 L671.22 309.09 L671.66 308.84 L672.09 308.59 L672.53 308.33 L672.97 308.08 L673.40 307.83 L673.84 307.58 L674.28 307.33 L674.71 307.07 L675.15 306.82 L675.59 306.57 L676.02 306.32 L676.46 306.07 L676.90 305.81 L677.33 305.56 L677.77 305.31 L678.21 305.06 L678.64 304.81 L679.08 304.55 L679.52 304.30 L679.95 304.05 L680.39 303.80 L680.83 303.54 L681.26 303.29 L681.70 303.04 L682.14 302.79 L682.57 302.54 L683.01 302.28 L683.45 302.03 L683.89 301.78 L684.32 301.53 L684.76 301.28 L685.20 301.02 L685.63 300.77 L686.07 300.52 L686.51 300.27 L686.94 300.01 L687.38 299.76 L687.82 299.51 L688.25 299.26 L688.69 299.01 L689.13 298.75 L689.56 298.50 L690.00 298.25 L690.44 298.00 L690.87 297.75 L691.31 297.49 L691.75 297.24 L692.18 296.99 L692.62 296.74 L693.06 296.49 L693.49 296.23 L693.93 295.98 L694.37 295.73 L694.80 295.48 L695.24 295.22 L695.68 294.97 L696.11 294.72"/><path d="M340.40 605.31 L341.60 608.14 L342.87 610.96 L344.21 613.78 L345.62 616.58 L347.10 619.37 L348.64 622.14 L350.25 624.91 L351.93 627.66 L353.67 630.39 L355.48 633.12 L357.35 635.82 L359.29 638.52 L361.30 641.19 L363.37 643.85 L365.50 646.50 L367.70 649.12 L369.96 651.73 L372.28 654.32 L374.67 656.89 L377.11 659.44 L379.62 661.97 L382.19 664.48 L384.83 666.97 L387.52 669.44 L390.27 671.88 L393.08 674.31 L395.94 676.71 L398.87 679.08 L401.85 681.44 L404.89 683.77 L407.99 686.07 L411.14 688.35 L414.34 690.60 L417.60 692.83 L420.92 695.03 L424.28 697.21 L427.70 699.35 L431.17 701.47 L434.69 703.56 L438.26 705.62 L441.88 707.66 L445.55 709.66 L449.27 711.63 L453.04 713.58 L456.85 715.49 L460.71 717.37 L464.61 719.22 L468.56 721.04 L472.55 722.83 L476.58 724.58 L480.66 726.31 L484.78 728.00 L488.93 729.65 L493.13 731.27 L497.37 732.86 L501.64 734.41 L505.95 735.93 L510.30 737.42 L514.68 738.87 L519.10 740.28 L523.55 741.66 L528.04 743.00 L532.56 744.30 L537.10 745.57 L541.68 746.80 L546.29 748.00 L550.92 749.16 L555.59 750.28 L560.28 751.36 L564.99 752.40 L569.73 753.41 L574.50 754.38 L579.29 755.31 L584.10 756.20 L588.93 757.05 L593.78 757.86 L598.65 758.63 L603.53 759.37 L608.44 760.06"/><path d="M627.12 757.01 L627.55 756.76 L627.99 756.51 L628.43 756.25 L628.86 756.00 L629.30 755.75 L629.74 755.50 L630.17 755.25 L630.61 754.99 L631.05 754.74 L631.48 754.49 L631.92 754.24 L632.36 753.99 L632.79 753.73 L633.23 753.48 L633.67 753.23 L634.10 752.98 L634.54 752.72 L634.98 752.47 L635.41 752.22 L635.85 751.97 L636.29 751.72 L636.72 751.46 L637.16 751.21 L637.60 750.96 L638.03 750.71 L638.47 750.46 L638.91 750.20 L639.34 749.95 L639.78 749.70 L640.22 749.45 L640.65 749.19 L641.09 748.94 L641.53 748.69 L641.96 748.44 L642.40 748.19 L642.84 747.93 L643.27 747.68 L643.71 747.43 L644.15 747.18 L644.58 746.93 L645.02 746.67 L645.46 746.42 L645.89 746.17 L646.33 745.92 L646.77 745.67 L647.20 745.41 L647.64 745.16 L648.08 744.91 L648.51 744.66 L648.95 744.40 L649.39 744.15 L649.82 743.90 L650.26 743.65 L650.70 743.40 L651.13 743.14 L651.57 742.89 L652.01 742.64 L652.44 742.39 L652.88 742.14 L653.32 741.88 L653.75 741.63 L654.19 741.38 L654.63 741.13 L655.06 740.87 L655.50 740.62 L655.94 740.37 L656.37 740.12 L656.81 739.87 L657.25 739.61 L657.68 739.36 L658.12 739.11 L658.56 738.86 L658.99 738.61 L659.43 738.35 L659.87 738.10 L660.30 737.85 L660.74 737.60 L661.18 737.35 L661.61 737.09"/><path d="M661.61 737.09 L662.05 736.84 L662.49 736.59 L662.92 736.34 L663.36 736.08 L663.80 735.83 L664.23 735.58 L664.67 735.33 L665.11 735.08 L665.54 734.82 L665.98 734.57 L666.42 734.32 L666.85 734.07 L667.29 733.82 L667.73 733.56 L668.16 733.31 L668.60 733.06 L669.04 732.81 L669.47 732.55 L669.91 732.30 L670.35 732.05 L670.78 731.80 L671.22 731.55 L671.66 731.29 L672.09 731.04 L672.53 730.79 L672.97 730.54 L673.40 730.29 L673.84 730.03 L674.28 729.78 L674.71 729.53 L675.15 729.28 L675.59 729.03 L676.02 728.77 L676.46 728.52 L676.90 728.27 L677.33 728.02 L677.77 727.76 L678.21 727.51 L678.64 727.26 L679.08 727.01 L679.52 726.76 L679.95 726.50 L680.39 726.25 L680.83 726.00 L681.26 725.75 L681.70 725.50 L682.14 725.24 L682.57 724.99 L683.01 724.74 L683.45 724.49 L683.89 724.24 L684.32 723.98 L684.76 723.73 L685.20 723.48 L685.63 723.23 L686.07 722.97 L686.51 722.72 L686.94 722.47 L687.38 722.22 L687.82 721.97 L688.25 721.71 L688.69 721.46 L689.13 721.21 L689.56 720.96 L690.00 720.71 L690.44 720.45 L690.87 720.20 L691.31 719.95 L691.75 719.70 L692.18 719.44 L692.62 719.19 L693.06 718.94 L693.49 718.69 L693.93 718.44 L694.37 718.18 L694.80 717.93 L695.24 717.68 L695.68 717.43 L696.11 717.18"/><path d="M608.44 760.06 L608.44 754.72 L608.44 749.37 L608.44 744.02 L608.44 738.67 L608.44 733.33 L608.44 727.98 L608.44 722.63 L608.44 717.28 L608.44 711.94 L608.44 706.59 L608.44 701.24 L608.44 695.89 L608.44 690.55 L608.44 685.20 L608.44 679.85 L608.44 674.50 L608.44 669.16 L608.44 663.81 L608.44 658.46 L608.44 653.11 L608.44 647.77 L608.44 642.42 L608.44 637.07 L608.44 631.72 L608.44 626.38 L608.44 621.03 L608.44 615.68 L608.44 610.33 L608.44 604.99 L608.44 599.64 L608.44 594.29 L608.44 588.94 L608.44 583.60 L608.44 578.25 L608.44 572.90 L608.44 567.55 L608.44 562.20 L608.44 556.86 L608.44 551.51 L608.44 546.16 L608.44 540.81 L608.44 535.47 L608.44 530.12 L608.44 524.77 L608.44 519.42 L608.44 514.08 L608.44 508.73 L608.44 503.38 L608.44 498.03 L608.44 492.69 L608.44 487.34 L608.44 481.99 L608.44 476.64 L608.44 471.30 L608.44 465.95 L608.44 460.60 L608.44 455.25 L608.44 449.91 L608.44 444.56 L608.44 439.21 L608.44 433.86 L608.44 428.52 L608.44 423.17 L608.44 417.82 L608.44 412.47 L608.44 407.13 L608.44 401.78 L608.44 396.43 L608.44 391.08 L608.44 385.74 L608.44 380.39 L608.44 375.04 L608.44 369.69 L608.44 364.35 L608.44 359.00 L608.44 353.65 L608.44 348.30 L608.44 342.96 L608.44 337.61"/><path d="M627.12 757.01 L627.12 751.66 L627.12 746.32 L627.12 740.97 L627.12 735.62 L627.12 730.27 L627.12 724.93 L627.12 719.58 L627.12 714.23 L627.12 708.88 L627.12 703.54 L627.12 698.19 L627.12 692.84 L627.12 687.49 L627.12 682.14 L627.12 676.80 L627.12 671.45 L627.12 666.10 L627.12 660.75 L627.12 655.41 L627.12 650.06 L627.12 644.71 L627.12 639.36 L627.12 634.02 L627.12 628.67 L627.12 623.32 L627.12 617.97 L627.12 612.63 L627.12 607.28 L627.12 601.93 L627.12 596.58 L627.12 591.24 L627.12 585.89 L627.12 580.54 L627.12 575.19 L627.12 569.85 L627.12 564.50 L627.12 559.15 L627.12 553.80 L627.12 548.46 L627.12 543.11 L627.12 537.76 L627.12 532.41 L627.12 527.07 L627.12 521.72 L627.12 516.37 L627.12 511.02 L627.12 505.68 L627.12 500.33 L627.12 494.98 L627.12 489.63 L627.12 484.29 L627.12 478.94 L627.12 473.59 L627.12 468.24 L627.12 462.90 L627.12 457.55 L627.12 452.20 L627.12 446.85 L627.12 441.51 L627.12 436.16 L627.12 430.81 L627.12 425.46 L627.12 420.12 L627.12 414.77 L627.12 409.42 L627.12 404.07 L627.12 398.73 L627.12 393.38 L627.12 388.03 L627.12 382.68 L627.12 377.34 L627.12 371.99 L627.12 366.64 L627.12 361.29 L627.12 355.95 L627.12 350.60 L627.12 345.25 L627.12 339.90 L627.12 334.56"/><path d="M340.40 605.31 L340.40 599.96 L340.40 594.62 L340.40 589.27 L340.40 583.92 L340.40 578.57 L340.40 573.23 L340.40 567.88 L340.40 562.53 L340.40 557.18 L340.40 551.84 L340.40 546.49 L340.40 541.14 L340.40 535.79 L340.40 530.45 L340.40 525.10 L340.40 519.75 L340.40 514.40 L340.40 509.06 L340.40 503.71 L340.40 498.36 L340.40 493.01 L340.40 487.66 L340.40 482.32 L340.40 476.97 L340.40 471.62 L340.40 466.27 L340.40 460.93 L340.40 455.58 L340.40 450.23 L340.40 444.88 L340.40 439.54 L340.40 434.19 L340.40 428.84 L340.40 423.49 L340.40 418.15 L340.40 412.80 L340.40 407.45 L340.40 402.10 L340.40 396.76 L340.40 391.41 L340.40 386.06 L340.40 380.71 L340.40 375.37 L340.40 370.02 L340.40 364.67 L340.40 359.32 L340.40 353.98 L340.40 348.63 L340.40 343.28 L340.40 337.93 L340.40 332.59 L340.40 327.24 L340.40 321.89 L340.40 316.54 L340.40 311.20 L340.40 305.85 L340.40 300.50 L340.40 295.15 L340.40 289.81 L340.40 284.46 L340.40 279.11 L340.40 273.76 L340.40 268.42 L340.40 263.07 L340.40 257.72 L340.40 252.37 L340.40 247.03 L340.40 241.68 L340.40 236.33 L340.40 230.98 L340.40 225.64 L340.40 220.29 L340.40 214.94 L340.40 209.59 L340.40 204.25 L340.40 198.90 L340.40 193.55 L340.40 188.20 L340.40 182.86"/><path d="M696.11 717.18 L696.11 711.83 L696.11 706.48 L696.11 701.13 L696.11 695.79 L696.11 690.44 L696.11 685.09 L696.11 679.74 L696.11 674.40 L696.11 669.05 L696.11 663.70 L696.11 658.35 L696.11 653.01 L696.11 647.66 L696.11 642.31 L696.11 636.96 L696.11 631.62 L696.11 626.27 L696.11 620.92 L696.11 615.57 L696.11 610.23 L696.11 604.88 L696.11 599.53 L696.11 594.18 L696.11 588.83 L696.11 583.49 L696.11 578.14 L696.11 572.79 L696.11 567.44 L696.11 562.10 L696.11 556.75 L696.11 551.40 L696.11 546.05 L696.11 540.71 L696.11 535.36 L696.11 530.01 L696.11 524.66 L696.11 519.32 L696.11 513.97 L696.11 508.62 L696.11 503.27 L696.11 497.93 L696.11 492.58 L696.11 487.23 L696.11 481.88 L696.11 476.54 L696.11 471.19 L696.11 465.84 L696.11 460.49 L696.11 455.15 L696.11 449.80 L696.11 444.45 L696.11 439.10 L696.11 433.76 L696.11 428.41 L696.11 423.06 L696.11 417.71 L696.11 412.37 L696.11 407.02 L696.11 401.67 L696.11 396.32 L696.11 390.98 L696.11 385.63 L696.11 380.28 L696.11 374.93 L696.11 369.59 L696.11 364.24 L696.11 358.89 L696.11 353.54 L696.11 348.20 L696.11 342.85 L696.11 337.50 L696.11 332.15 L696.11 326.81 L696.11 321.46 L696.11 316.11 L696.11 310.76 L696.11 305.42 L696.11 300.07 L696.11 294.72"/><path d="M359.76 163.95 L360.90 166.62 L362.10 169.29 L363.36 171.95 L364.69 174.59 L366.09 177.23 L367.55 179.85 L369.07 182.47 L370.65 185.06 L372.30 187.65 L374.01 190.22 L375.78 192.78 L377.61 195.33 L379.51 197.86 L381.46 200.37 L383.48 202.87 L385.55 205.35 L387.69 207.81 L389.89 210.26 L392.14 212.69 L394.45 215.10 L396.82 217.49 L399.25 219.86 L401.74 222.21 L404.28 224.55 L406.88 226.86 L409.54 229.15 L412.25 231.42 L415.01 233.66 L417.83 235.89 L420.70 238.09 L423.63 240.26 L426.60 242.42 L429.63 244.55 L432.71 246.65 L435.84 248.73 L439.02 250.79 L442.25 252.81 L445.53 254.82 L448.86 256.79 L452.24 258.74 L455.66 260.66 L459.13 262.55 L462.64 264.42 L466.20 266.26 L469.80 268.06 L473.44 269.84 L477.13 271.59 L480.86 273.31 L484.63 275.00 L488.45 276.66 L492.30 278.28 L496.19 279.88 L500.12 281.44 L504.08 282.98 L508.09 284.48 L512.13 285.95 L516.20 287.38 L520.31 288.78 L524.45 290.15 L528.63 291.49 L532.83 292.79 L537.07 294.06 L541.34 295.29 L545.64 296.49 L549.96 297.65 L554.31 298.78 L558.70 299.88 L563.10 300.93 L567.53 301.96 L571.99 302.94 L576.47 303.89 L580.97 304.81 L585.50 305.69 L590.04 306.53 L594.61 307.33 L599.19 308.10 L603.79 308.83 L608.41 309.53 L613.04 310.18 L613.04 310.18 L613.92 309.68 L614.79 309.17 L615.67 308.67 L616.54 308.17 L617.41 307.66 L618.29 307.16 L619.16 306.65 L620.03 306.15 L620.91 305.64 L621.78 305.14 L622.65 304.64 L623.53 304.13 L624.40 303.63 L625.27 303.12 L626.15 302.62 L627.02 302.11 L627.89 301.61 L628.77 301.11 L629.64 300.60 L630.51 300.10 L631.39 299.59 L632.26 299.09 L633.13 298.59 L634.01 298.08 L634.88 297.58 L635.75 297.07 L636.63 296.57 L637.50 296.06 L638.37 295.56 L639.25 295.06 L640.12 294.55 L640.99 294.05 L641.87 293.54 L642.74 293.04 L643.61 292.53 L644.49 292.03 L645.36 291.53 L646.23 291.02 L647.11 290.52 L647.98 290.01 L648.85 289.51 L649.73 289.00 L650.60 288.50 L651.47 288.00 L652.35 287.49 L653.22 286.99 L654.09 286.48 L654.97 285.98 L655.84 285.48 L656.71 284.97 L657.59 284.47 L658.46 283.96 L659.33 283.46 L660.21 282.95 L661.08 282.45 L661.95 281.95 L662.83 281.44 L663.70 280.94 L664.57 280.43 L665.45 279.93 L666.32 279.42 L667.19 278.92 L668.07 278.42 L668.94 277.91 L669.81 277.41 L670.69 276.90 L671.56 276.40 L672.43 275.89 L673.31 275.39 L674.18 274.89 L675.05 274.38 L675.93 273.88 L676.80 273.37 L677.67 272.87 L678.55 272.36 L679.42 271.86 L680.29 271.36 L681.17 270.85 L682.04 270.35 L682.04 270.35 L680.90 267.67 L679.70 265.01 L678.44 262.35 L677.11 259.70 L675.71 257.07 L674.25 254.44 L672.73 251.83 L671.15 249.23 L669.50 246.65 L667.79 244.07 L666.02 241.51 L664.19 238.97 L662.29 236.44 L660.34 233.93 L658.32 231.43 L656.25 228.95 L654.11 226.48 L651.91 224.04 L649.66 221.61 L647.35 219.20 L644.98 216.81 L642.55 214.43 L640.06 212.08 L637.52 209.75 L634.92 207.44 L632.26 205.15 L629.55 202.88 L626.79 200.63 L623.97 198.41 L621.10 196.21 L618.17 194.03 L615.20 191.88 L612.17 189.75 L609.09 187.65 L605.96 185.57 L602.78 183.51 L599.55 181.48 L596.27 179.48 L592.94 177.51 L589.56 175.56 L586.14 173.64 L582.67 171.74 L579.16 169.88 L575.60 168.04 L572.00 166.23 L568.36 164.45 L564.67 162.71 L560.94 160.99 L557.17 159.30 L553.35 157.64 L549.50 156.01 L545.61 154.42 L541.68 152.85 L537.72 151.32 L533.71 149.82 L529.67 148.35 L525.60 146.92 L521.49 145.51 L517.35 144.14 L513.17 142.81 L508.97 141.51 L504.73 140.24 L500.46 139.01 L496.16 137.81 L491.84 136.64 L487.49 135.51 L483.10 134.42 L478.70 133.36 L474.27 132.34 L469.81 131.35 L465.33 130.40 L460.83 129.49 L456.30 128.61 L451.76 127.77 L447.19 126.96 L442.61 126.19 L438.01 125.46 L433.39 124.77 L428.76 124.11 L428.76 124.11 L427.88 124.62 L427.01 125.12 L426.13 125.63 L425.26 126.13 L424.39 126.63 L423.51 127.14 L422.64 127.64 L421.77 128.15 L420.89 128.65 L420.02 129.16 L419.15 129.66 L418.27 130.16 L417.40 130.67 L416.53 131.17 L415.65 131.68 L414.78 132.18 L413.91 132.69 L413.03 133.19 L412.16 133.69 L411.29 134.20 L410.41 134.70 L409.54 135.21 L408.67 135.71 L407.79 136.22 L406.92 136.72 L406.05 137.22 L405.17 137.73 L404.30 138.23 L403.43 138.74 L402.55 139.24 L401.68 139.74 L400.81 140.25 L399.93 140.75 L399.06 141.26 L398.19 141.76 L397.31 142.27 L396.44 142.77 L395.57 143.27 L394.69 143.78 L393.82 144.28 L392.95 144.79 L392.07 145.29 L391.20 145.80 L390.33 146.30 L389.45 146.80 L388.58 147.31 L387.71 147.81 L386.83 148.32 L385.96 148.82 L385.09 149.33 L384.21 149.83 L383.34 150.33 L382.47 150.84 L381.59 151.34 L380.72 151.85 L379.85 152.35 L378.97 152.85 L378.10 153.36 L377.23 153.86 L376.35 154.37 L375.48 154.87 L374.61 155.38 L373.73 155.88 L372.86 156.38 L371.99 156.89 L371.11 157.39 L370.24 157.90 L369.37 158.40 L368.49 158.91 L367.62 159.41 L366.75 159.91 L365.87 160.42 L365.00 160.92 L364.13 161.43 L363.25 161.93 L362.38 162.44 L361.51 162.94 L360.63 163.44 L359.76 163.95 L359.76 163.95"/><path d="M608.44 337.61 L608.45 336.71 L608.47 335.79 L608.50 334.83 L608.55 333.85 L608.61 332.85 L608.68 331.84 L608.77 330.80 L608.87 329.75 L608.98 328.70 L609.10 327.63 L609.23 326.56 L609.38 325.50 L609.53 324.43 L609.70 323.37 L609.88 322.32 L610.06 321.28 L610.26 320.26 L610.46 319.26 L610.67 318.27 L610.89 317.31 L611.11 316.38 L611.34 315.47 L611.57 314.60 L611.81 313.77 L612.05 312.97 L612.30 312.21 L612.55 311.49 L612.80 310.81 L613.04 310.18"/><path d="M627.12 334.56 L627.10 333.66 L627.03 332.75 L626.93 331.82 L626.79 330.87 L626.60 329.91 L626.38 328.94 L626.12 327.96 L625.82 326.98 L625.48 326.00 L625.10 325.02 L624.69 324.04 L624.25 323.07 L623.77 322.10 L623.26 321.16 L622.72 320.22 L622.15 319.31 L621.56 318.41 L620.94 317.54 L620.30 316.70 L619.64 315.88 L618.95 315.10 L618.25 314.34 L617.54 313.63 L616.81 312.95 L616.07 312.31 L615.32 311.71 L614.57 311.16 L613.81 310.65 L613.04 310.18"/><path d="M608.44 337.61 L609.12 337.69 L609.81 337.77 L610.50 337.83 L611.20 337.87 L611.89 337.90 L612.59 337.92 L613.29 337.92 L613.99 337.91 L614.69 337.88 L615.38 337.84 L616.08 337.79 L616.77 337.72 L617.45 337.64 L618.13 337.54 L618.80 337.43 L619.47 337.31 L620.13 337.17 L620.77 337.02 L621.41 336.85 L622.04 336.68 L622.66 336.49 L623.27 336.29 L623.86 336.08 L624.44 335.85 L625.01 335.61 L625.56 335.36 L626.09 335.11 L626.61 334.84 L627.12 334.56"/><path d="M340.40 182.86 L340.43 181.97 L340.51 181.08 L340.65 180.19 L340.85 179.30 L341.11 178.41 L341.41 177.53 L341.77 176.65 L342.19 175.79 L342.65 174.93 L343.17 174.10 L343.74 173.28 L344.35 172.48 L345.00 171.70 L345.70 170.95 L346.45 170.23 L347.23 169.53 L348.04 168.87 L348.89 168.24 L349.78 167.64 L350.69 167.09 L351.63 166.57 L352.59 166.09 L353.58 165.65 L354.58 165.25 L355.60 164.90 L356.63 164.59 L357.67 164.33 L358.71 164.12 L359.76 163.95"/><path d="M349.03 163.49 L349.54 163.12 L350.08 162.81 L350.65 162.55 L351.24 162.34 L351.86 162.19 L352.50 162.09 L353.17 162.04 L353.85 162.04 L354.55 162.10 L355.27 162.20 L355.99 162.37 L356.73 162.58 L357.48 162.85 L358.24 163.17 L359.00 163.53 L359.76 163.95"/><path d="M340.40 182.86 L340.25 182.46 L340.12 182.06 L340.02 181.66 L339.95 181.26 L339.89 180.86 L339.86 180.46 L339.86 180.05 L339.88 179.65 L339.93 179.25 L340.00 178.85"/><path d="M701.15 281.34 L700.95 280.51 L700.69 279.69 L700.39 278.89 L700.03 278.11 L699.61 277.36 L699.15 276.64 L698.63 275.94 L698.06 275.28 L697.45 274.65 L696.80 274.05 L696.10 273.49 L695.35 272.97 L694.57 272.49 L693.76 272.05 L692.91 271.66 L692.02 271.30 L691.11 271.00 L690.17 270.73 L689.21 270.52 L688.22 270.35 L687.22 270.23 L686.20 270.16 L685.17 270.13 L684.13 270.16 L683.09 270.23 L682.04 270.35"/><path d="M696.11 294.72 L696.09 293.83 L696.03 292.92 L695.93 291.98 L695.78 291.04 L695.60 290.08 L695.38 289.11 L695.11 288.13 L694.81 287.15 L694.47 286.16 L694.10 285.18 L693.69 284.20 L693.24 283.23 L692.77 282.27 L692.26 281.32 L691.72 280.39 L691.15 279.47 L690.56 278.58 L689.94 277.71 L689.30 276.86 L688.63 276.05 L687.95 275.26 L687.25 274.51 L686.53 273.79 L685.81 273.11 L685.07 272.47 L684.32 271.88 L683.56 271.32 L682.80 270.81 L682.04 270.35"/><path d="M696.11 294.72 L696.60 294.43 L697.07 294.13 L697.51 293.82 L697.94 293.50 L698.35 293.18 L698.75 292.84 L699.11 292.50 L699.46 292.15 L699.79 291.79 L700.10 291.43 L700.38 291.06 L700.64 290.68 L700.88 290.30 L701.09 289.92 L701.28 289.53 L701.45 289.14 L701.59 288.74 L701.71 288.35 L701.80 287.95 L701.87 287.55 L701.92 287.14 L701.94 286.74 L701.94 286.34 L701.91 285.93 L701.85 285.53"/><path d="M431.74 120.74 L431.54 120.66 L431.34 120.64 L431.13 120.68 L430.91 120.77 L430.69 120.92 L430.46 121.13 L430.23 121.40 L429.99 121.72 L429.75 122.09 L429.50 122.52 L429.25 123.00 L429.00 123.53 L428.76 124.11"/><path d="M418.03 123.65 L418.54 123.29 L419.08 122.98 L419.65 122.72 L420.24 122.51 L420.86 122.35 L421.50 122.25 L422.16 122.20 L422.85 122.20 L423.55 122.26 L424.26 122.37 L424.99 122.53 L425.73 122.75 L426.48 123.01 L427.23 123.33 L427.99 123.70 L428.76 124.11"/><path d="M661.61 314.64 L661.59 313.75 L661.53 312.83 L661.43 311.90 L661.29 310.95 L661.10 309.99 L660.88 309.02 L660.61 308.05 L660.31 307.06 L659.98 306.08 L659.60 305.10 L659.19 304.12 L658.74 303.15 L658.27 302.19 L657.76 301.24 L657.22 300.30 L656.65 299.39 L656.06 298.50 L655.44 297.62 L654.80 296.78 L654.13 295.96 L653.45 295.18 L652.75 294.43 L652.04 293.71 L651.31 293.03 L650.57 292.39 L649.82 291.79 L649.06 291.24 L648.30 290.73 L647.54 290.27"/><path d="M383.53 143.57 L384.04 143.21 L384.58 142.90 L385.15 142.64 L385.74 142.43 L386.36 142.27 L387.00 142.17 L387.67 142.12 L388.35 142.12 L389.05 142.18 L389.76 142.29 L390.49 142.45 L391.23 142.66 L391.98 142.93 L392.74 143.25 L393.50 143.61 L394.26 144.03"/><path d="M608.44 760.06 L608.45 760.93 L608.47 761.75 L608.50 762.55 L608.55 763.30 L608.61 764.00 L608.68 764.67 L608.77 765.28 L608.87 765.85 L608.98 766.37 L609.10 766.84 L609.23 767.26 L609.38 767.62 L609.53 767.92 L609.70 768.17 L609.88 768.37 L610.06 768.51 L610.26 768.59 L610.46 768.61 L610.67 768.57"/><path d="M627.12 757.01 L627.10 757.88 L627.03 758.72 L626.93 759.53 L626.79 760.31 L626.60 761.06 L626.38 761.77 L626.12 762.45 L625.82 763.08 L625.48 763.67 L625.10 764.22 L624.69 764.73 L624.25 765.19 L623.77 765.60 L623.26 765.96 L622.72 766.27 L622.15 766.53"/><path d="M608.44 760.06 L609.12 760.15 L609.81 760.22 L610.50 760.28 L611.20 760.33 L611.89 760.36 L612.59 760.37 L613.29 760.37 L613.99 760.36 L614.69 760.34 L615.38 760.30 L616.08 760.24 L616.77 760.17 L617.45 760.09 L618.13 759.99 L618.80 759.88 L619.47 759.76 L620.13 759.62 L620.77 759.47 L621.41 759.31 L622.04 759.13 L622.66 758.95 L623.27 758.74 L623.86 758.53 L624.44 758.31 L625.01 758.07 L625.56 757.82 L626.09 757.56 L626.61 757.29 L627.12 757.01"/><path d="M340.40 605.31 L340.43 606.19 L340.51 607.05 L340.65 607.90 L340.85 608.74 L341.11 609.56 L341.41 610.36 L341.77 611.14 L342.19 611.89"/><path d="M340.40 605.31 L340.25 604.92 L340.12 604.52 L340.02 604.12 L339.95 603.72 L339.89 603.32 L339.86 602.91 L339.86 602.51 L339.88 602.11 L339.93 601.70 L340.00 601.30"/><path d="M696.11 717.18 L696.09 718.04 L696.03 718.88 L695.93 719.70 L695.78 720.48 L695.60 721.23 L695.38 721.94 L695.11 722.61 L694.81 723.25 L694.47 723.84 L694.10 724.39 L693.69 724.89 L693.24 725.35 L692.77 725.76 L692.26 726.12 L691.72 726.43 L691.15 726.69"/><path d="M696.11 717.18 L696.60 716.89 L697.07 716.59 L697.51 716.28 L697.94 715.96 L698.35 715.63 L698.75 715.30 L699.11 714.95 L699.46 714.60 L699.79 714.25 L700.10 713.88 L700.38 713.51 L700.64 713.14 L700.88 712.76 L701.09 712.38 L701.28 711.99 L701.45 711.60 L701.59 711.20 L701.71 710.80 L701.80 710.40 L701.87 710.00 L701.92 709.60 L701.94 709.19 L701.94 708.79 L701.91 708.39 L701.85 707.98"/><path d="M661.61 737.09 L661.59 737.96 L661.53 738.80 L661.43 739.61 L661.29 740.40 L661.10 741.14 L660.88 741.86 L660.61 742.53 L660.31 743.16 L659.98 743.76 L659.60 744.31 L659.19 744.81 L658.74 745.27 L658.27 745.68 L657.76 746.04 L657.22 746.35 L656.65 746.61"/><path d="M661.61 737.09 L661.61 731.75 L661.61 726.40 L661.61 721.05 L661.61 715.70 L661.61 710.36 L661.61 705.01 L661.61 699.66 L661.61 694.31 L661.61 688.97 L661.61 683.62 L661.61 678.27 L661.61 672.92 L661.61 667.58 L661.61 662.23 L661.61 656.88 L661.61 651.53 L661.61 646.19 L661.61 640.84 L661.61 635.49 L661.61 630.14 L661.61 624.79 L661.61 619.45 L661.61 614.10 L661.61 608.75 L661.61 603.40 L661.61 598.06 L661.61 592.71 L661.61 587.36 L661.61 582.01 L661.61 576.67 L661.61 571.32 L661.61 565.97 L661.61 560.62 L661.61 555.28 L661.61 549.93 L661.61 544.58 L661.61 539.23 L661.61 533.89 L661.61 528.54 L661.61 523.19 L661.61 517.84 L661.61 512.50 L661.61 507.15 L661.61 501.80 L661.61 496.45 L661.61 491.11 L661.61 485.76 L661.61 480.41 L661.61 475.06 L661.61 469.72 L661.61 464.37 L661.61 459.02 L661.61 453.67 L661.61 448.33 L661.61 442.98 L661.61 437.63 L661.61 432.28 L661.61 426.94 L661.61 421.59 L661.61 416.24 L661.61 410.89 L661.61 405.55 L661.61 400.20 L661.61 394.85 L661.61 389.50 L661.61 384.16 L661.61 378.81 L661.61 373.46 L661.61 368.11 L661.61 362.77 L661.61 357.42 L661.61 352.07 L661.61 346.72 L661.61 341.38 L661.61 336.03 L661.61 330.68 L661.61 325.33 L661.61 319.99 L661.61 314.64"/></g>
<path d="M461.21 170.97 L461.36 169.15 L461.67 167.34 L462.14 165.54 L462.79 163.76 L463.59 162.00 L464.55 160.27 L465.67 158.57 L466.94 156.90 L468.37 155.28 L469.94 153.70 L471.65 152.17 L473.50 150.70 L475.48 149.28 L477.59 147.93 L479.81 146.65 L482.16 145.43 L484.61 144.28 L487.16 143.22 L489.81 142.23 L492.54 141.32 L495.35 140.50 L498.24 139.76 L501.18 139.12 L504.18 138.56 L507.23 138.10 L510.32 137.73 L513.43 137.46 L516.57 137.28 L519.72 137.19 L522.87 137.20 L526.02 137.31 L529.15 137.52 L532.26 137.81 L535.33 138.21 L538.37 138.69 L541.36 139.27 L544.29 139.94 L547.16 140.70 L549.95 141.54 L552.66 142.47 L555.29 143.48 L557.81 144.56 L560.24 145.73 L562.55 146.96 L564.75 148.26 L566.83 149.63 L568.78 151.06 L570.59 152.55 L572.27 154.09 L573.80 155.68 L575.19 157.32 L576.42 158.99 L577.50 160.70 L578.43 162.44 L579.19 164.21 L579.79 165.99 L580.23 167.79 L580.50 169.61 L580.60 171.43 L580.60 216.92 L580.54 218.74 L580.31 220.56 L579.91 222.36 L579.36 224.15 L578.63 225.92 L577.75 227.67 L576.71 229.39 L575.51 231.07 L574.16 232.72 L572.67 234.32 L571.03 235.87 L569.25 237.37 L567.33 238.82 L565.28 240.20 L563.11 241.52 L560.83 242.77 L558.43 243.95 L555.93 245.06 L553.33 246.09 L550.64 247.04 L547.86 247.90 L545.01 248.68 L542.10 249.37 L539.12 249.97 L536.10 250.48 L533.03 250.90 L529.93 251.22 L526.80 251.45 L523.66 251.58 L520.51 251.62 L517.36 251.56 L514.22 251.40 L511.09 251.15 L508.00 250.80 L504.94 250.36 L501.93 249.83 L498.97 249.21 L496.07 248.49 L493.24 247.69 L490.48 246.81 L487.81 245.84 L485.24 244.79 L482.76 243.66 L480.39 242.47 L478.13 241.20 L475.99 239.86 L473.98 238.46 L472.10 237.00 L470.35 235.49 L468.75 233.92 L467.28 232.31 L465.97 230.65 L464.81 228.96 L463.81 227.24 L462.97 225.48 L462.29 223.71 L461.77 221.91 L461.42 220.10 L461.23 218.28 L461.21 216.47 Z" fill="#ffff00"/>
<g><path d="M481.54 243.06 L484.56 244.49 L484.56 199.00 L481.54 197.57 Z" fill="rgb(255,255,5)" stroke="rgb(255,255,5)" stroke-width="0.6"/><path d="M484.56 244.49 L487.73 245.81 L487.73 200.31 L484.56 199.00 Z" fill="rgb(255,255,7)" stroke="rgb(255,255,7)" stroke-width="0.6"/><path d="M487.73 245.81 L491.05 247.00 L491.05 201.50 L487.73 200.31 Z" fill="rgb(255,255,10)" stroke="rgb(255,255,10)" stroke-width="0.6"/><path d="M491.05 247.00 L494.50 248.06 L494.50 202.57 L491.05 201.50 Z" fill="rgb(255,255,14)" stroke="rgb(255,255,14)" stroke-width="0.6"/><path d="M494.50 248.06 L498.05 248.99 L498.05 203.50 L494.50 202.57 Z" fill="rgb(255,255,18)" stroke="rgb(255,255,18)" stroke-width="0.6"/><path d="M498.05 248.99 L501.71 249.79 L501.71 204.29 L498.05 203.50 Z" fill="rgb(255,255,22)" stroke="rgb(255,255,22)" stroke-width="0.6"/><path d="M501.71 249.79 L505.45 250.44 L505.45 204.95 L501.71 204.29 Z" fill="rgb(255,255,27)" stroke="rgb(255,255,27)" stroke-width="0.6"/><path d="M505.45 250.44 L509.25 250.95 L509.25 205.46 L505.45 204.95 Z" fill="rgb(255,255,31)" stroke="rgb(255,255,31)" stroke-width="0.6"/><path d="M509.25 250.95 L513.11 251.32 L513.11 205.83 L509.25 205.46 Z" fill="rgb(255,255,34)" stroke="rgb(255,255,34)" stroke-width="0.6"/><path d="M513.11 251.32 L517.00 251.54 L517.00 206.05 L513.11 205.83 Z" fill="rgb(255,255,36)" stroke="rgb(255,255,36)" stroke-width="0.6"/><path d="M517.00 251.54 L520.90 251.62 L520.90 206.12 L517.00 206.05 Z" fill="rgb(255,255,38)" stroke="rgb(255,255,38)" stroke-width="0.6"/><path d="M520.90 251.62 L524.80 251.54 L524.80 206.05 L520.90 206.12 Z" fill="rgb(255,255,38)" stroke="rgb(255,255,38)" stroke-width="0.6"/><path d="M524.80 251.54 L528.69 251.32 L528.69 205.83 L524.80 206.05 Z" fill="rgb(255,255,36)" stroke="rgb(255,255,36)" stroke-width="0.6"/><path d="M528.69 251.32 L532.55 250.95 L532.55 205.46 L528.69 205.83 Z" fill="rgb(255,255,34)" stroke="rgb(255,255,34)" stroke-width="0.6"/><path d="M532.55 250.95 L536.35 250.44 L536.35 204.95 L532.55 205.46 Z" fill="rgb(255,255,31)" stroke="rgb(255,255,31)" stroke-width="0.6"/><path d="M536.35 250.44 L540.09 249.79 L540.09 204.29 L536.35 204.95 Z" fill="rgb(255,255,27)" stroke="rgb(255,255,27)" stroke-width="0.6"/><path d="M540.09 249.79 L543.75 248.99 L543.75 203.50 L540.09 204.29 Z" fill="rgb(255,255,22)" stroke="rgb(255,255,22)" stroke-width="0.6"/><path d="M543.75 248.99 L547.30 248.06 L547.30 202.57 L543.75 203.50 Z" fill="rgb(255,255,18)" stroke="rgb(255,255,18)" stroke-width="0.6"/><path d="M547.30 248.06 L550.75 247.00 L550.75 201.50 L547.30 202.57 Z" fill="rgb(255,255,14)" stroke="rgb(255,255,14)" stroke-width="0.6"/><path d="M550.75 247.00 L554.07 245.81 L554.07 200.31 L550.75 201.50 Z" fill="rgb(255,255,10)" stroke="rgb(255,255,10)" stroke-width="0.6"/><path d="M554.07 245.81 L557.24 244.49 L557.24 199.00 L554.07 200.31 Z" fill="rgb(255,255,7)" stroke="rgb(255,255,7)" stroke-width="0.6"/><path d="M557.24 244.49 L560.26 243.06 L560.26 197.57 L557.24 199.00 Z" fill="rgb(255,255,5)" stroke="rgb(255,255,5)" stroke-width="0.6"/></g>
<path d="M559.74 194.08 L561.73 192.86 L563.61 191.59 L565.38 190.26 L567.02 188.88 L568.53 187.45 L569.90 185.97 L571.14 184.46 L572.24 182.91 L573.20 181.33 L574.01 179.73 L574.68 178.10 L575.19 176.45 L575.56 174.79 L575.77 173.12 L575.82 171.44 L575.73 169.77 L575.48 168.10 L575.08 166.44 L574.53 164.80 L573.83 163.18 L572.98 161.58 L571.98 160.00 L570.85 158.46 L569.57 156.96 L568.16 155.50 L566.62 154.08 L564.95 152.71 L563.15 151.39 L561.24 150.14 L559.22 148.94 L557.09 147.80 L554.86 146.73 L552.53 145.73 L550.12 144.80 L547.63 143.95 L545.06 143.17 L542.42 142.48 L539.72 141.86 L536.97 141.33 L534.18 140.88 L531.35 140.52 L528.49 140.25 L525.61 140.06 L522.71 139.96 L519.81 139.95 L516.92 140.03 L514.03 140.19 L511.16 140.44 L508.33 140.78 L505.52 141.21 L502.76 141.72 L500.05 142.32 L497.40 142.99 L494.81 143.75 L492.30 144.58 L489.86 145.49 L487.51 146.47 L485.26 147.53 L483.10 148.65 L481.05 149.83 L479.11 151.07 L477.29 152.38 L475.59 153.73 L474.01 155.14 L472.57 156.59 L471.26 158.08 L470.09 159.61 L469.06 161.18 L468.17 162.77 L467.43 164.39 L466.85 166.03 L466.41 167.69 L466.12 169.35 L465.99 171.03 L466.01 172.70 L466.18 174.37 L466.50 176.03 L466.98 177.69 L467.61 179.32 L468.38 180.93 L469.30 182.52 L470.37 184.08 L471.57 185.60 L472.92 187.08 L474.39 188.52 L476.00 189.92 L477.73 191.26 L479.59 192.55 L481.55 193.78 L483.63 194.95 L485.81 196.05 L488.09 197.08 L490.46 198.05 L492.92 198.94 L495.45 199.75 L498.05 200.49 L500.72 201.15 L503.45 201.72 L506.22 202.21 L509.03 202.61 L511.88 202.93 L514.75 203.16 L517.64 203.31 L520.54 203.36 L523.44 203.33 L526.33 203.21 L529.21 203.00 L532.06 202.70 L534.88 202.32 L537.67 201.85 L540.40 201.30 L543.08 200.66 L545.71 199.94 L548.26 199.15 L550.73 198.28 L553.12 197.33 L555.43 196.31 L557.63 195.23 L559.74 194.08 Z" fill="#ffff00"/>
<clipPath id="hole"><path d="M559.74 194.08 L561.73 192.86 L563.61 191.59 L565.38 190.26 L567.02 188.88 L568.53 187.45 L569.90 185.97 L571.14 184.46 L572.24 182.91 L573.20 181.33 L574.01 179.73 L574.68 178.10 L575.19 176.45 L575.56 174.79 L575.77 173.12 L575.82 171.44 L575.73 169.77 L575.48 168.10 L575.08 166.44 L574.53 164.80 L573.83 163.18 L572.98 161.58 L571.98 160.00 L570.85 158.46 L569.57 156.96 L568.16 155.50 L566.62 154.08 L564.95 152.71 L563.15 151.39 L561.24 150.14 L559.22 148.94 L557.09 147.80 L554.86 146.73 L552.53 145.73 L550.12 144.80 L547.63 143.95 L545.06 143.17 L542.42 142.48 L539.72 141.86 L536.97 141.33 L534.18 140.88 L531.35 140.52 L528.49 140.25 L525.61 140.06 L522.71 139.96 L519.81 139.95 L516.92 140.03 L514.03 140.19 L511.16 140.44 L508.33 140.78 L505.52 141.21 L502.76 141.72 L500.05 142.32 L497.40 142.99 L494.81 143.75 L492.30 144.58 L489.86 145.49 L487.51 146.47 L485.26 147.53 L483.10 148.65 L481.05 149.83 L479.11 151.07 L477.29 152.38 L475.59 153.73 L474.01 155.14 L472.57 156.59 L471.26 158.08 L470.09 159.61 L469.06 161.18 L468.17 162.77 L467.43 164.39 L466.85 166.03 L466.41 167.69 L466.12 169.35 L465.99 171.03 L466.01 172.70 L466.18 174.37 L466.50 176.03 L466.98 177.69 L467.61 179.32 L468.38 180.93 L469.30 182.52 L470.37 184.08 L471.57 185.60 L472.92 187.08 L474.39 188.52 L476.00 189.92 L477.73 191.26 L479.59 192.55 L481.55 193.78 L483.63 194.95 L485.81 196.05 L488.09 197.08 L490.46 198.05 L492.92 198.94 L495.45 199.75 L498.05 200.49 L500.72 201.15 L503.45 201.72 L506.22 202.21 L509.03 202.61 L511.88 202.93 L514.75 203.16 L517.64 203.31 L520.54 203.36 L523.44 203.33 L526.33 203.21 L529.21 203.00 L532.06 202.70 L534.88 202.32 L537.67 201.85 L540.40 201.30 L543.08 200.66 L545.71 199.94 L548.26 199.15 L550.73 198.28 L553.12 197.33 L555.43 196.31 L557.63 195.23 L559.74 194.08 Z"/></clipPath>
<g clip-path="url(#hole)"><path d="M557.11 193.31 L554.34 191.99 L554.34 146.50 L557.11 147.81 Z" fill="rgb(255,255,5)" stroke="rgb(255,255,5)" stroke-width="0.6"/><path d="M554.34 191.99 L551.41 190.78 L551.41 145.29 L554.34 146.50 Z" fill="rgb(255,255,7)" stroke="rgb(255,255,7)" stroke-width="0.6"/><path d="M551.41 190.78 L548.36 189.69 L548.36 144.19 L551.41 145.29 Z" fill="rgb(255,255,10)" stroke="rgb(255,255,10)" stroke-width="0.6"/><path d="M548.36 189.69 L545.19 188.71 L545.19 143.21 L548.36 144.19 Z" fill="rgb(255,255,14)" stroke="rgb(255,255,14)" stroke-width="0.6"/><path d="M545.19 188.71 L541.92 187.85 L541.92 142.36 L545.19 143.21 Z" fill="rgb(255,255,18)" stroke="rgb(255,255,18)" stroke-width="0.6"/><path d="M541.92 187.85 L538.55 187.12 L538.55 141.63 L541.92 142.36 Z" fill="rgb(255,255,22)" stroke="rgb(255,255,22)" stroke-width="0.6"/><path d="M538.55 187.12 L535.12 186.52 L535.12 141.02 L538.55 141.63 Z" fill="rgb(255,255,27)" stroke="rgb(255,255,27)" stroke-width="0.6"/><path d="M535.12 186.52 L531.62 186.05 L531.62 140.55 L535.12 141.02 Z" fill="rgb(255,255,31)" stroke="rgb(255,255,31)" stroke-width="0.6"/><path d="M531.62 186.05 L528.07 185.71 L528.07 140.21 L531.62 140.55 Z" fill="rgb(255,255,34)" stroke="rgb(255,255,34)" stroke-width="0.6"/><path d="M528.07 185.71 L524.49 185.51 L524.49 140.01 L528.07 140.21 Z" fill="rgb(255,255,36)" stroke="rgb(255,255,36)" stroke-width="0.6"/><path d="M524.49 185.51 L520.90 185.44 L520.90 139.94 L524.49 140.01 Z" fill="rgb(255,255,38)" stroke="rgb(255,255,38)" stroke-width="0.6"/><path d="M520.90 185.44 L517.31 185.51 L517.31 140.01 L520.90 139.94 Z" fill="rgb(255,255,38)" stroke="rgb(255,255,38)" stroke-width="0.6"/><path d="M517.31 185.51 L513.73 185.71 L513.73 140.21 L517.31 140.01 Z" fill="rgb(255,255,36)" stroke="rgb(255,255,36)" stroke-width="0.6"/><path d="M513.73 185.71 L510.18 186.05 L510.18 140.55 L513.73 140.21 Z" fill="rgb(255,255,34)" stroke="rgb(255,255,34)" stroke-width="0.6"/><path d="M510.18 186.05 L506.68 186.52 L506.68 141.02 L510.18 140.55 Z" fill="rgb(255,255,31)" stroke="rgb(255,255,31)" stroke-width="0.6"/><path d="M506.68 186.52 L503.25 187.12 L503.25 141.63 L506.68 141.02 Z" fill="rgb(255,255,27)" stroke="rgb(255,255,27)" stroke-width="0.6"/><path d="M503.25 187.12 L499.88 187.85 L499.88 142.36 L503.25 141.63 Z" fill="rgb(255,255,22)" stroke="rgb(255,255,22)" stroke-width="0.6"/><path d="M499.88 187.85 L496.61 188.71 L496.61 143.21 L499.88 142.36 Z" fill="rgb(255,255,18)" stroke="rgb(255,255,18)" stroke-width="0.6"/><path d="M496.61 188.71 L493.44 189.69 L493.44 144.19 L496.61 143.21 Z" fill="rgb(255,255,14)" stroke="rgb(255,255,14)" stroke-width="0.6"/><path d="M493.44 189.69 L490.39 190.78 L490.39 145.29 L493.44 144.19 Z" fill="rgb(255,255,10)" stroke="rgb(255,255,10)" stroke-width="0.6"/><path d="M490.39 190.78 L487.46 191.99 L487.46 146.50 L490.39 145.29 Z" fill="rgb(255,255,7)" stroke="rgb(255,255,7)" stroke-width="0.6"/><path d="M487.46 191.99 L484.69 193.31 L484.69 147.81 L487.46 146.50 Z" fill="rgb(255,255,5)" stroke="rgb(255,255,5)" stroke-width="0.6"/></g>
<g><path d="M553.21 214.41 L552.72 214.57 L550.73 213.03 L551.32 212.89 Z" fill="rgb(255,255,5)" stroke="rgb(255,255,5)" stroke-width="0.6"/><path d="M552.72 214.57 L552.09 214.78 L550.01 213.21 L550.73 213.03 Z" fill="rgb(255,255,6)" stroke="rgb(255,255,6)" stroke-width="0.6"/><path d="M552.09 214.78 L551.34 215.03 L549.16 213.43 L550.01 213.21 Z" fill="rgb(255,255,7)" stroke="rgb(255,255,7)" stroke-width="0.6"/><path d="M551.34 215.03 L550.44 215.32 L548.18 213.68 L549.16 213.43 Z" fill="rgb(255,255,8)" stroke="rgb(255,255,8)" stroke-width="0.6"/><path d="M550.44 215.32 L549.41 215.64 L547.07 213.96 L548.18 213.68 Z" fill="rgb(255,255,10)" stroke="rgb(255,255,10)" stroke-width="0.6"/><path d="M549.41 215.64 L548.24 215.99 L545.81 214.26 L547.07 213.96 Z" fill="rgb(255,255,12)" stroke="rgb(255,255,12)" stroke-width="0.6"/><path d="M548.24 215.99 L546.92 216.37 L544.42 214.58 L545.81 214.26 Z" fill="rgb(255,255,14)" stroke="rgb(255,255,14)" stroke-width="0.6"/><path d="M546.92 216.37 L545.45 216.76 L542.89 214.92 L544.42 214.58 Z" fill="rgb(255,255,16)" stroke="rgb(255,255,16)" stroke-width="0.6"/><path d="M545.45 216.76 L543.84 217.17 L541.21 215.26 L542.89 214.92 Z" fill="rgb(255,255,19)" stroke="rgb(255,255,19)" stroke-width="0.6"/><path d="M543.84 217.17 L542.07 217.59 L539.38 215.60 L541.21 215.26 Z" fill="rgb(255,255,22)" stroke="rgb(255,255,22)" stroke-width="0.6"/><path d="M542.07 217.59 L540.15 218.00 L537.40 215.94 L539.38 215.60 Z" fill="rgb(255,255,26)" stroke="rgb(255,255,26)" stroke-width="0.6"/><path d="M540.15 218.00 L538.07 218.41 L535.27 216.26 L537.40 215.94 Z" fill="rgb(255,255,30)" stroke="rgb(255,255,30)" stroke-width="0.6"/><path d="M538.07 218.41 L535.83 218.80 L532.99 216.55 L535.27 216.26 Z" fill="rgb(255,255,34)" stroke="rgb(255,255,34)" stroke-width="0.6"/><path d="M535.83 218.80 L533.43 219.16 L530.56 216.81 L532.99 216.55 Z" fill="rgb(255,255,39)" stroke="rgb(255,255,39)" stroke-width="0.6"/><path d="M533.43 219.16 L530.88 219.48 L527.99 217.02 L530.56 216.81 Z" fill="rgb(255,255,44)" stroke="rgb(255,255,44)" stroke-width="0.6"/><path d="M530.88 219.48 L528.17 219.75 L525.27 217.18 L527.99 217.02 Z" fill="rgb(255,255,49)" stroke="rgb(255,255,49)" stroke-width="0.6"/><path d="M528.17 219.75 L525.31 219.97 L522.41 217.27 L525.27 217.18 Z" fill="rgb(255,255,54)" stroke="rgb(255,255,54)" stroke-width="0.6"/><path d="M525.31 219.97 L522.31 220.11 L519.42 217.28 L522.41 217.27 Z" fill="rgb(255,255,60)" stroke="rgb(255,255,60)" stroke-width="0.6"/><path d="M522.31 220.11 L519.17 220.18 L516.30 217.21 L519.42 217.28 Z" fill="rgb(255,255,65)" stroke="rgb(255,255,65)" stroke-width="0.6"/><path d="M519.17 220.18 L515.90 220.15 L513.07 217.04 L516.30 217.21 Z" fill="rgb(255,255,70)" stroke="rgb(255,255,70)" stroke-width="0.6"/><path d="M515.90 220.15 L512.51 220.02 L509.75 216.76 L513.07 217.04 Z" fill="rgb(255,255,74)" stroke="rgb(255,255,74)" stroke-width="0.6"/><path d="M512.51 220.02 L509.01 219.77 L506.34 216.36 L509.75 216.76 Z" fill="rgb(255,255,77)" stroke="rgb(255,255,77)" stroke-width="0.6"/><path d="M509.01 219.77 L505.43 219.39 L502.86 215.83 L506.34 216.36 Z" fill="rgb(255,255,79)" stroke="rgb(255,255,79)" stroke-width="0.6"/><path d="M505.43 219.39 L501.78 218.88 L499.33 215.16 L502.86 215.83 Z" fill="rgb(255,255,80)" stroke="rgb(255,255,80)" stroke-width="0.6"/><path d="M501.78 218.88 L498.08 218.21 L495.78 214.33 L499.33 215.16 Z" fill="rgb(255,255,79)" stroke="rgb(255,255,79)" stroke-width="0.6"/><path d="M498.08 218.21 L494.36 217.39 L492.23 213.35 L495.78 214.33 Z" fill="rgb(255,255,76)" stroke="rgb(255,255,76)" stroke-width="0.6"/><path d="M494.36 217.39 L490.64 216.40 L488.72 212.20 L492.23 213.35 Z" fill="rgb(255,255,71)" stroke="rgb(255,255,71)" stroke-width="0.6"/><path d="M490.64 216.40 L486.95 215.23 L485.26 210.88 L488.72 212.20 Z" fill="rgb(255,255,65)" stroke="rgb(255,255,65)" stroke-width="0.6"/><path d="M486.95 215.23 L483.32 213.88 L481.89 209.39 L485.26 210.88 Z" fill="rgb(255,255,58)" stroke="rgb(255,255,58)" stroke-width="0.6"/><path d="M483.32 213.88 L479.79 212.35 L478.64 207.71 L481.89 209.39 Z" fill="rgb(255,255,50)" stroke="rgb(255,255,50)" stroke-width="0.6"/><path d="M479.79 212.35 L476.40 210.63 L475.56 205.86 L478.64 207.71 Z" fill="rgb(255,255,41)" stroke="rgb(255,255,41)" stroke-width="0.6"/><path d="M476.40 210.63 L473.17 208.72 L472.68 203.83 L475.56 205.86 Z" fill="rgb(255,255,33)" stroke="rgb(255,255,33)" stroke-width="0.6"/><path d="M473.17 208.72 L470.15 206.63 L470.03 201.64 L472.68 203.83 Z" fill="rgb(255,255,25)" stroke="rgb(255,255,25)" stroke-width="0.6"/><path d="M470.15 206.63 L467.39 204.36 L467.66 199.27 L470.03 201.64 Z" fill="rgb(255,255,18)" stroke="rgb(255,255,18)" stroke-width="0.6"/><path d="M467.39 204.36 L464.91 201.91 L465.60 196.76 L467.66 199.27 Z" fill="rgb(255,255,13)" stroke="rgb(255,255,13)" stroke-width="0.6"/><path d="M464.91 201.91 L462.76 199.31 L463.89 194.10 L465.60 196.76 Z" fill="rgb(255,255,8)" stroke="rgb(255,255,8)" stroke-width="0.6"/><path d="M462.76 199.31 L460.99 196.55 L462.57 191.32 L463.89 194.10 Z" fill="rgb(255,255,5)" stroke="rgb(255,255,5)" stroke-width="0.6"/><path d="M578.29 207.11 L574.88 211.17 L568.40 210.91 L572.38 207.28 Z" fill="rgb(255,255,5)" stroke="rgb(255,255,5)" stroke-width="0.6"/><path d="M574.88 211.17 L570.69 214.97 L563.75 214.24 L568.40 210.91 Z" fill="rgb(255,255,11)" stroke="rgb(255,255,11)" stroke-width="0.6"/><path d="M570.69 214.97 L565.79 218.46 L558.48 217.24 L563.75 214.24 Z" fill="rgb(255,255,21)" stroke="rgb(255,255,21)" stroke-width="0.6"/><path d="M565.79 218.46 L560.25 221.59 L552.68 219.85 L558.48 217.24 Z" fill="rgb(255,255,37)" stroke="rgb(255,255,37)" stroke-width="0.6"/><path d="M560.25 221.59 L554.15 224.31 L546.42 222.05 L552.68 219.85 Z" fill="rgb(255,255,59)" stroke="rgb(255,255,59)" stroke-width="0.6"/><path d="M554.15 224.31 L547.58 226.60 L539.82 223.80 L546.42 222.05 Z" fill="rgb(255,255,86)" stroke="rgb(255,255,86)" stroke-width="0.6"/><path d="M547.58 226.60 L540.64 228.41 L532.95 225.09 L539.82 223.80 Z" fill="rgb(255,255,117)" stroke="rgb(255,255,117)" stroke-width="0.6"/><path d="M540.64 228.41 L533.43 229.74 L525.92 225.90 L532.95 225.09 Z" fill="rgb(255,255,146)" stroke="rgb(255,255,146)" stroke-width="0.6"/><path d="M533.43 229.74 L526.05 230.57 L518.84 226.22 L525.92 225.90 Z" fill="rgb(255,255,169)" stroke="rgb(255,255,169)" stroke-width="0.6"/><path d="M526.05 230.57 L518.62 230.88 L511.81 226.07 L518.84 226.22 Z" fill="rgb(255,255,182)" stroke="rgb(255,255,182)" stroke-width="0.6"/><path d="M518.62 230.88 L511.24 230.69 L504.93 225.44 L511.81 226.07 Z" fill="rgb(255,255,183)" stroke="rgb(255,255,183)" stroke-width="0.6"/><path d="M511.24 230.69 L504.02 230.01 L498.29 224.35 L504.93 225.44 Z" fill="rgb(255,255,171)" stroke="rgb(255,255,171)" stroke-width="0.6"/><path d="M504.02 230.01 L497.06 228.84 L491.99 222.83 L498.29 224.35 Z" fill="rgb(255,255,150)" stroke="rgb(255,255,150)" stroke-width="0.6"/><path d="M497.06 228.84 L490.45 227.22 L486.11 220.91 L491.99 222.83 Z" fill="rgb(255,255,122)" stroke="rgb(255,255,122)" stroke-width="0.6"/><path d="M490.45 227.22 L484.28 225.17 L480.72 218.63 L486.11 220.91 Z" fill="rgb(255,255,93)" stroke="rgb(255,255,93)" stroke-width="0.6"/><path d="M484.28 225.17 L478.64 222.75 L475.90 216.01 L480.72 218.63 Z" fill="rgb(255,255,65)" stroke="rgb(255,255,65)" stroke-width="0.6"/><path d="M478.64 222.75 L473.59 219.97 L471.70 213.11 L475.90 216.01 Z" fill="rgb(255,255,43)" stroke="rgb(255,255,43)" stroke-width="0.6"/><path d="M473.59 219.97 L469.19 216.90 L468.17 209.98 L471.70 213.11 Z" fill="rgb(255,255,26)" stroke="rgb(255,255,26)" stroke-width="0.6"/><path d="M469.19 216.90 L465.49 213.58 L465.34 206.66 L468.17 209.98 Z" fill="rgb(255,255,14)" stroke="rgb(255,255,14)" stroke-width="0.6"/><path d="M465.49 213.58 L462.53 210.07 L463.24 203.20 L465.34 206.66 Z" fill="rgb(255,255,7)" stroke="rgb(255,255,7)" stroke-width="0.6"/><path d="M580.70 215.42 L580.04 216.63 L576.56 216.35 L577.20 215.23 Z" fill="rgb(255,255,5)" stroke="rgb(255,255,5)" stroke-width="0.6"/><path d="M580.04 216.63 L579.38 217.75 L575.93 217.39 L576.56 216.35 Z" fill="rgb(255,255,5)" stroke="rgb(255,255,5)" stroke-width="0.6"/><path d="M579.38 217.75 L578.72 218.78 L575.31 218.34 L575.93 217.39 Z" fill="rgb(255,255,5)" stroke="rgb(255,255,5)" stroke-width="0.6"/><path d="M578.72 218.78 L578.07 219.71 L574.71 219.20 L575.31 218.34 Z" fill="rgb(255,255,5)" stroke="rgb(255,255,5)" stroke-width="0.6"/><path d="M578.07 219.71 L577.44 220.56 L574.14 219.99 L574.71 219.20 Z" fill="rgb(255,255,5)" stroke="rgb(255,255,5)" stroke-width="0.6"/><path d="M577.44 220.56 L576.85 221.31 L573.61 220.69 L574.14 219.99 Z" fill="rgb(255,255,5)" stroke="rgb(255,255,5)" stroke-width="0.6"/><path d="M576.85 221.31 L576.30 221.98 L573.14 221.31 L573.61 220.69 Z" fill="rgb(255,255,5)" stroke="rgb(255,255,5)" stroke-width="0.6"/><path d="M576.30 221.98 L575.80 222.57 L572.71 221.85 L573.14 221.31 Z" fill="rgb(255,255,5)" stroke="rgb(255,255,5)" stroke-width="0.6"/><path d="M575.80 222.57 L575.36 223.07 L572.35 222.31 L572.71 221.85 Z" fill="rgb(255,255,5)" stroke="rgb(255,255,5)" stroke-width="0.6"/></g>
<g fill="none" stroke="#000" stroke-width="1" shape-rendering="crispEdges"><path d="M563.11 196.03 L565.28 194.71 L567.33 193.32 L569.24 191.88 L571.03 190.37 L572.67 188.82 L574.16 187.22 L575.51 185.58 L576.71 183.89 L577.75 182.17 L578.63 180.43 L579.35 178.66 L579.91 176.87 L580.31 175.06 L580.54 173.24 L580.60 171.43 L580.49 169.61 L580.22 167.79 L579.79 165.99 L579.19 164.21 L578.43 162.44 L577.51 160.70 L576.43 158.99 L575.19 157.32 L573.80 155.68 L572.27 154.09 L570.59 152.55 L568.78 151.06 L566.83 149.63 L564.75 148.26 L562.55 146.96 L560.24 145.73 L557.81 144.56 L555.29 143.48 L552.66 142.47 L549.95 141.54 L547.16 140.70 L544.29 139.94 L541.36 139.27 L538.37 138.69 L535.33 138.21 L532.26 137.81 L529.15 137.52 L526.02 137.31 L522.87 137.20 L519.72 137.19 L516.57 137.28 L513.43 137.46 L510.32 137.73 L507.23 138.10 L504.18 138.56 L501.18 139.12 L498.24 139.77 L495.35 140.50 L492.54 141.32 L489.81 142.23 L487.16 143.22 L484.61 144.28 L482.16 145.43 L479.81 146.65 L477.59 147.93 L475.48 149.29 L473.50 150.70 L471.65 152.17 L469.94 153.70 L468.37 155.28 L466.94 156.90 L465.67 158.57 L464.55 160.27 L463.59 162.00 L462.79 163.76 L462.15 165.54 L461.67 167.34 L461.36 169.15 L461.21 170.97 L461.23 172.79 L461.42 174.61 L461.77 176.41 L462.29 178.21 L462.97 179.99 L463.81 181.74 L464.82 183.47 L465.97 185.16 L467.28 186.81 L468.74 188.43 L470.35 189.99 L472.10 191.51 L473.98 192.96 L475.99 194.36 L478.13 195.70 L480.39 196.97 L482.76 198.17 L485.24 199.30 L487.81 200.34 L490.48 201.31 L493.24 202.20 L496.07 203.00 L498.97 203.71 L501.93 204.33 L504.94 204.87 L508.00 205.31 L511.09 205.65 L514.22 205.90 L517.36 206.06 L520.51 206.12 L523.66 206.08 L526.80 205.95 L529.93 205.72 L533.03 205.40 L536.10 204.99 L539.12 204.48 L542.10 203.87 L545.01 203.18 L547.86 202.41 L550.64 201.54 L553.33 200.59 L555.93 199.56 L558.43 198.46 L560.83 197.28 L563.11 196.03 Z"/><path d="M559.74 194.08 L561.73 192.86 L563.61 191.59 L565.38 190.26 L567.02 188.88 L568.53 187.45 L569.90 185.97 L571.14 184.46 L572.24 182.91 L573.20 181.33 L574.01 179.73 L574.68 178.10 L575.19 176.45 L575.56 174.79 L575.77 173.12 L575.82 171.44 L575.73 169.77 L575.48 168.10 L575.08 166.44 L574.53 164.80 L573.83 163.18 L572.98 161.58 L571.98 160.00 L570.85 158.46 L569.57 156.96 L568.16 155.50 L566.62 154.08 L564.95 152.71 L563.15 151.39 L561.24 150.14 L559.22 148.94 L557.09 147.80 L554.86 146.73 L552.53 145.73 L550.12 144.80 L547.63 143.95 L545.06 143.17 L542.42 142.48 L539.72 141.86 L536.97 141.33 L534.18 140.88 L531.35 140.52 L528.49 140.25 L525.61 140.06 L522.71 139.96 L519.81 139.95 L516.92 140.03 L514.03 140.19 L511.16 140.44 L508.33 140.78 L505.52 141.21 L502.76 141.72 L500.05 142.32 L497.40 142.99 L494.81 143.75 L492.30 144.58 L489.86 145.49 L487.51 146.47 L485.26 147.53 L483.10 148.65 L481.05 149.83 L479.11 151.07 L477.29 152.38 L475.59 153.73 L474.01 155.14 L472.57 156.59 L471.26 158.08 L470.09 159.61 L469.06 161.18 L468.17 162.77 L467.43 164.39 L466.85 166.03 L466.41 167.69 L466.12 169.35 L465.99 171.03 L466.01 172.70 L466.18 174.37 L466.50 176.03 L466.98 177.69 L467.61 179.32 L468.38 180.93 L469.30 182.52 L470.37 184.08 L471.57 185.60 L472.92 187.08 L474.39 188.52 L476.00 189.92 L477.73 191.26 L479.59 192.55 L481.55 193.78 L483.63 194.95 L485.81 196.05 L488.09 197.08 L490.46 198.05 L492.92 198.94 L495.45 199.75 L498.05 200.49 L500.72 201.15 L503.45 201.72 L506.22 202.21 L509.03 202.61 L511.88 202.93 L514.75 203.16 L517.64 203.31 L520.54 203.36 L523.44 203.33 L526.33 203.21 L529.21 203.00 L532.06 202.70 L534.88 202.32 L537.67 201.85 L540.40 201.30 L543.08 200.66 L545.71 199.94 L548.26 199.15 L550.73 198.28 L553.12 197.33 L555.43 196.31 L557.63 195.23 L559.74 194.08 Z"/><path d="M461.20 217.15 L461.22 218.06 L461.28 218.97 L461.39 219.88 L461.53 220.78 L461.72 221.68 L461.95 222.58 L462.22 223.48 L462.53 224.37 L462.88 225.26 L463.27 226.14 L463.70 227.02 L464.17 227.89 L464.68 228.75 L465.23 229.60 L465.82 230.44 L466.45 231.28 L467.11 232.10 L467.81 232.92 L468.55 233.72 L469.33 234.51 L470.14 235.29 L470.99 236.06 L471.87 236.81 L472.79 237.55 L473.74 238.28 L474.72 238.99 L475.73 239.69 L476.78 240.37 L477.86 241.03 L478.97 241.68 L480.10 242.31 L481.27 242.92 L482.46 243.52 L483.68 244.10 L484.92 244.65 L486.19 245.19 L487.49 245.71 L488.80 246.21 L490.14 246.69 L491.51 247.15 L492.89 247.59 L494.29 248.00 L495.71 248.40 L497.15 248.77 L498.60 249.12 L500.07 249.45 L501.55 249.76 L503.05 250.04 L504.56 250.30 L506.08 250.54 L507.62 250.75 L509.16 250.94 L510.71 251.11 L512.26 251.25 L513.82 251.37 L515.39 251.47 L516.96 251.54 L518.54 251.59 L520.11 251.61 L521.69 251.61 L523.26 251.59 L524.84 251.54 L526.41 251.47 L527.98 251.37 L529.54 251.25 L531.09 251.11 L532.64 250.94 L534.18 250.75 L535.72 250.54 L537.24 250.30 L538.75 250.04 L540.25 249.76 L541.73 249.45 L543.20 249.12 L544.65 248.77 L546.09 248.40 L547.51 248.00 L548.91 247.59 L550.29 247.15 L551.66 246.69 L553.00 246.21 L554.31 245.71 L555.61 245.19 L556.88 244.65 L558.12 244.10 L559.34 243.52 L560.53 242.92 L561.70 242.31 L562.83 241.68 L563.94 241.03 L565.02 240.37 L566.07 239.69 L567.08 238.99 L568.06 238.28 L569.01 237.55 L569.93 236.81 L570.81 236.06 L571.66 235.29 L572.47 234.51 L573.25 233.72 L573.99 232.92 L574.69 232.10 L575.35 231.28 L575.98 230.44 L576.57 229.60 L577.12 228.75 L577.63 227.89 L578.10 227.02 L578.53 226.14 L578.92 225.26 L579.27 224.37 L579.58 223.48 L579.85 222.58 L580.08 221.68 L580.27 220.78 L580.41 219.88 L580.52 218.97 L580.58 218.06 L580.60 217.15"/><path d="M563.11 241.52 L563.11 196.03"/>
<path d="M575.82 217.15 L575.80 216.31 L575.75 215.47 L575.65 214.64 L575.52 213.81 L575.35 212.97 L575.14 212.15 L574.89 211.32 L574.60 210.50 L574.28 209.68 L573.92 208.87 L573.52 208.07 L573.09 207.27 L572.62 206.48 L572.12 205.69 L571.57 204.92 L571.00 204.15 L570.38 203.39 L569.74 202.64 L569.06 201.90 L568.34 201.17 L567.60 200.45 L566.82 199.75 L566.01 199.06 L565.16 198.37 L564.29 197.71 L563.39 197.05 L562.45 196.41 L561.49 195.78 L560.50 195.17 L559.48 194.58 L558.43 194.00 L557.36 193.43 L556.27 192.89 L555.14 192.36 L554.00 191.84 L552.83 191.35 L551.64 190.87 L550.43 190.41 L549.19 189.97 L547.94 189.55 L546.67 189.15 L545.38 188.76 L544.08 188.40 L542.75 188.06 L541.42 187.73 L540.06 187.43 L538.70 187.15 L537.32 186.89 L535.93 186.65 L534.53 186.43 L533.12 186.23 L531.70 186.06 L530.28 185.90 L528.85 185.77 L527.41 185.66 L525.97 185.57 L524.52 185.51 L523.07 185.46 L521.62 185.44 L520.18 185.44 L518.73 185.46 L517.28 185.51 L515.83 185.57 L514.39 185.66 L512.95 185.77 L511.52 185.90 L510.10 186.06 L508.68 186.23 L507.27 186.43 L505.87 186.65 L504.48 186.89 L503.10 187.15 L501.74 187.43 L500.38 187.73 L499.05 188.06 L497.72 188.40 L496.42 188.76 L495.13 189.15 L493.86 189.55 L492.61 189.97 L491.37 190.41 L490.16 190.87 L488.97 191.35 L487.80 191.84 L486.66 192.36 L485.53 192.89 L484.44 193.43 L483.37 194.00 L482.32 194.58 L481.30 195.17 L480.31 195.78 L479.35 196.41 L478.41 197.05 L477.51 197.71 L476.64 198.37 L475.79 199.06 L474.98 199.75 L474.20 200.45 L473.46 201.17 L472.74 201.90 L472.06 202.64 L471.42 203.39 L470.80 204.15 L470.23 204.92 L469.68 205.69 L469.18 206.48 L468.71 207.27 L468.28 208.07 L467.88 208.87 L467.52 209.68 L467.20 210.50 L466.91 211.32 L466.66 212.15 L466.45 212.97 L466.28 213.81 L466.15 214.64 L466.05 215.47 L466.00 216.31 L465.98 217.15" clip-path="url(#hole)"/>
<path d="M553.93 214.20 L553.90 214.20 L553.85 214.21 L553.78 214.23 L553.69 214.26 L553.58 214.29 L553.45 214.33 L553.30 214.38 L553.13 214.44 L552.94 214.50 L552.73 214.57 L552.50 214.65 L552.24 214.73 L551.97 214.82 L551.67 214.92 L551.35 215.02 L551.02 215.13 L550.66 215.25 L550.27 215.37 L549.87 215.50 L549.44 215.63 L548.99 215.77 L548.52 215.91 L548.03 216.05 L547.51 216.20 L546.97 216.35 L546.41 216.51 L545.82 216.67 L545.21 216.83 L544.57 216.99 L543.92 217.16 L543.23 217.32 L542.52 217.49 L541.79 217.65 L541.03 217.82 L540.25 217.98 L539.45 218.15 L538.61 218.31 L537.76 218.47 L536.87 218.62 L535.97 218.77 L535.04 218.92 L534.08 219.06 L533.10 219.20 L532.09 219.33 L531.06 219.46 L530.00 219.57 L528.92 219.68 L527.81 219.78 L526.69 219.87 L525.53 219.95 L524.36 220.02 L523.16 220.08 L521.94 220.13 L520.70 220.16 L519.43 220.18 L518.15 220.18 L516.84 220.17 L515.52 220.14 L514.18 220.10 L512.82 220.03 L511.44 219.95 L510.05 219.85 L508.64 219.74 L507.22 219.60 L505.78 219.43 L504.34 219.25 L502.88 219.05 L501.42 218.82 L499.95 218.57 L498.47 218.29 L496.99 217.99 L495.51 217.66 L494.02 217.30 L492.54 216.92 L491.06 216.52 L489.58 216.08 L488.11 215.62 L486.65 215.12 L485.19 214.60 L483.76 214.05 L482.33 213.47 L480.92 212.87 L479.53 212.23 L478.17 211.56 L476.82 210.86 L475.51 210.13 L474.22 209.38 L472.96 208.59 L471.74 207.77 L470.55 206.93 L469.40 206.05 L468.29 205.15 L467.23 204.22 L466.21 203.26 L465.24 202.27 L464.33 201.26 L463.46 200.23 L462.66 199.17 L461.91 198.08 L461.23 196.98 L460.61 195.85 L460.05 194.70 L459.57 193.53 L459.15 192.35 L458.81 191.15 L458.54 189.93 L458.35 188.71 L458.24 187.47 L458.22 186.22 L458.27 184.96 L458.41 183.69 L458.63 182.42 L458.94 181.15 L459.34 179.88 L459.83 178.61 L460.41 177.35 L461.08 176.09"/><path d="M581.11 181.24 L581.86 182.96 L582.48 184.71 L582.96 186.47 L583.31 188.25 L583.52 190.04 L583.58 191.83 L583.51 193.62 L583.30 195.42 L582.95 197.20 L582.46 198.98 L581.83 200.74 L581.06 202.49 L580.15 204.21 L579.12 205.91 L577.94 207.58 L576.64 209.21 L575.22 210.81 L573.67 212.37 L571.99 213.88 L570.21 215.35 L568.31 216.77 L566.30 218.13 L564.19 219.44 L561.98 220.68 L559.68 221.87 L557.29 222.99 L554.82 224.04 L552.27 225.03 L549.65 225.94 L546.97 226.78 L544.23 227.55 L541.44 228.23 L538.60 228.85 L535.73 229.38 L532.82 229.83 L529.89 230.20 L526.94 230.50 L523.98 230.71 L521.02 230.84 L518.06 230.89 L515.11 230.86 L512.18 230.75 L509.27 230.56 L506.38 230.29 L503.54 229.94 L500.73 229.52 L497.98 229.02 L495.28 228.46 L492.64 227.82 L490.06 227.11 L487.56 226.33 L485.13 225.49 L482.78 224.59 L480.52 223.63 L478.36 222.61 L476.28 221.53 L474.31 220.41 L472.43 219.24 L470.66 218.02 L469.01 216.76 L467.46 215.46 L466.03 214.12 L464.71 212.75 L463.51 211.35 L462.43 209.93 L461.48 208.49 L460.64 207.02 L459.93 205.54 L459.34 204.05 L458.88 202.55 L458.54 201.04 L458.32 199.53 L458.22 198.02 L458.24 196.52 L458.39 195.02 L458.65 193.53 L459.03 192.06 L459.53 190.60 L460.13 189.16 L460.85 187.75"/><path d="M580.93 192.79 L581.35 193.68 L581.72 194.56 L582.06 195.44 L582.37 196.31 L582.63 197.18 L582.86 198.03 L583.06 198.87 L583.22 199.71 L583.35 200.53 L583.45 201.34 L583.52 202.14 L583.57 202.93 L583.58 203.70 L583.58 204.46 L583.55 205.21 L583.49 205.95 L583.42 206.67 L583.32 207.38 L583.21 208.07 L583.07 208.75 L582.93 209.42 L582.76 210.07 L582.58 210.70 L582.39 211.32 L582.19 211.93 L581.98 212.52 L581.75 213.09 L581.52 213.65 L581.28 214.20 L581.04 214.73 L580.79 215.24 L580.53 215.74 L580.27 216.23 L580.01 216.69 L579.75 217.15 L579.48 217.59 L579.21 218.01 L578.95 218.43 L578.69 218.82 L578.43 219.20 L578.17 219.57 L577.91 219.92 L577.66 220.26 L577.42 220.59 L577.18 220.90 L576.94 221.19 L576.72 221.48 L576.50 221.75 L576.28 222.00 L576.08 222.24 L575.88 222.47 L575.70 222.69 L575.52 222.89 L575.35 223.08 L575.19 223.26 L575.04 223.43 L574.91 223.58 L574.78 223.72 L574.67 223.84 L574.56 223.96 L574.47 224.06 L574.39 224.15 L574.32 224.22 L574.27 224.29 L574.23 224.34 L574.19 224.38 L574.18 224.41 L574.17 224.42 L574.18 224.43"/><path d="M553.93 214.20 L553.92 214.21 L553.89 214.22 L553.84 214.24 L553.77 214.26 L553.68 214.30 L553.57 214.34 L553.44 214.39 L553.29 214.45 L553.12 214.52 L552.93 214.59 L552.72 214.67 L552.48 214.75 L552.23 214.85 L551.95 214.95 L551.66 215.06 L551.34 215.17 L551.00 215.29 L550.64 215.41 L550.26 215.54 L549.85 215.68 L549.43 215.82 L548.98 215.97 L548.51 216.12 L548.01 216.27 L547.49 216.43 L546.95 216.59 L546.39 216.75 L545.80 216.92 L545.19 217.09 L544.55 217.26 L543.89 217.44 L543.21 217.61 L542.50 217.79 L541.77 217.96 L541.01 218.13 L540.23 218.31 L539.42 218.48 L538.59 218.65 L537.73 218.82 L536.85 218.98 L535.94 219.14 L535.01 219.30 L534.05 219.45 L533.07 219.60 L532.06 219.74 L531.03 219.87 L529.97 220.00 L528.89 220.11 L527.79 220.22 L526.66 220.32 L525.51 220.41 L524.33 220.49 L523.13 220.55 L521.91 220.61 L520.67 220.65 L519.40 220.67 L518.12 220.68 L516.81 220.68 L515.49 220.66 L514.15 220.62 L512.79 220.57 L511.41 220.50 L510.02 220.41 L508.61 220.29 L507.19 220.16 L505.75 220.01 L504.31 219.83 L502.85 219.64 L501.39 219.42 L499.92 219.17 L498.44 218.90 L496.96 218.61 L495.48 218.29 L493.99 217.94 L492.51 217.57 L491.03 217.16 L489.55 216.74 L488.08 216.28 L486.62 215.80 L485.17 215.28 L483.73 214.74 L482.30 214.17 L480.89 213.56 L479.51 212.93 L478.14 212.27 L476.80 211.58 L475.48 210.86 L474.19 210.11 L472.94 209.33 L471.71 208.52 L470.53 207.68 L469.38 206.81 L468.27 205.91 L467.21 204.99 L466.19 204.04 L465.23 203.06 L464.31 202.05 L463.45 201.02 L462.64 199.97 L461.90 198.89 L461.22 197.79 L460.60 196.67 L460.04 195.53 L459.56 194.37 L459.14 193.19 L458.80 192.00 L458.54 190.79 L458.35 189.56 L458.24 188.33 L458.22 187.09 L458.27 185.83 L458.41 184.58 L458.64 183.31 L458.95 182.05 L459.35 180.78 L459.84 179.52 L460.42 178.26 L461.09 177.01"/><path d="M581.12 182.42 L581.87 184.15 L582.49 185.90 L582.97 187.66 L583.31 189.44 L583.52 191.23 L583.58 193.03 L583.51 194.82 L583.30 196.62 L582.94 198.40 L582.45 200.18 L581.82 201.95 L581.05 203.69 L580.14 205.41 L579.10 207.11 L577.93 208.78 L576.62 210.42 L575.19 212.01 L573.64 213.57 L571.97 215.09 L570.18 216.55 L568.28 217.97 L566.27 219.33 L564.16 220.64 L561.95 221.88 L559.64 223.07 L557.25 224.19 L554.78 225.24 L552.23 226.22 L549.61 227.13 L546.93 227.97 L544.19 228.73 L541.39 229.42 L538.56 230.03 L535.68 230.56 L532.78 231.01 L529.85 231.38 L526.90 231.67 L523.94 231.88 L520.98 232.01 L518.02 232.06 L515.07 232.03 L512.14 231.91 L509.22 231.72 L506.34 231.45 L503.50 231.10 L500.70 230.68 L497.94 230.18 L495.24 229.61 L492.60 228.96 L490.03 228.25 L487.52 227.47 L485.10 226.63 L482.75 225.72 L480.49 224.76 L478.33 223.74 L476.25 222.66 L474.28 221.53 L472.41 220.36 L470.64 219.13 L468.98 217.87 L467.44 216.57 L466.01 215.23 L464.69 213.86 L463.50 212.46 L462.42 211.03 L461.46 209.58 L460.63 208.11 L459.92 206.63 L459.33 205.13 L458.87 203.63 L458.53 202.12 L458.31 200.60 L458.22 199.09 L458.25 197.58 L458.39 196.08 L458.66 194.59 L459.04 193.12 L459.53 191.66 L460.14 190.21 L460.86 188.79"/><path d="M580.93 193.41 L581.35 194.29 L581.73 195.17 L582.07 196.04 L582.37 196.90 L582.63 197.75 L582.86 198.60 L583.06 199.43 L583.22 200.26 L583.35 201.07 L583.45 201.87 L583.52 202.67 L583.57 203.44 L583.58 204.21 L583.58 204.96 L583.55 205.70 L583.49 206.43 L583.42 207.14 L583.32 207.84 L583.21 208.53 L583.07 209.20 L582.92 209.85 L582.76 210.50 L582.58 211.12 L582.39 211.73 L582.19 212.33 L581.98 212.91 L581.75 213.48 L581.52 214.03 L581.28 214.56 L581.04 215.08 L580.79 215.59 L580.53 216.08 L580.27 216.56 L580.01 217.02 L579.74 217.46 L579.48 217.89 L579.22 218.31 L578.95 218.71 L578.69 219.10 L578.43 219.47 L578.17 219.83 L577.91 220.17 L577.66 220.50 L577.42 220.81 L577.18 221.12 L576.95 221.40 L576.72 221.68 L576.50 221.94 L576.29 222.18 L576.08 222.42 L575.89 222.64 L575.70 222.84 L575.52 223.04 L575.35 223.22 L575.20 223.39 L575.05 223.54 L574.91 223.68 L574.79 223.81 L574.67 223.93 L574.57 224.04 L574.48 224.13 L574.40 224.21 L574.33 224.28 L574.27 224.33 L574.23 224.37 L574.20 224.40 L574.18 224.42 L574.18 224.43"/></g>
<g fill="none" stroke="#000" stroke-width="1" stroke-dasharray="6 5 1 5" shape-rendering="crispEdges"><path d="M552.04 212.44 L551.96 212.44 L551.86 212.44 L551.74 212.45 L551.60 212.47 L551.44 212.50 L551.26 212.53 L551.06 212.57 L550.84 212.61 L550.60 212.66 L550.34 212.72 L550.07 212.78 L549.77 212.85 L549.45 212.93 L549.11 213.01 L548.75 213.10 L548.37 213.19 L547.97 213.29 L547.55 213.39 L547.11 213.50 L546.64 213.61 L546.16 213.72 L545.65 213.84 L545.12 213.96 L544.57 214.08 L543.99 214.21 L543.39 214.34 L542.77 214.47 L542.13 214.60 L541.47 214.73 L540.78 214.86 L540.06 214.99 L539.33 215.12 L538.57 215.25 L537.79 215.38 L536.98 215.50 L536.15 215.62 L535.29 215.74 L534.42 215.86 L533.52 215.97 L532.59 216.07 L531.64 216.17 L530.67 216.27 L529.68 216.36 L528.66 216.43 L527.62 216.51 L526.55 216.57 L525.47 216.62 L524.36 216.66 L523.23 216.70 L522.08 216.72 L520.91 216.73 L519.72 216.72 L518.51 216.70 L517.28 216.67 L516.03 216.62 L514.76 216.56 L513.48 216.48 L512.18 216.38 L510.87 216.27 L509.54 216.14 L508.20 215.98 L506.85 215.81 L505.48 215.62 L504.11 215.41 L502.73 215.17 L501.34 214.91 L499.95 214.63 L498.55 214.33 L497.15 214.00 L495.74 213.65 L494.34 213.27 L492.94 212.87 L491.55 212.44 L490.16 211.98 L488.78 211.50 L487.40 210.99 L486.04 210.46 L484.70 209.89 L483.37 209.30 L482.05 208.68 L480.76 208.03 L479.49 207.36 L478.24 206.65 L477.02 205.92 L475.83 205.16 L474.67 204.38 L473.55 203.56 L472.46 202.72 L471.41 201.85 L470.40 200.96 L469.44 200.04 L468.52 199.10 L467.65 198.13 L466.83 197.13 L466.06 196.12 L465.35 195.08 L464.70 194.02 L464.11 192.94 L463.58 191.84 L463.11 190.73 L462.72 189.59 L462.39 188.45 L462.13 187.28 L461.94 186.11 L461.83 184.92"/><path d="M579.94 189.94 L579.75 191.63 L579.42 193.32 L578.97 195.00 L578.38 196.66 L577.66 198.31 L576.81 199.94 L575.84 201.54 L574.74 203.12 L573.52 204.67 L572.18 206.18 L570.72 207.65 L569.15 209.08 L567.47 210.47 L565.68 211.82 L563.79 213.11 L561.81 214.35 L559.73 215.53 L557.56 216.65 L555.31 217.72 L552.98 218.72 L550.58 219.66 L548.11 220.53 L545.59 221.33 L543.00 222.06 L540.37 222.71 L537.70 223.30 L534.99 223.81 L532.25 224.25 L529.49 224.61 L526.71 224.90 L523.92 225.11 L521.12 225.24 L518.33 225.30 L515.54 225.28 L512.78 225.18 L510.03 225.02 L507.31 224.77 L504.62 224.46 L501.98 224.07 L499.38 223.62 L496.83 223.09 L494.33 222.50 L491.90 221.84 L489.54 221.12 L487.25 220.34 L485.03 219.50 L482.90 218.61 L480.85 217.66 L478.89 216.66 L477.02 215.61 L475.25 214.52 L473.58 213.38 L472.01 212.20 L470.55 210.99 L469.20 209.74 L467.95 208.46 L466.82 207.16 L465.80 205.83 L464.89 204.48 L464.10 203.11 L463.43 201.73 L462.87 200.34 L462.43 198.93 L462.11 197.52 L461.90 196.11 L461.80 194.71"/><path d="M579.99 202.90 L579.96 203.64 L579.91 204.36 L579.84 205.07 L579.74 205.76 L579.63 206.44 L579.51 207.11 L579.37 207.77 L579.21 208.41 L579.04 209.04 L578.86 209.65 L578.66 210.25 L578.46 210.84 L578.25 211.41 L578.03 211.96 L577.80 212.51 L577.57 213.03 L577.33 213.55 L577.09 214.05 L576.84 214.53 L576.59 215.01 L576.34 215.46 L576.09 215.91 L575.84 216.34 L575.59 216.75 L575.34 217.15 L575.09 217.54 L574.84 217.92 L574.60 218.28 L574.36 218.63 L574.13 218.96 L573.90 219.29 L573.68 219.59 L573.46 219.89 L573.25 220.17 L573.05 220.44 L572.86 220.70 L572.67 220.95 L572.49 221.18 L572.33 221.40 L572.17 221.61 L572.02 221.80 L571.88 221.99 L571.75 222.16 L571.63 222.32 L571.52 222.47 L571.42 222.61 L571.33 222.73 L571.25 222.84 L571.19 222.95 L571.14 223.04 L571.10 223.11 L571.07 223.18 L571.05 223.24 L571.04 223.28 L571.05 223.31 L571.06 223.33 L571.09 223.34 L571.13 223.34"/><path d="M552.04 212.44 L552.04 212.45 L552.01 212.46 L551.96 212.48 L551.89 212.50 L551.81 212.54 L551.70 212.58 L551.58 212.63 L551.44 212.68 L551.28 212.74 L551.10 212.81 L550.90 212.89 L550.68 212.97 L550.44 213.06 L550.18 213.15 L549.90 213.25 L549.60 213.36 L549.28 213.47 L548.94 213.59 L548.58 213.72 L548.20 213.84 L547.80 213.98 L547.37 214.12 L546.93 214.26 L546.46 214.41 L545.97 214.56 L545.46 214.71 L544.93 214.87 L544.38 215.02 L543.80 215.19 L543.20 215.35 L542.58 215.51 L541.94 215.68 L541.27 215.84 L540.58 216.01 L539.86 216.18 L539.13 216.34 L538.36 216.50 L537.58 216.67 L536.77 216.83 L535.94 216.98 L535.08 217.14 L534.20 217.28 L533.30 217.43 L532.38 217.57 L531.43 217.70 L530.45 217.83 L529.46 217.95 L528.44 218.06 L527.39 218.17 L526.33 218.26 L525.24 218.35 L524.13 218.42 L523.00 218.49 L521.85 218.54 L520.68 218.58 L519.49 218.61 L518.28 218.62 L517.05 218.62 L515.80 218.60 L514.53 218.57 L513.25 218.52 L511.95 218.45 L510.64 218.37 L509.31 218.27 L507.97 218.14 L506.62 218.00 L505.26 217.84 L503.89 217.66 L502.51 217.45 L501.12 217.22 L499.73 216.97 L498.33 216.69 L496.93 216.40 L495.53 216.07 L494.13 215.72 L492.73 215.35 L491.34 214.95 L489.96 214.52 L488.58 214.06 L487.21 213.58 L485.85 213.07 L484.51 212.54 L483.18 211.97 L481.87 211.38 L480.58 210.76 L479.32 210.11 L478.08 209.43 L476.86 208.73 L475.68 208.00 L474.52 207.23 L473.40 206.45 L472.32 205.63 L471.28 204.79 L470.28 203.92 L469.32 203.03 L468.41 202.11 L467.54 201.16 L466.73 200.20 L465.97 199.21 L465.27 198.19 L464.63 197.16 L464.04 196.11 L463.52 195.03 L463.06 193.94 L462.67 192.84 L462.35 191.71 L462.10 190.58 L461.93 189.43 L461.82 188.27"/><path d="M580.00 193.02 L579.93 194.72 L579.73 196.42 L579.40 198.11 L578.93 199.79 L578.34 201.46 L577.61 203.11 L576.75 204.74 L575.77 206.34 L574.67 207.92 L573.44 209.47 L572.09 210.98 L570.63 212.45 L569.05 213.89 L567.36 215.27 L565.57 216.61 L563.68 217.90 L561.68 219.14 L559.60 220.32 L557.43 221.44 L555.17 222.50 L552.84 223.50 L550.44 224.43 L547.97 225.29 L545.44 226.09 L542.86 226.81 L540.22 227.47 L537.55 228.05 L534.84 228.55 L532.10 228.98 L529.34 229.34 L526.56 229.62 L523.77 229.82 L520.97 229.94 L518.18 229.99 L515.40 229.97 L512.64 229.86 L509.89 229.69 L507.18 229.44 L504.49 229.11 L501.85 228.72 L499.25 228.25 L496.71 227.72 L494.22 227.12 L491.79 226.45 L489.43 225.72 L487.14 224.93 L484.93 224.08 L482.80 223.18 L480.76 222.22 L478.80 221.21 L476.94 220.15 L475.18 219.05 L473.51 217.90 L471.95 216.71 L470.49 215.49 L469.14 214.23 L467.90 212.94 L466.78 211.63 L465.76 210.29 L464.86 208.92 L464.08 207.54 L463.41 206.15 L462.85 204.74 L462.42 203.33 L462.10 201.91 L461.89 200.49 L461.80 199.07"/><path d="M580.00 204.93 L579.97 205.63 L579.91 206.32 L579.84 206.99 L579.75 207.65 L579.65 208.30 L579.52 208.93 L579.38 209.56 L579.23 210.16 L579.06 210.75 L578.88 211.33 L578.69 211.90 L578.49 212.45 L578.28 212.98 L578.06 213.50 L577.83 214.01 L577.60 214.50 L577.36 214.98 L577.12 215.44 L576.88 215.89 L576.63 216.33 L576.38 216.75 L576.13 217.16 L575.88 217.55 L575.63 217.93 L575.39 218.30 L575.14 218.65 L574.90 218.99 L574.66 219.31 L574.42 219.62 L574.19 219.92 L573.96 220.21 L573.74 220.48 L573.53 220.74 L573.32 220.98 L573.12 221.22 L572.93 221.44 L572.74 221.64 L572.57 221.84 L572.40 222.02 L572.24 222.19 L572.09 222.35 L571.95 222.50 L571.82 222.63 L571.71 222.76 L571.60 222.87 L571.50 222.97 L571.42 223.05 L571.34 223.13 L571.28 223.19 L571.22 223.25 L571.18 223.29 L571.15 223.32 L571.14 223.33 L571.13 223.34"/></g>

<defs><radialGradient id="sph" cx="0.45" cy="0.4" r="0.6"><stop offset="0" stop-color="#ffffff"/><stop offset="0.6" stop-color="#f0f0f0"/><stop offset="1" stop-color="#a0a0a0"/></radialGradient></defs><path d="M931.70 731.80 L963.31 713.55 L960.31 708.35 L928.70 726.60 Z" fill="#00e000"/><path d="M957.57 708.50 L957.62 707.76 L957.77 707.11 L958.03 706.54 L958.38 706.09 L958.81 705.75 L959.32 705.55 L959.88 705.47 L973.50 704.20 L965.59 715.36 L965.24 715.81 L964.81 716.15 L964.30 716.35 L963.74 716.43 L963.12 716.37 L962.47 716.17 L961.81 715.85 L961.15 715.41 L960.50 714.85 L959.88 714.20 L959.32 713.47 L958.81 712.68 L958.38 711.85 L958.03 710.99 L957.77 710.13 L957.62 709.30 Z" fill="#00a400"/><path d="M933.90 729.20 L933.90 692.70 L927.90 692.70 L927.90 729.20 Z" fill="#0000cc"/><path d="M924.70 692.70 L924.77 692.16 L924.99 691.63 L930.70 679.20 L936.41 691.63 L936.63 692.16 L936.70 692.70 L936.63 693.24 L936.41 693.77 L936.05 694.27 L935.55 694.74 L934.94 695.15 L934.23 695.50 L933.42 695.79 L932.55 696.00 L931.64 696.12 L930.70 696.16 L929.76 696.12 L928.85 696.00 L927.98 695.79 L927.17 695.50 L926.46 695.15 L925.85 694.74 L925.35 694.27 L924.99 693.77 L924.77 693.24 Z" fill="#0000f8"/><path d="M928.70 731.80 L960.31 750.05 L963.31 744.85 L931.70 726.60 Z" fill="#d80000"/><path d="M957.57 749.90 L957.62 749.10 L957.77 748.27 L958.03 747.41 L958.38 746.55 L958.81 745.72 L959.32 744.93 L959.88 744.20 L960.50 743.55 L961.15 742.99 L961.81 742.55 L962.47 742.23 L963.12 742.03 L963.74 741.97 L964.30 742.05 L964.81 742.25 L965.24 742.59 L965.59 743.04 L973.50 754.20 L959.88 752.93 L959.32 752.85 L958.81 752.65 L958.38 752.31 L958.03 751.86 L957.77 751.29 L957.62 750.64 Z" fill="#e80000"/><circle cx="930.2" cy="729.2" r="4.6" fill="url(#sph)"/>
<g font-family="Liberation Serif, serif" font-size="14.5" fill="#2a2a2a" text-anchor="middle">
<text x="933" y="672">Z</text><text x="983.5" y="699.8">Y</text><text x="981" y="758">X</text></g></svg>
<div id="wm">https://blog.csdn.net/weixin_42755384</div>
</body></html>
